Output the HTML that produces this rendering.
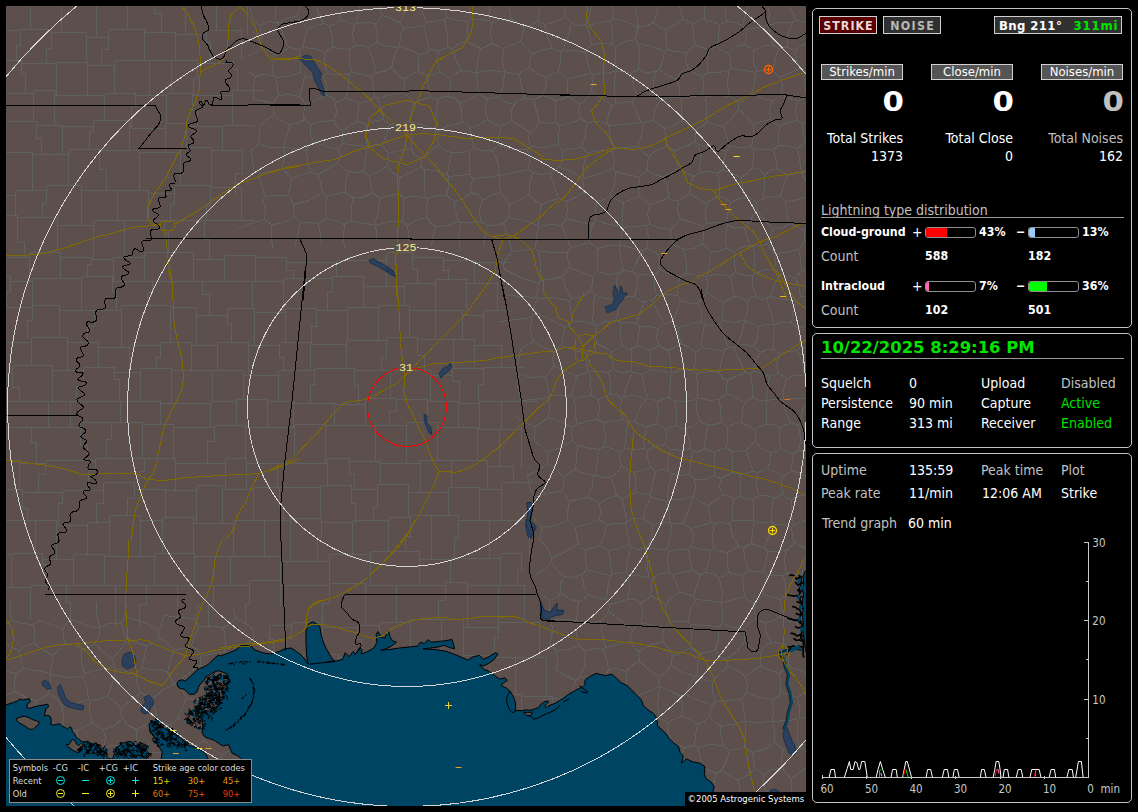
<!DOCTYPE html>
<html>
<head>
<meta charset="utf-8">
<title>Lightning Detector</title>
<style>
html,body{margin:0;padding:0;background:#000;}
body{width:1138px;height:812px;position:relative;overflow:hidden;font-family:"DejaVu Sans Condensed","Liberation Sans","DejaVu Sans",sans-serif;font-size:12px;color:#fff;}
#map{position:absolute;left:6px;top:6px;width:800px;height:800px;background:#5d4f4b;overflow:hidden;}
#map svg{position:absolute;left:0;top:0;}
.panel{position:absolute;left:812px;width:318px;border:1px solid #c4c4c4;border-radius:5px;background:#000;}
.t{position:absolute;white-space:nowrap;line-height:16px;height:16px;font-size:12px;}
.b{font-weight:bold;}
.g{color:#c0c0c0;}
.gr{color:#00e000;}
.r{text-align:right;}
.btn{position:absolute;box-sizing:border-box;border:1px solid #d0d0d0;text-align:center;white-space:nowrap;}
.bar{position:absolute;box-sizing:border-box;width:51px;height:11px;border:1px solid #909090;border-radius:3px;background:#000;overflow:hidden;}
.bar i{display:block;height:100%;}
.n{font-size:14px;}
.s{font-size:12.3px;}
.big{font-family:"DejaVu Sans","Liberation Sans",sans-serif;font-size:27px;line-height:32px;height:32px;transform:scaleX(1.14);transform-origin:100% 50%;}
.date{font-family:"DejaVu Sans","Liberation Sans",sans-serif;font-size:16.45px;line-height:22px;height:22px;color:#00e400;}
.lg{transform:translate(-1.3px,-1px);position:absolute;white-space:nowrap;font-size:9.25px;line-height:12px;color:#dcdcdc;}
.hr{position:absolute;height:1px;background:#9a9a9a;}
</style>
</head>
<body>
<div id="map">
<svg id="mapsvg" width="800" height="800" viewBox="6 6 800 800">
<path transform="translate(0.5,0.5)" d="M14,821L13,809L7,798 M-22,800L-7,798L7,798 M248,820L249,809L251,795 M227,824L223,810L217,796 M251,795L234,792L219,794 M217,796L219,794 M192,821L191,811L194,804 M194,804L206,800L217,796 M134,820L136,809L134,796 M99,819L98,810L101,800 M101,800L119,799L134,796 M165,794L150,796L135,794 M165,794L162,805L161,820 M135,794L134,796 M223,627L225,641L224,651 M223,627L212,626L198,626 M224,651L213,653L200,656 M198,626L193,637L191,646 M191,646L197,649L200,656 M221,754L228,751L237,746 M221,754L219,763L218,770 M237,746L246,748L251,752 M218,770L235,772L250,775 M251,752L250,762L250,775 M253,792L254,784 M253,792L251,795 M218,770L216,772 M216,772L217,783L219,794 M250,775L254,784 M36,700L43,697L48,693 M36,700L32,709L28,720 M48,693L56,698L62,706 M28,720L31,724 M55,731L41,728L31,724 M55,731L62,725 M62,706L63,716L62,725 M69,758L73,754L80,746 M69,758L61,752L53,745 M80,746L78,739L76,730 M53,745L55,738L55,731 M62,725L70,729L76,730 M14,691L26,697L36,700 M14,691L8,694L2,698 M2,698L3,706L1,715 M28,720L16,720L6,720 M1,715L6,720 M2,698L-11,692L-20,682 M1,715L-11,719L-23,721 M6,720L6,731L4,745 M4,745L-8,745L-23,742 M499,175L499,184L500,192 M499,175L514,172L528,169 M509,204L505,198L500,192 M509,204L520,199L529,194 M528,169L532,172 M529,194L529,184L532,172 M531,317L516,319L499,321 M531,317L530,331L533,341 M520,349L526,345L533,341 M108,772L119,772L131,775 M108,772L102,765 M102,765L102,756L101,749 M101,749L103,746 M103,746L118,745L134,746 M137,750L134,746 M137,750L134,762L132,773 M132,773L131,775 M98,794L101,800 M98,794L102,785L108,772 M135,794L131,784L131,775 M70,774L86,768L102,765 M70,774L70,774 M98,794L85,790L72,788 M70,774L72,782L72,788 M70,774L67,766L69,758 M80,746L89,748L101,749 M103,729L98,727L92,722 M103,729L105,738L103,746 M76,730L85,726L92,722 M136,729L136,738L134,746 M136,729L128,725L122,718 M122,718L114,725L103,729 M163,752L163,763L164,773 M163,752L150,752L137,750 M164,773L147,773L132,773 M136,729L144,725L157,719 M122,718L120,712L121,707 M157,719L155,710L152,698 M152,698L146,695L140,692 M140,692L129,701L121,707 M177,718L172,723L168,724 M177,718L192,724L205,730 M168,724L168,733L171,745 M171,745L178,749L188,751 M188,751L195,746L204,739 M205,730L204,739 M157,719L161,721L168,724 M163,752L168,746L171,745 M207,728L220,728L233,726 M207,728L205,730 M221,754L211,748L204,739 M237,746L235,737L233,726 M193,802L193,788L192,770 M193,802L178,799L166,793 M166,793L167,785L168,778 M168,778L180,775L191,769 M192,770L191,769 M194,804L193,802 M216,772L206,773L192,770 M165,794L166,793 M164,773L168,778 M188,751L191,759L191,769 M173,684L181,689L186,698 M173,684L173,684 M173,684L187,674L200,664 M186,698L196,699L208,698 M200,664L206,675L212,685 M212,685L213,689L212,695 M208,698L212,695 M152,698L162,690L173,684 M177,718L181,709L186,698 M207,728L206,713L208,698 M233,657L230,654L224,651 M233,657L235,664 M235,664L225,674L212,685 M200,656L200,664 M235,664L240,670L248,674 M248,674L243,685L239,698 M234,701L222,699L212,695 M234,701L239,698 M237,720L233,726 M237,720L236,712L234,701 M126,606L124,612L125,616 M125,616L144,622L158,630 M164,615L161,623L158,630 M194,618L197,611L198,603 M194,618L179,617L164,615 M191,646L184,648L173,649 M173,684L171,679L167,671 M167,671L170,661L173,649 M194,618L198,626 M158,630L158,637 M173,649L165,641L158,637 M96,601L96,614L99,627 M125,616L121,623 M121,623L108,623L99,627 M71,619L84,624L99,628 M99,627L99,628 M237,720L253,722L264,724 M14,691L14,680L16,673 M50,674L50,683L48,693 M50,674L50,673 M16,673L23,668 M23,668L36,670L50,673 M16,673L7,671L-2,668 M5,642L2,646L-2,649 M5,642L11,647L19,650 M23,668L20,659L19,650 M26,748L33,752L38,754 M26,748L19,749L10,753 M10,753L8,760L6,769 M41,771L27,775L11,778 M41,771L41,761L38,754 M6,769L9,772L11,778 M53,745L47,751L38,754 M31,724L28,735L26,748 M4,745L8,750L10,753 M-23,770L-9,770L6,769 M11,791L12,783L11,778 M11,791L26,791L40,794 M42,772L40,785L40,794 M42,772L41,771 M70,774L54,775L42,772 M11,791L7,798 M74,819L72,805L68,794 M68,794L55,796L45,801 M45,801L42,810L40,821 M72,788L68,794 M40,794L45,801 M539,540L547,547L551,558 M551,558L551,562 M551,562L543,570L535,574 M530,505L535,497 M535,497L529,487L527,475 M542,527L537,522L532,516 M542,527L555,525L567,520 M567,520L567,512L569,501 M535,497L548,492L561,491 M561,491L566,496L569,501 M599,519L589,523L575,527 M599,519L606,524 M606,524L604,534L599,546 M575,527L576,535L578,543 M578,543L581,548L586,549 M599,546L593,547L586,549 M542,527L540,535L539,540 M567,520L571,523L575,527 M551,558L565,551L578,543 M625,523L627,532L629,544 M625,523L615,523L606,524 M599,546L608,550 M629,544L619,548L608,550 M233,657L242,646L253,638 M612,151L614,159L613,168 M612,151L601,150L587,152 M613,168L597,174L583,178 M587,152L583,165L583,178 M492,43L498,46L503,48 M492,43L486,46L480,48 M503,48L502,60L504,71 M504,71L489,70L476,72 M480,48L477,62L476,72 M459,103L470,98L478,93 M459,103L461,111L461,122 M461,122L466,123L469,128 M469,128L479,124L487,119 M478,93L486,98 M487,119L485,110L486,98 M504,71L504,71 M504,71L503,84L499,96 M478,93L477,84L476,73 M476,73L476,72 M499,96L491,98L486,98 M511,19L509,9L511,-3 M511,19L500,19L491,23 M491,23L489,21 M489,21L489,8L492,-4 M492,43L490,34L491,23 M503,48L513,44L520,41 M523,27L522,34L520,41 M523,27L517,22L511,19 M471,-3L469,6L470,19 M470,19L481,19L489,21 M582,179L583,178 M582,179L572,171L559,167 M559,167L562,158L562,150 M587,152L581,147 M581,147L572,148L562,150 M528,169L529,160L527,149 M527,149L530,146 M530,146L543,147L558,144 M550,173L540,174L532,172 M550,173L553,169L559,167 M558,144L562,150 M498,145L498,136L501,125 M498,145L514,149L527,149 M530,146L528,139L529,132 M501,125L505,124L511,120 M529,132L522,127L511,120 M487,119L494,124L501,125 M499,96L504,101L514,104 M511,120L511,110L514,104 M520,349L518,360L516,372 M562,276L566,270L569,267 M562,276L550,279L540,280 M540,280L540,264L538,251 M538,251L554,252L567,252 M567,252L567,258L569,267 M538,283L537,289L536,297 M538,283L540,280 M536,297L537,298 M571,298L565,287L562,276 M571,298L569,300 M537,298L553,297L569,300 M538,283L522,278L504,269 M512,251L524,250L535,248 M512,251L506,258 M535,248L538,251 M506,258L503,264L504,269 M512,251L507,235L503,223 M503,223L495,225L487,225 M483,246L484,236L487,225 M482,200L490,195L500,192 M482,200L479,209L480,221 M509,204L509,210L508,217 M508,217L503,223 M480,221L487,225 M536,297L520,296L502,294 M531,317L535,312 M535,312L534,305L537,298 M571,298L582,296L590,290 M569,267L579,271L592,276 M590,290L592,284L592,276 M597,248L597,259L597,271 M597,248L589,242 M589,242L579,245L570,247 M570,247L567,252 M597,271L592,276 M814,453L806,451L799,450 M806,476L812,472L818,466 M806,476L798,472L790,471 M799,450L793,453 M790,471L792,461L793,453 M772,721L758,722L745,721 M772,721L774,731L774,742 M745,721L745,735L744,747 M744,747L752,752 M774,742L764,749L752,752 M772,721L773,711L772,699 M772,721L786,720L797,719 M799,717L797,719 M799,717L799,706L797,697 M797,697L786,693L780,692 M772,699L778,696L780,692 M772,721L772,721 M745,721L745,720 M745,720L743,708L741,699 M746,692L741,699 M746,692L759,697L772,699 M745,720L733,724L720,725 M729,750L735,749L744,747 M729,750L723,745 M720,725L720,734L723,745 M668,722L659,718 M668,722L667,730L671,741 M659,718L654,723L646,723 M646,723L647,737L646,749 M646,749L648,752 M671,741L658,745L648,752 M583,818L584,810L584,802 M555,801L566,793L573,788 M584,802L579,796L573,788 M92,722L89,712L89,700 M121,707L113,701L107,696 M107,696L97,699L89,700 M62,706L75,703L88,699 M88,699L89,700 M50,674L66,677L82,676 M88,699L86,685L82,676 M146,645L144,655L141,668 M146,645L138,643L127,639 M127,639L119,650L112,658 M135,673L125,671L115,668 M135,673L141,668 M112,658L114,667 M115,668L114,667 M167,671L154,669L141,668 M158,637L152,643L146,645 M121,623L123,630L127,639 M99,628L99,634L95,643 M95,643L103,652L112,658 M140,692L137,684L135,673 M107,696L113,680L115,668 M81,649L90,646L95,643 M81,649L81,661L84,673 M84,673L98,669L114,667 M82,676L84,673 M239,698L253,701L269,704 M63,629L53,625L40,620 M63,629L63,635L64,643 M64,643L57,650L53,655 M53,655L43,650L34,643 M34,643L34,633L33,624 M33,624L40,620 M71,619L66,622L63,629 M81,649L73,644L64,643 M50,673L51,665L53,655 M19,650L25,645L34,643 M829,222L822,223L811,224 M804,240L804,230 M804,240L813,248L822,252 M811,224L804,230 M527,475L537,470L547,463 M561,491L563,485L563,477 M563,477L556,469L547,463 M534,440L541,446L547,452 M547,463L547,456L547,452 M563,477L569,472L575,469 M547,452L560,447L572,440 M572,440L577,445 M577,445L576,457L575,469 M541,699L556,698L573,696 M572,715L574,706L573,696 M572,715L557,718L546,722 M235,618L242,621L253,629 M235,618L234,614L233,607 M223,627L229,624L235,618 M253,638L253,629 M658,1L664,-4 M658,1L645,-2L632,-2 M653,22L657,12L658,1 M653,22L647,25L638,27 M632,-2L636,11L638,27 M630,-5L621,-1L611,0 M638,27L638,27 M638,27L625,21L612,18 M612,18L613,10L611,0 M609,196L616,199L623,202 M609,196L604,199L596,201 M595,219L595,212L596,201 M595,219L608,224L622,226 M622,226L622,216L623,202 M615,171L614,185L609,196 M615,171L627,174L639,177 M639,177L638,188L639,196 M639,196L633,198L623,202 M582,179L583,185L583,192 M613,168L615,171 M583,192L588,194L596,201 M597,248L609,245L619,245 M622,227L622,226 M622,227L621,236L619,244 M589,242L590,232L592,224 M592,224L595,219 M619,244L619,245 M622,227L636,226L646,225 M646,225L649,223 M649,223L647,213L649,204 M649,204L644,199L639,196 M470,19L467,21 M480,48L474,45L466,41 M466,41L467,33L467,21 M446,-2L445,7L446,17 M467,21L457,20L446,17 M446,17L444,19 M444,19L434,21L426,22 M426,22L422,12L418,-2 M472,178L469,174 M472,178L486,177L499,175 M469,174L469,161L469,151 M499,175L497,161L492,150 M492,150L481,150L473,147 M473,147L469,151 M482,200L478,194L470,192 M499,175L499,175 M470,192L471,186L472,178 M451,152L461,152L469,151 M451,152L449,161L447,174 M447,174L448,176 M448,176L458,175L469,174 M498,145L492,150 M469,128L472,139L473,147 M504,71L511,73L519,74 M514,104L517,100L524,98 M519,74L521,86L524,98 M529,132L535,128L539,121 M539,121L536,111L533,99 M524,98L533,99 M558,144L558,137L559,125 M539,121L546,123L555,122 M555,122L559,125 M565,17L564,10L566,2 M565,17L553,22L544,24 M544,24L537,20 M537,20L539,11L537,1 M566,2L559,0L555,-4 M555,-4L546,-1L537,1 M523,27L531,25L537,20 M531,-6L537,1 M611,0L603,-4 M653,22L659,27L666,29 M666,29L676,23L682,19 M664,-4L670,-0L678,4 M682,19L681,11L678,4 M688,-2L682,-1L678,4 M548,397L549,408L548,417 M548,397L534,399L520,400 M548,417L541,422L534,426 M534,426L524,422L515,416 M545,376L530,377L518,373 M545,376L547,385L549,395 M518,373L517,385L520,400 M549,395L548,397 M534,440L534,433L534,426 M572,427L560,421L548,417 M572,427L571,433L572,440 M516,372L518,373 M558,198L548,201L541,204 M558,198L566,201 M566,201L567,208L566,218 M541,204L539,214L538,225 M561,225L566,218 M561,225L550,224L538,226 M538,225L538,226 M529,194L534,200L541,204 M550,173L554,187L558,198 M583,192L576,196L566,201 M592,224L578,221L566,218 M508,217L524,220L538,225 M570,247L566,237L561,225 M535,248L536,236L538,226 M811,22L810,33L808,43 M811,22L819,22L830,25 M808,43L815,48L822,52 M815,-0L812,11L811,22 M811,22L811,22 M461,122L448,125L438,130 M451,152L443,149L438,144 M438,130L437,138L438,144 M459,103L455,98L447,96 M447,96L443,96L437,99 M438,130L437,130 M437,130L436,113L437,99 M438,144L429,152L421,158 M409,121L425,125L437,130 M409,121L411,134L411,149 M421,158L414,155L411,149 M466,41L459,43L452,48 M444,19L447,35L447,47 M447,47L452,48 M476,73L470,71L461,70 M452,48L456,61L461,70 M447,96L450,87L450,78 M461,70L455,73L450,78 M545,376L550,371L553,365 M533,341L543,347L554,351 M553,365L552,358L554,351 M671,229L660,228L649,223 M671,229L670,236L673,244 M646,225L648,238L646,248 M673,244L666,248L659,255 M659,255L653,251L646,248 M619,244L629,247L642,250 M642,250L646,248 M730,202L724,197L719,196 M730,202L727,214L726,223 M706,203L711,199L719,196 M706,203L705,215L706,223 M726,223L715,222L706,223 M680,219L675,224L671,229 M680,219L692,222L703,226 M673,244L677,246L683,249 M683,249L693,248L702,243 M703,226L703,236L702,243 M726,223L727,224 M703,226L706,223 M702,243L707,248L710,251 M710,251L718,251L726,248 M726,248L725,237L727,224 M799,450L800,437L798,424 M780,427L783,425L790,423 M780,427L779,439L780,448 M780,448L787,451L793,453 M790,423L798,424 M822,400L815,398L811,396 M817,428L807,427L800,423 M811,396L808,398 M808,398L802,409L800,423 M800,423L798,424 M783,749L781,757L781,767 M783,749L790,749L798,747 M809,765L799,772L791,778 M809,765L806,756L805,749 M791,778L786,774L781,767 M805,749L798,747 M774,742L778,745L783,749 M797,719L797,733L798,747 M779,673L780,683L780,692 M779,673L784,669L788,666 M788,666L801,670L809,675 M797,697L802,693L808,690 M809,675L810,683L808,690 M799,717L808,719L820,719 M805,749L812,746L820,740 M808,690L821,698L830,705 M823,775L818,770L809,765 M745,676L737,670L728,666 M745,676L754,669L760,666 M744,641L751,647L760,653 M744,641L736,651L726,659 M728,666L726,659 M760,666L760,659L760,653 M779,673L771,670L760,666 M746,692L747,685L745,676 M791,646L781,643L771,642 M791,646L788,657L788,666 M771,642L764,646L760,653 M771,642L766,633L764,622 M764,622L756,619 M744,641L744,634L743,628 M756,619L749,622L743,628 M718,626L718,638L715,650 M718,626L722,623 M715,650L719,656L726,659 M743,628L732,627L722,623 M668,722L673,719L681,716 M659,718L657,704L659,686 M659,686L659,686 M659,686L669,690L681,696 M681,716L682,706L681,696 M671,741L676,744L684,747 M681,716L688,718L697,724 M697,724L695,736L694,745 M684,747L690,746L694,745 M720,725L716,723L709,716 M723,745L710,744L697,747 M697,724L705,720L709,716 M697,747L694,745 M631,714L622,722L613,730 M631,714L631,708L629,699 M629,699L618,697L607,694 M613,730L605,728L597,722 M597,722L598,711L599,702 M607,694L601,698L599,702 M646,723L638,717L631,714 M615,742L629,746L646,749 M615,742L615,735L613,730 M659,686L643,693L629,699 M629,699L629,699 M578,741L582,733L584,726 M578,741L587,746L594,752 M594,752L605,750L613,745 M613,745L615,742 M584,726L591,725L597,722 M584,726L578,719L572,715 M574,693L573,696 M574,693L588,698L599,702 M563,752L563,760L566,767 M575,777L575,784L573,788 M575,777L569,770L566,767 M578,741L571,747L563,752 M594,752L594,763L590,773 M590,773L583,774L575,777 M-19,623L-7,626L3,628 M10,600L10,609L11,620 M11,620L5,623L3,628 M5,642L2,635L3,628 M33,624L22,623L11,620 M730,202L738,198L746,197 M757,210L749,220L744,227 M757,210L756,202 M744,227L733,227L727,224 M746,197L750,198L756,202 M811,224L809,208L808,196 M804,230L795,225L789,223 M789,223L786,212L785,201 M785,201L798,199L808,196 M831,192L819,195L809,195 M809,195L808,196 M821,167L810,168L801,172 M809,195L806,182L801,172 M631,546L627,559L626,572 M631,546L629,544 M608,550L610,560L611,574 M626,572L620,572L611,574 M586,549L585,557L586,569 M586,569L600,573L610,575 M611,574L610,575 M551,562L557,571L564,576 M586,569L582,574 M564,576L572,577L582,574 M606,599L607,588L610,575 M606,599L595,597L587,594 M582,574L583,584L587,594 M606,599L609,604 M628,574L626,572 M628,574L629,588L627,599 M627,599L617,602L609,604 M480,221L471,222L460,222 M460,222L458,236L460,251 M569,501L577,499L587,497 M575,469L582,472L593,475 M593,475L592,485L587,497 M626,521L624,508L622,498 M626,521L625,523 M622,498L616,495 M599,519L600,511L599,503 M616,495L607,498L599,503 M599,503L595,500L587,497 M593,475L595,474 M616,495L614,487L610,477 M610,477L601,477L595,474 M577,445L586,447L598,449 M595,474L597,461L598,449 M610,477L617,472L621,465 M604,446L611,448L620,452 M604,446L598,449 M621,465L619,459L620,452 M643,518L645,507L651,497 M643,518L647,521L652,524 M652,524L661,522L669,522 M669,522L669,512L666,501 M666,501L656,498L651,497 M723,494L729,496L733,499 M723,494L719,487L720,478 M720,478L726,475L732,472 M740,496L740,486L740,474 M740,496L733,499 M732,472L740,474 M732,520L742,520L753,520 M732,520L732,511L733,499 M753,499L753,511L753,520 M753,499L745,498L740,496 M700,653L695,651L690,647 M700,653L708,651L715,650 M718,626L705,625L690,624 M690,647L691,637L690,624 M722,623L722,612L721,602 M695,599L708,600L721,602 M695,599L689,612L688,621 M688,621L690,624 M753,499L758,495 M758,495L767,495L773,498 M753,520L754,521 M754,521L763,522L771,522 M773,498L771,509L771,522 M751,543L752,531L754,521 M751,543L743,547 M732,520L729,523 M743,547L738,546 M738,546L732,535L729,523 M723,494L713,501L708,505 M711,522L708,511L708,505 M711,522L714,523 M714,523L720,522L729,523 M574,693L573,687L575,680 M575,680L565,675L556,670 M556,670L557,661L556,650 M549,643L551,646L556,650 M581,147L585,133L586,122 M559,125L572,122L581,118 M586,122L581,118 M643,122L641,135L637,146 M643,122L641,122 M614,148L625,147L637,146 M614,148L610,137L608,125 M641,122L626,124L608,125 M612,151L614,148 M586,122L598,121L607,123 M608,125L607,123 M643,122L648,121L653,120 M637,146L643,152L648,156 M664,128L657,123L653,120 M664,128L665,135L666,146 M648,156L656,150L666,146 M639,177L641,174L647,170 M648,156L647,164L647,170 M695,130L695,135L695,141 M695,130L690,126L682,120 M695,141L685,146L674,150 M682,120L674,124L664,128 M674,150L666,146 M533,99L536,98L542,95 M555,122L555,111L555,100 M542,95L549,97L555,100 M807,-9L798,-1L788,4 M811,22L804,21L795,20 M795,20L793,13L788,4 M784,-26L783,-12L783,1 M788,4L783,1 M566,2L574,-3L579,-6 M549,395L559,395L571,395 M553,365L564,370L576,375 M571,395L574,384L576,375 M458,221L447,225L436,226 M458,221L454,209L454,201 M454,201L446,195 M446,195L436,195L427,198 M427,198L426,209L427,217 M427,217L430,223L436,226 M460,222L458,221 M431,247L432,236L436,226 M470,192L463,198L454,201 M448,176L448,187L446,195 M407,225L408,234L409,242 M407,225L417,219L427,217 M409,121L409,121 M437,99L430,97 M430,97L421,99L413,103 M409,121L410,114L413,103 M447,174L434,170L424,169 M427,198L425,197 M425,197L424,183L424,169 M421,158L421,166 M424,169L421,166 M447,47L438,50 M450,78L444,74L439,71 M438,50L437,60L439,71 M430,97L428,86L426,75 M439,71L434,74L426,75 M404,79L412,73L418,71 M404,79L404,84L403,92 M403,92L409,97L413,103 M426,75L418,71 M360,-0L370,2L378,1 M380,-24L378,-10L378,1 M554,351L561,345 M576,375L582,374L588,371 M588,371L586,363L586,353 M561,345L575,350L586,353 M535,312L552,320L565,327 M561,345L563,334L565,327 M569,300L570,310L572,321 M572,321L565,327 M726,447L720,449L714,452 M726,447L731,451 M731,451L732,460L732,472 M720,478L714,475 M714,452L714,465L714,475 M686,428L694,425L699,420 M686,428L688,436L690,448 M690,448L693,451 M704,448L698,451L693,451 M704,448L705,436L708,424 M708,424L703,423L699,420 M726,447L727,436L727,426 M727,426L721,422 M714,452L708,450L704,448 M708,424L715,424L721,422 M780,427L773,424L766,424 M766,424L766,412L766,400 M766,400L766,400 M790,423L786,413L782,399 M766,400L774,399L782,399 M808,398L794,398L783,399 M782,399L783,399 M755,430L749,426L741,422 M755,430L759,426L766,424 M741,422L742,411L744,402 M766,400L759,400L752,397 M752,397L744,402 M811,396L810,385L807,376 M807,376L813,374L821,369 M804,240L802,245L798,249 M789,223L781,228L773,228 M767,244L769,237L773,228 M767,244L770,249L775,253 M798,249L785,252L775,253 M755,441L749,446L746,450 M755,441L761,448L770,452 M746,450L749,460L753,471 M770,452L770,460L767,468 M767,468L762,470L757,472 M757,472L753,471 M727,426L735,423L741,422 M755,430L755,436L755,441 M731,451L738,451L746,450 M780,448L777,451L770,452 M740,474L747,472L753,471 M782,476L776,472L767,468 M782,476L790,471 M782,476L781,483L782,494 M758,495L756,485L757,472 M782,494L773,498 M721,770L729,775L738,780 M721,770L727,758L729,750 M752,752L753,761L754,769 M738,780L748,774L754,769 M781,767L770,770L763,775 M763,775L760,771L754,769 M759,822L760,810L756,799 M766,791L762,797L756,799 M766,791L779,796L792,800 M790,812L790,805L792,800 M792,800L792,800 M731,802L733,811L732,820 M731,802L736,797L739,795 M739,795L749,796L756,799 M738,780L739,788L739,795 M763,775L763,784L766,791 M791,778L791,788L792,800 M815,796L805,800L792,800 M791,646L797,641 M797,641L806,643L817,648 M809,675L814,672 M797,622L801,617L807,613 M797,622L790,621L779,616 M779,616L781,609L780,599 M807,613L806,607L808,602 M780,599L785,595 M785,595L795,596L806,600 M808,602L806,600 M797,641L798,632L797,622 M764,622L772,621L779,616 M762,594L758,598L753,602 M762,594L771,596L780,599 M753,602L754,611L756,619 M762,594L764,583L767,575 M767,575L776,575L783,575 M783,575L785,584L785,595 M802,574L793,574L786,573 M802,574L803,575 M783,575L786,573 M803,575L806,589L806,600 M803,575L814,576L825,573 M820,597L815,600L808,602 M636,774L626,770L616,768 M636,774L633,786L633,797 M633,797L623,796L611,797 M604,777L608,785L608,795 M604,777L608,772L616,768 M608,795L611,797 M613,745L617,758L616,768 M648,752L648,759L649,765 M649,765L644,770L636,774 M607,821L610,808L611,797 M640,805L640,814 M640,805L635,800L633,797 M590,773L595,777L604,777 M584,802L596,799L608,795 M685,694L699,700L712,705 M685,694L689,683L695,676 M695,676L697,675 M697,675L703,679L712,681 M712,681L712,692L715,701 M715,701L712,705 M709,716L710,711L712,705 M681,696L685,694 M700,653L697,664L697,675 M728,666L720,672L712,681 M741,699L727,700L715,701 M721,770L715,773 M731,802L723,800L710,795 M715,773L714,783L710,795 M697,747L700,756L702,767 M715,773L707,769L702,767 M698,813L700,807L698,802 M710,795L704,799L698,802 M652,766L664,768L674,767 M652,766L657,781L663,794 M674,767L679,774L684,779 M684,779L684,785L683,792 M683,792L679,795L671,797 M663,794L671,797 M649,765L652,766 M684,747L679,758L674,767 M640,805L652,798L663,794 M702,767L692,773L684,779 M698,802L692,799L683,792 M668,821L669,809L671,797 M717,173L710,171L699,172 M717,173L722,169 M722,169L723,161L726,150 M699,172L700,157L698,144 M698,144L711,149L726,150 M719,196L719,184L717,173 M746,197L742,186L741,177 M741,177L733,174L722,169 M756,202L763,198 M741,177L748,172L752,167 M752,167L759,169L764,175 M764,175L764,185L763,198 M757,210L765,221L773,228 M785,201L780,196 M763,198L772,196L780,196 M272,248L271,235L271,224 M294,246L297,235L300,222 M271,224L284,222L294,216 M300,222L294,216 M300,222L307,222L318,223 M318,223L320,235L321,246 M644,448L633,449L624,448 M644,448L643,438L646,427 M624,448L626,433L627,422 M646,427L641,425L634,421 M627,422L634,421 M604,446L605,435L603,422 M620,452L624,448 M622,419L611,421L603,422 M622,419L627,422 M672,473L668,485L667,500 M672,473L680,475L689,474 M689,474L694,479 M694,479L695,486L693,496 M667,500L679,499L693,496 M693,496L693,496 M670,449L667,459L667,470 M670,449L681,450L690,448 M667,470L672,473 M693,451L690,461L689,474 M714,475L705,479L694,479 M708,505L699,501L693,496 M669,522L671,523 M666,501L667,500 M671,523L675,523L682,523 M682,523L688,511L693,496 M711,522L701,525L691,528 M682,523L691,528 M650,467L641,470L634,472 M650,467L655,471 M655,471L652,483L650,495 M634,472L635,480L635,492 M635,492L644,493L650,495 M621,465L628,470L634,472 M647,450L647,457L650,467 M647,450L644,448 M665,444L654,446L647,450 M665,444L670,449 M667,470L660,469L655,471 M651,497L650,495 M622,498L629,495L635,492 M626,521L634,518L643,518 M631,546L636,549L645,548 M628,574L636,575L648,577 M648,577L647,563L645,548 M650,595L651,588L651,580 M650,595L647,599L640,602 M640,602L633,599L627,599 M648,577L651,580 M652,524L651,535L647,547 M671,523L670,537L666,549 M666,549L658,549L647,547 M645,548L647,547 M665,604L670,598L679,592 M665,604L666,614L670,621 M695,599L693,596 M670,621L678,621L688,621 M679,592L685,593L693,596 M753,602L746,599L744,596 M721,602L721,602 M744,596L734,599L721,602 M763,571L754,571L748,570 M763,571L767,575 M748,570L742,575 M744,596L743,587L742,575 M650,595L658,599L665,604 M640,602L642,611L641,622 M670,621L664,627 M664,627L652,625L641,622 M608,611L622,621L632,630 M608,611L604,617L600,621 M605,647L602,635L600,621 M605,647L619,643L630,641 M630,641L630,635L632,630 M608,611L609,604 M641,622L635,626L632,630 M806,476L808,486L807,494 M782,494L785,497L791,499 M791,499L799,495L807,494 M807,494L814,498 M751,543L757,546L764,547 M771,522L775,524 M775,524L768,536L764,547 M763,571L766,560L767,551 M786,573L784,561L785,550 M785,550L776,551L767,551 M748,570L744,558L743,547 M767,551L764,547 M549,600L549,609L550,617 M549,600L556,597L560,592 M560,592L568,598L578,601 M550,617L551,619 M551,619L565,619L576,620 M578,601L577,609L576,620 M542,595L549,600 M564,576L560,583L560,592 M587,594L583,599L578,601 M549,643L552,631L551,619 M556,650L568,649L578,645 M578,645L576,633L578,621 M578,621L576,620 M600,621L589,622L578,621 M603,649L595,648L585,650 M603,649L606,658L608,669 M585,650L584,665L579,677 M579,677L589,676L602,678 M602,678L606,673L608,669 M605,647L603,649 M578,645L585,650 M575,680L579,677 M607,694L604,686L602,678 M626,671L626,686L629,699 M626,671L616,668L608,669 M565,17L571,23 M592,-1L590,11L585,25 M571,23L580,25L585,25 M610,21L597,22L587,26 M610,21L612,32L612,44 M612,44L603,43L591,44 M587,26L589,34L591,44 M612,18L610,21 M585,25L587,26 M638,27L636,31L635,39 M615,47L624,41L635,39 M615,47L612,44 M662,176L670,173L678,167 M662,176L667,185L668,197 M689,193L690,184L693,176 M689,193L685,196L678,200 M693,176L685,172L678,167 M678,200L671,200L668,197 M647,170L655,175L662,176 M674,150L675,157L678,167 M649,204L658,202L668,197 M706,203L696,197L689,193 M699,172L693,176 M680,219L677,211L678,200 M695,141L698,144 M374,224L375,225 M374,224L378,210L379,198 M375,225L390,221L402,221 M402,221L403,210L403,197 M379,198L386,196L398,193 M403,197L398,193 M407,225L402,221 M376,240L376,231L375,225 M425,197L413,196L403,197 M421,166L410,172L399,177 M399,177L399,184L398,193 M399,46L400,35L403,28 M399,46L411,50L418,54 M403,28L412,27L423,25 M423,25L426,36L429,49 M429,49L426,53L418,54 M426,22L423,25 M438,50L429,49 M418,71L418,61L418,54 M404,79L397,74L391,67 M399,46L397,47 M397,47L394,55L391,67 M581,118L578,113L579,104 M612,105L608,113L607,123 M612,105L600,97L591,91 M591,91L586,99L579,104 M555,100L561,99L567,96 M579,104L573,99L567,96 M519,74L523,69L529,67 M542,95L545,87L546,77 M546,77L536,73L529,67 M520,41L527,48L531,54 M544,24L547,37L552,48 M531,54L542,49L552,48 M531,54L529,61L529,67 M783,1L776,2L767,4 M758,-3L764,-1L767,4 M574,398L584,396L591,395 M574,398L575,410L576,424 M576,424L588,420L597,419 M597,419L599,408L598,399 M591,395L598,399 M571,395L574,398 M589,371L590,381L591,395 M589,371L588,371 M572,427L576,424 M603,422L597,419 M622,419L620,408L621,398 M621,398L617,395L610,393 M610,393L603,397L598,399 M608,372L599,371L589,371 M608,372L610,381L610,393 M682,19L687,20L692,24 M705,-0L704,9L704,19 M692,24L698,20L704,19 M666,29L665,38L667,49 M694,45L693,33L692,24 M694,45L686,52 M686,52L675,51L667,49 M655,71L646,72L638,69 M655,71L659,69 M638,69L639,55L638,43 M638,43L652,46L664,51 M659,69L662,61L664,51 M635,39L638,43 M667,49L664,51 M752,167L753,159L753,148 M753,148L761,149L773,149 M764,175L770,170L777,168 M773,149L775,158L777,168 M780,196L783,186L787,175 M777,168L783,172L787,175 M801,172L801,172 M801,172L795,173L787,175 M773,149L778,145 M801,172L799,158L797,148 M797,148L786,145L778,145 M342,143L342,137L342,130 M342,143L356,145L367,146 M342,130L350,125L357,121 M357,121L366,124 M367,146L365,135L366,124 M377,98L380,107L383,119 M377,98L391,94L403,92 M409,121L400,123L389,124 M389,124L383,119 M374,96L368,101L359,102 M374,96L373,88L371,76 M371,76L363,74L351,72 M359,102L353,100L345,98 M345,98L348,88L348,74 M351,72L348,74 M377,98L374,96 M357,121L357,113L359,102 M366,124L376,120L383,119 M391,67L383,71L375,72 M375,72L371,76 M411,149L398,150L388,153 M399,177L391,171L387,165 M387,165L388,160L388,153 M389,124L386,134L382,145 M388,153L382,145 M367,146L367,146 M367,146L374,144L382,145 M399,22L389,17L382,15 M399,22L405,11L411,-2 M405,-6L391,-2L379,2 M382,15L380,10L379,2 M403,28L399,22 M378,1L379,2 M354,45L352,33L354,25 M354,45L362,45L368,47 M368,47L376,42 M376,42L377,33L375,23 M375,23L368,22L356,23 M356,23L354,25 M349,49L354,45 M349,49L349,62L351,72 M375,72L373,61L368,47 M397,47L387,46L376,42 M382,15L379,19L375,23 M360,-0L358,13L356,23 M621,398L623,396 M634,421L639,408L646,399 M646,399L634,395L623,396 M675,401L668,397 M675,401L676,414L676,425 M668,397L663,398L657,401 M657,401L658,413L656,424 M656,424L659,425L666,429 M666,429L671,426L676,425 M686,428L681,428L676,425 M699,420L696,410L696,399 M696,399L685,401L675,401 M646,427L652,424L656,424 M646,399L647,398 M647,398L652,399L657,401 M665,444L666,436L666,429 M608,372L613,369 M613,369L612,361L611,351 M586,353L592,348L596,343 M611,351L604,347L596,343 M670,373L670,387L668,397 M670,373L671,373 M696,399L697,397 M671,373L682,369L693,370 M693,370L696,373 M696,373L697,386L697,397 M721,422L720,410L719,399 M697,397L708,400L719,399 M744,402L734,396L726,393 M719,399L726,393 M750,373L745,372 M750,373L752,386L752,397 M726,393L726,387L727,380 M745,372L735,376L727,380 M701,347L695,352 M701,347L713,349L724,350 M693,370L695,360L695,352 M696,373L709,371L719,372 M724,350L721,360L719,372 M719,372L721,377L727,380 M783,399L783,389L786,378 M807,376L804,375 M786,378L794,375L804,375 M819,348L810,348L800,346 M800,346L797,350 M804,375L802,363L797,350 M798,249L800,259L801,270 M801,270L807,271L816,270 M820,323L808,324L798,328 M798,328L799,335L800,346 M683,249L686,262L686,273 M710,251L709,264L707,275 M707,275L706,276 M706,276L698,275L686,273 M659,255L659,262L659,269 M659,269L670,274L680,276 M680,276L686,273 M659,269L654,275 M654,275L654,285L656,295 M656,295L668,294L677,295 M680,276L677,287L677,295 M807,613L815,618L826,624 M294,216L293,210L293,204 M318,223L326,218 M293,204L309,200L322,192 M322,192L326,196 M326,196L325,208L326,218 M344,249L343,235L344,224 M326,218L335,220L344,224 M374,224L362,223L351,220 M351,220L344,224 M372,192L370,183L369,175 M372,192L362,197L352,197 M352,197L345,192 M345,192L345,182L348,171 M348,171L355,172L363,171 M363,171L369,175 M379,198L372,192 M387,165L379,171L369,175 M351,220L351,208L352,197 M326,196L337,193L345,192 M367,146L365,158L363,171 M322,192L320,182L317,174 M348,171L343,168L337,162 M317,174L327,169L337,162 M342,143L338,149 M338,149L340,155L337,162 M651,580L658,574L669,572 M666,549L668,551 M669,572L667,561L668,551 M679,592L676,583L672,574 M669,572L672,574 M673,655L668,648L663,641 M673,655L671,658L671,665 M663,641L651,644L638,651 M671,665L665,672L659,676 M659,676L648,669L639,661 M639,661L638,651 M690,647L680,653L673,655 M664,627L662,634L663,641 M695,676L682,672L671,665 M630,641L634,648L638,651 M659,686L658,679L659,676 M626,671L631,665L639,661 M793,525L804,520L813,519 M793,525L791,527 M791,527L792,536L794,542 M794,542L801,546L807,549 M807,549L813,549L818,548 M791,499L791,513L793,525 M775,524L782,524L791,527 M785,550L789,548L794,542 M802,574L803,563L807,549 M615,71L616,71 M615,71L614,85L615,103 M616,71L625,71L630,73 M630,73L633,84L636,94 M615,103L621,102L631,101 M636,94L631,101 M612,105L615,103 M593,74L592,83L591,91 M593,74L602,73L615,71 M638,69L630,73 M615,47L615,57L616,71 M653,94L653,83L655,71 M653,94L646,92L636,94 M641,122L636,112L631,101 M659,101L654,109L653,120 M659,101L653,94 M585,52L573,50L562,50 M585,52L587,62L591,73 M591,73L577,76L567,78 M562,50L560,51 M560,51L560,61L558,71 M567,78L562,75L558,71 M571,23L568,35L562,50 M591,44L587,48L585,52 M593,74L591,73 M567,96L567,88L567,78 M552,48L560,51 M546,77L551,74L558,71 M795,20L792,22 M767,4L769,14L767,25 M767,25L767,25 M792,22L779,22L767,25 M739,-3L735,-0L726,2 M749,-0L745,14L742,25 M726,2L725,13L726,21 M726,21L735,22L742,25 M713,-8L718,-3L726,2 M767,25L758,27L745,29 M745,29L742,25 M719,24L711,21L704,19 M719,24L726,21 M686,52L685,60L688,68 M659,69L667,75L675,78 M688,68L681,71L675,78 M659,101L667,97L679,97 M675,78L679,86L679,97 M682,120L681,111L681,98 M681,98L679,97 M801,123L803,132L805,142 M801,123L815,122L825,118 M820,144L814,141L805,142 M797,120L787,122L779,126 M797,120L801,123 M797,148L802,144L805,142 M779,126L778,136L778,145 M719,24L718,37L717,46 M694,45L702,47L708,49 M717,46L708,49 M745,29L746,35L744,44 M717,46L721,50L729,53 M744,44L736,46L729,53 M753,148L751,146 M726,150L729,146 M751,146L741,147L729,146 M342,130L336,126L333,120 M345,98L338,101L335,102 M335,102L336,112L333,120 M326,73L323,76 M326,73L335,74L348,74 M323,76L326,84L326,95 M335,102L332,97L326,95 M278,95L277,86L275,77 M278,95L287,94L299,96 M275,77L287,76L300,72 M299,96L302,86L304,76 M304,76L300,72 M323,76L312,77L304,76 M326,95L316,99L305,103 M305,103L299,96 M272,-6L263,-4L250,1 M254,21L250,10L250,1 M326,73L324,62L325,52 M299,49L302,47 M299,49L300,59L300,72 M302,47L313,48L325,52 M349,49L340,48L332,47 M325,52L332,47 M273,75L275,77 M273,75L272,66L275,55 M299,49L294,48L288,47 M275,55L280,53L288,47 M248,71L255,76 M255,76L263,74L273,75 M248,55L255,52L260,47 M275,55L268,50L260,47 M254,21L260,25 M260,47L261,37L260,25 M572,321L582,321L592,323 M596,343L595,333L596,326 M592,323L596,326 M590,290L594,294 M592,323L593,307L594,294 M656,295L652,300 M652,300L657,312L664,323 M677,295L680,300 M680,300L676,312L671,322 M664,323L671,322 M671,373L670,360L668,350 M695,352L689,347L681,343 M668,350L674,347L681,343 M613,369L621,372L631,371 M611,351L618,348L621,345 M621,345L628,349L631,348 M631,348L631,360L631,371 M670,373L660,370L649,370 M647,398L643,384L642,374 M649,370L642,374 M623,396L626,386L632,372 M642,374L639,373L632,372 M631,371L632,372 M642,250L636,262L632,271 M654,275L644,274L637,275 M632,271L637,275 M619,245L620,256L623,270 M632,271L623,270 M597,271L607,274L617,273 M617,273L623,270 M769,376L778,373 M769,376L761,372L753,371 M778,373L776,363L779,353 M753,371L755,360L760,352 M760,352L766,349L773,349 M773,349L779,353 M766,400L767,388L769,376 M786,378L778,373 M750,373L753,371 M797,350L788,351L779,353 M753,346L757,338L758,326 M753,346L760,352 M758,326L765,324L773,324 M774,324L773,324 M774,324L773,336L773,349 M798,328L791,322 M791,322L782,322L774,324 M801,270L795,277 M819,299L811,296L800,296 M795,277L798,285L800,296 M791,322L793,310L796,300 M796,300L800,296 M726,248L734,251 M707,275L719,274L730,276 M730,276L735,272 M735,272L734,261L734,251 M744,227L746,235L750,245 M734,251L741,247L750,245 M767,244L758,245L753,246 M753,246L750,245 M753,346L744,344L737,345 M758,326L751,323L744,320 M744,320L742,331L737,345 M745,372L738,358L733,347 M737,345L733,347 M724,350L728,347 M728,347L733,347 M704,324L701,321 M704,324L712,325L719,323 M701,321L701,312L697,303 M719,323L722,320 M722,320L722,310L723,302 M723,302L714,297L706,292 M697,303L703,296L706,292 M701,347L702,335L704,324 M678,327L678,335L681,343 M678,327L691,323L701,321 M728,347L723,334L719,323 M680,300L690,303L697,303 M678,327L671,322 M744,320L744,320 M744,320L734,322L722,320 M747,301L740,297L734,296 M747,301L747,311L744,320 M734,296L728,299L723,302 M730,276L732,287L734,296 M706,276L707,282L706,292 M293,204L290,198L287,195 M287,195L290,187L291,178 M317,174L311,172 M291,178L301,174L311,172 M271,224L264,219 M264,219L251,223L238,228 M691,528L693,535L691,546 M668,551L678,549L688,549 M691,546L688,549 M672,574L682,572L692,570 M688,549L690,561L692,570 M693,596L697,583L700,574 M700,574L692,570 M767,25L771,34L773,45 M744,44L750,47L753,50 M773,45L764,45L753,50 M755,72L743,70L730,68 M755,72L756,71 M729,53L730,60L730,68 M756,71L753,62L753,50 M695,130L701,126L706,122 M729,146L726,135L723,126 M706,122L715,124L723,126 M751,93L744,100L738,102 M751,93L762,98L772,100 M753,124L745,115L738,109 M753,124L761,121L770,119 M738,102L738,109 M770,119L769,109L772,100 M751,146L753,136L753,124 M723,126L731,118L738,109 M779,126L773,122L770,119 M354,25L347,22L339,19 M332,47L332,37L329,25 M339,19L336,23L329,25 M339,19L341,9L341,-2 M639,326L638,337L637,345 M639,326L649,326L658,328 M658,328L656,336L658,345 M637,345L644,348L650,350 M658,345L650,350 M664,323L658,328 M668,350L664,348L658,345 M631,348L637,345 M649,370L650,361L650,350 M636,323L630,322L620,322 M636,323L639,313L644,301 M644,301L640,301L634,296 M634,296L627,296L617,299 M617,299L618,308L616,320 M617,299L617,299 M620,322L616,320 M621,345L620,332L620,322 M639,326L636,323 M652,300L644,301 M637,275L637,284L634,296 M617,273L616,285L617,299 M596,326L605,321L616,320 M594,294L604,298L617,299 M756,296L752,285L752,275 M756,296L761,299L766,298 M766,298L770,296 M770,296L774,285L779,274 M754,273L752,275 M754,273L765,269L774,269 M774,269L779,274 M747,301L750,297L756,296 M735,272L745,275L752,275 M773,324L770,310L766,298 M796,300L783,299L770,296 M795,277L788,276L779,274 M753,246L754,259L754,273 M775,253L775,261L774,269 M289,124L286,137L283,147 M289,124L296,123L304,119 M313,142L308,146L306,150 M313,142L310,134L310,124 M306,150L293,148L284,147 M283,147L284,147 M304,119L310,124 M338,149L327,146L313,142 M311,172L307,161L306,150 M333,120L320,121L310,124 M291,178L288,175L282,168 M282,168L284,157L284,147 M305,103L303,113L304,119 M265,196L261,185L258,173 M265,196L262,199 M253,170L258,173 M287,195L275,195L265,196 M282,168L271,171L258,173 M264,219L265,208L262,199 M250,150L254,148L258,143 M250,150L252,158L253,170 M258,143L269,147L283,147 M705,572L708,563L710,550 M705,572L713,573L718,577 M728,572L725,575L718,577 M728,572L727,562L727,552 M727,552L719,551L713,547 M713,547L710,550 M691,546L702,549L710,550 M700,574L705,572 M721,602L722,590L718,577 M742,575L736,574L728,572 M738,546L734,548L727,552 M714,523L712,535L713,547 M792,22L787,35L787,47 M773,45L778,48 M787,47L778,48 M808,43L800,45L795,50 M787,47L795,50 M756,71L764,70L772,70 M778,48L775,58L772,70 M702,76L703,84L702,94 M702,76L707,72 M707,72L718,72L728,70 M702,94L705,96 M705,96L718,95L729,96 M728,70L727,85L729,96 M688,68L696,74L702,76 M681,98L693,96L702,94 M708,49L707,61L707,72 M730,68L728,70 M706,122L706,107L705,96 M738,102L734,99L729,96 M755,72L754,82L751,93 M260,25L267,21L275,22 M276,-4L275,8L275,22 M288,47L283,35L277,22 M275,22L277,22 M302,47L304,39L307,28 M329,25L323,23 M307,28L316,25L323,23 M277,22L286,18L296,16 M307,28L302,23L296,16 M296,16L299,8L300,2 M291,-6L297,-2L300,2 M259,127L265,120L274,114 M273,103L265,101L253,99 M273,103L273,110L274,114 M258,143L259,134L259,127 M289,124L280,120L274,114 M255,76L253,86L253,99 M278,95L275,99L273,103 M780,77L792,71L800,68 M780,77L782,85L781,94 M781,94L789,98L797,100 M804,70L804,83L806,95 M804,70L800,68 M806,95L801,99L797,100 M795,50L796,60L800,68 M772,70L775,73L780,77 M772,100L777,98L781,94 M797,120L795,111L797,100 M823,98L814,96L806,95 M818,67L813,69L804,70 M323,23L317,11L316,-3 M300,2L308,1L315,-3 M30,-5L30,29 M61,2L96,2 M61,-3L61,32 M96,0L96,37 M127,5L154,5 M127,0L127,29 M154,-5L154,13L161,13L161,32 M185,-5L185,34 M216,-2L216,30 M247,-2L247,34 M0,30L20,30 M20,29L51,29 M20,29L20,45L16,45L16,60 M51,32L86,32 M51,29L51,48L46,48L46,63 M86,37L108,37 M86,32L86,62 M108,29L144,29 M108,29L108,49L101,49L101,65 M144,32L175,32 M144,29L144,60 M175,34L206,34 M175,32L175,60 M206,30L241,30 M206,30L206,42L210,42L210,63 M241,30L241,58 M0,60L21,60 M21,63L56,63 M21,60L21,73L25,73L25,93 M56,62L87,62 M56,62L56,95 M87,65L114,65 M87,62L87,95 M114,60L149,60 M114,60L114,93 M149,60L171,60 M149,60L149,95 M171,60L197,60 M171,60L171,93 M197,63L233,63 M197,60L197,78L193,78L193,95 M233,58L233,69L237,69L237,90 M0,93L33,93 M33,90L54,90 M33,90L33,121 M54,95L104,95 M54,90L54,125 M104,93L135,93 M104,93L104,120 M135,95L166,95 M135,93L135,106L131,106L131,128 M166,93L192,93 M166,93L166,123 M192,95L232,95 M192,93L192,110L197,110L197,126 M232,90L263,90 M232,90L232,125 M0,125L0,125 M0,121L36,121 M0,121L0,137L4,137L4,155 M36,125L62,125 M36,121L36,138L41,138L41,154 M62,126L93,126 M62,125L62,154 M93,120L129,120 M93,120L93,131L89,131L89,149 M129,128L165,128 M129,120L129,150 M165,123L186,123 M165,123L165,152 M186,126L222,126 M186,123L186,147 M222,125L253,125 M222,125L222,150 M0,155L1,155 M1,152L32,152 M1,152L1,195 M32,154L68,154 M32,152L32,190 M68,149L99,149 M68,149L68,185 M99,150L139,150 M99,149L99,169L106,169L106,190 M139,152L180,152 M139,150L139,190 M180,147L211,147 M180,147L180,185 M211,150L242,150 M211,147L211,187 M242,150L242,173L235,173L235,193 M0,195L15,195 M15,190L46,190 M15,190L15,215 M46,185L81,185 M46,185L46,203L42,203L42,217 M81,190L117,190 M81,185L81,225 M117,190L148,190 M117,190L117,220 M148,193L174,193 M148,190L148,220 M174,185L210,185 M174,185L174,204L170,204L170,220 M210,187L241,187 M210,185L210,205L206,205L206,220 M241,187L241,220 M0,215L17,215 M17,217L57,217 M17,215L17,242L24,242L24,257 M57,225L93,225 M57,217L57,252 M93,220L124,220 M93,220L93,259 M124,220L164,220 M124,220L124,257 M164,220L204,220 M164,220L164,232L168,232L168,252 M204,220L254,220 M204,220L204,239L209,239L209,259 M0,257L29,257 M29,252L60,252 M29,252L29,281 M60,257L91,257 M60,252L60,278 M91,259L113,259 M91,257L91,264L87,264L87,276 M113,257L144,257 M113,257L113,281 M144,252L193,252 M144,252L144,281 M193,259L224,259 M193,252L193,281 M224,255L255,255 M224,255L224,281 M255,257L286,257 M255,255L255,281 M286,262L336,262 M286,257L286,270L293,270L293,278 M336,260L386,260 M336,260L336,276 M386,252L412,252 M386,252L386,286 M412,257L443,257 M412,252L412,269L417,269L417,283 M443,260L474,260 M443,257L443,270L448,270L448,279 M474,262L510,262 M474,260L474,283 M0,276L10,276 M10,281L32,281 M10,276L10,291L6,291L6,307 M32,278L81,278 M32,278L32,307 M81,276L112,276 M81,276L81,310 M112,281L152,281 M112,276L112,291L116,291L116,310 M152,281L202,281 M152,281L152,292L147,292L147,305 M202,281L252,281 M202,281L202,294L209,294L209,315 M252,281L283,281 M252,281L252,308 M283,278L332,278 M283,278L283,312 M332,276L363,276 M332,276L332,292L327,292L327,310 M363,286L404,286 M363,276L363,307 M404,283L435,283 M404,283L404,305 M435,279L466,279 M435,279L435,310 M466,283L497,283 M466,279L466,315 M497,281L497,310 M0,310L1,310 M1,307L32,307 M1,307L1,342 M32,305L59,305 M32,305L32,320L27,320L27,337 M59,310L94,310 M59,305L59,337 M94,310L121,310 M94,310L94,326L87,326L87,342 M121,305L170,305 M121,305L121,347 M170,307L196,307 M170,305L170,342 M196,315L227,315 M196,307L196,345 M227,308L254,308 M227,308L227,323L231,323L231,342 M254,312L285,312 M254,308L254,345 M285,308L316,308 M285,308L285,342 M316,310L347,310 M316,308L316,326L311,326L311,344 M347,307L378,307 M347,307L347,340 M378,305L409,305 M378,305L378,340 M409,310L435,310 M409,305L409,337 M435,310L462,310 M435,310L435,339 M462,315L483,315 M462,310L462,339 M483,310L510,310 M483,310L483,345 M0,342L31,342 M31,337L67,337 M31,337L31,365 M67,342L98,342 M67,337L67,370 M98,347L129,347 M98,342L98,367 M129,345L160,345 M129,345L129,372 M160,342L191,342 M160,342L160,357L156,357L156,368 M191,345L217,345 M191,342L191,370 M217,342L248,342 M217,342L217,370 M248,345L279,345 M248,342L248,375 M279,342L310,342 M279,342L279,357L283,357L283,370 M310,344L346,344 M310,342L310,370 M346,340L386,340 M346,340L346,368 M386,337L417,337 M386,337L386,358L381,358L381,370 M417,339L453,339 M417,337L417,355L424,355L424,370 M453,339L474,339 M453,339L453,368 M474,345L501,345 M474,339L474,368 M501,342L501,367 M0,373L12,373 M12,365L52,365 M12,365L12,387L19,387L19,401 M52,370L83,370 M52,365L52,401 M83,367L114,367 M83,367L83,386L76,386L76,401 M114,372L140,372 M114,367L114,379L119,379L119,401 M140,368L171,368 M140,368L140,401 M171,370L212,370 M171,368L171,403 M212,370L243,370 M212,370L212,401 M243,375L278,375 M243,370L243,399 M278,370L314,370 M278,370L278,401 M314,368L354,368 M314,368L314,384L310,384L310,403 M354,370L390,370 M354,368L354,385L358,385L358,404 M390,370L430,370 M390,370L390,398 M430,375L452,375 M430,370L430,401 M452,368L483,368 M452,368L452,381L459,381L459,401 M483,367L523,367 M483,367L483,384L478,384L478,401 M0,401L48,401 M48,401L70,401 M48,401L48,427 M70,401L120,401 M70,401L70,427 M120,401L160,401 M120,401L120,422 M160,403L210,403 M160,401L160,424 M210,401L236,401 M210,401L210,427 M236,399L267,399 M236,399L236,425 M267,401L293,401 M267,399L267,427 M293,403L334,403 M293,401L293,427 M334,404L365,404 M334,403L334,425 M365,398L396,398 M365,398L365,425 M396,399L427,399 M396,398L396,411L389,411L389,425 M427,401L458,401 M427,399L427,422 M458,403L479,403 M458,401L458,427 M479,401L501,401 M479,401L479,429 M501,401L537,401 M501,401L501,429 M0,427L31,427 M31,427L80,427 M31,427L31,442L36,442L36,463 M80,422L111,422 M80,422L80,445L87,445L87,460 M111,422L142,422 M111,422L111,439L106,439L106,458 M142,424L173,424 M142,422L142,458 M173,427L214,427 M173,424L173,458 M214,425L245,425 M214,425L214,441L207,441L207,463 M245,427L294,427 M245,425L245,458 M294,424L325,424 M294,424L294,463 M325,425L375,425 M325,424L325,463 M375,425L406,425 M375,425L375,461 M406,422L437,422 M406,422L406,463 M437,427L477,427 M437,422L437,460 M477,429L499,429 M477,427L477,460 M499,429L521,429 M499,429L499,466 M521,425L521,468 M0,460L19,460 M19,463L45,463 M19,460L19,489 M45,460L95,460 M45,460L45,474L38,474L38,492 M95,458L144,458 M95,458L95,470L88,470L88,490 M144,458L175,458 M144,458L144,471L139,471L139,489 M175,463L225,463 M175,458L175,490 M225,458L246,458 M225,458L225,489 M246,463L277,463 M246,458L246,489 M277,463L327,463 M277,463L277,487 M327,458L349,458 M327,458L327,485 M349,461L380,461 M349,458L349,474L354,474L354,485 M380,463L420,463 M380,461L380,484 M420,460L451,460 M420,460L420,492 M451,460L487,460 M451,460L451,487 M487,466L513,466 M487,460L487,489 M513,466L513,482 M0,489L22,489 M22,492L62,492 M22,489L22,508L27,508L27,520 M62,490L103,490 M62,490L62,503L58,503L58,525 M103,482L134,482 M103,482L103,503L96,503L96,522 M134,489L165,489 M134,482L134,498L127,498L127,515 M165,490L196,490 M165,489L165,517 M196,485L222,485 M196,485L196,523 M222,489L253,489 M222,485L222,523 M253,487L279,487 M253,487L253,520 M279,487L320,487 M279,487L279,508L283,508L283,520 M320,485L351,485 M320,485L320,518 M351,489L377,489 M351,485L351,503L355,503L355,522 M377,484L408,484 M377,484L377,507L373,507L373,520 M408,492L448,492 M408,484L408,517 M448,487L479,487 M448,487L448,515 M479,489L501,489 M479,487L479,520 M501,482L532,482 M501,482L501,520 M0,520L35,520 M35,520L56,520 M35,520L35,553 M56,525L87,525 M56,520L56,559 M87,522L109,522 M87,522L87,554 M109,515L140,515 M109,515L109,556 M140,520L162,520 M140,515L140,556 M162,517L193,517 M162,517L162,553 M193,523L233,523 M193,517L193,553 M233,520L264,520 M233,520L233,556 M264,520L290,520 M264,520L264,556 M290,518L321,518 M290,518L290,561 M321,522L352,522 M321,518L321,537L317,537L317,561 M352,520L388,520 M352,520L352,554 M388,517L410,517 M388,517L388,551 M410,515L431,515 M410,515L410,536L405,536L405,551 M431,515L458,515 M431,515L431,559 M458,520L489,520 M458,515L458,538L454,538L454,558 M489,520L529,520 M489,520L489,558 M529,520L529,556 M0,554L11,554 M11,553L42,553 M11,553L11,587 M42,559L73,559 M42,553L42,564L47,564L47,585 M73,554L104,554 M73,554L73,585 M104,556L154,556 M104,554L104,585 M154,553L194,553 M154,553L154,585 M194,556L230,556 M194,553L194,585 M230,556L280,556 M230,556L230,585 M280,561L329,561 M280,556L280,585 M329,554L370,554 M329,554L329,583 M370,551L419,551 M370,551L370,585 M419,559L450,559 M419,551L419,585 M450,558L500,558 M450,558L450,582 M500,553L521,553 M500,553L500,585 M521,553L521,569L517,569L517,585 M0,587L30,587 M30,585L66,585 M30,585L30,619 M66,585L115,585 M66,585L66,602L70,602L70,622 M115,585L146,585 M115,585L115,625 M146,585L177,585 M146,585L146,604L139,604L139,625 M177,585L213,585 M177,585L177,625 M213,585L249,585 M213,585L213,605L208,605L208,625 M249,580L280,580 M249,580L249,604L245,604L245,624 M280,585L329,585 M280,580L280,605L284,605L284,625 M329,583L365,583 M329,583L329,603L322,603L322,627 M365,585L396,585 M365,583L365,625 M396,585L445,585 M396,585L396,622 M445,582L467,582 M445,582L445,600L438,600L438,619 M467,585L498,585 M467,582L467,627 M498,585L524,585 M498,585L498,627 M524,585L524,622 M269,625L291,625 M269,624L269,639L273,639L273,657 M291,622L322,622 M291,622L291,638L286,638L286,657 M322,627L357,627 M322,622L322,654 M357,625L379,625 M357,625L357,639L361,639L361,657 M379,622L410,622 M379,622L379,657 M410,619L441,619 M410,619L410,657 M441,619L463,619 M441,619L441,662 M463,627L498,627 M463,619L463,655 M498,622L539,622 M498,622L498,637L494,637L494,657 M539,622L539,657 M267,657L303,657 M267,657L267,689 M303,654L338,654 M303,654L303,699 M338,657L374,657 M338,654L338,694 M374,657L400,657 M374,657L374,694 M400,657L431,657 M400,657L400,694 M431,662L462,662 M431,657L431,673L438,673L438,689 M462,655L489,655 M462,655L462,692 M489,657L515,657 M489,655L489,692 M515,657L546,657 M515,657L515,694 M546,657L546,696 M269,691L300,691 M269,689L269,726 M300,699L331,699 M300,691L300,723 M331,694L362,694 M331,694L331,726 M362,694L393,694 M362,694L362,726 M393,694L419,694 M393,694L393,711L389,711L389,728 M419,689L445,689 M419,689L419,726 M445,692L495,692 M445,689L445,708L441,708L441,729 M495,694L521,694 M495,692L495,726 M521,696L552,696 M521,694L521,723 M552,694L552,724 M248,726L274,726 M274,723L300,723 M274,723L274,762 M300,726L331,726 M300,723L300,762 M331,726L367,726 M331,726L331,745L335,745L335,762 M367,728L398,728 M367,726L367,757 M398,726L424,726 M398,726L398,757 M424,729L465,729 M424,726L424,742L419,742L419,762 M465,726L514,726 M465,726L465,762 M514,723L536,723 M514,723L514,759 M536,724L560,724 M536,723L536,742L541,742L541,762 M243,767L270,767 M270,762L296,762 M270,762L270,790 M296,762L336,762 M296,762L296,776L292,776L292,795 M336,765L363,765 M336,762L336,790 M363,757L403,757 M363,757L363,777L356,777L356,798 M403,762L434,762 M403,757L403,795 M434,762L465,762 M434,762L434,798 M465,760L491,760 M465,760L465,781L458,781L458,798 M491,759L522,759 M491,759L491,770L484,770L484,790 M522,762L560,762 M522,759L522,795 M245,790L272,790 M272,795L303,795 M272,790L272,820 M303,790L352,790 M303,790L303,809L296,809L296,820 M352,798L402,798 M352,790L352,820 M402,795L428,795 M402,795L402,820 M428,798L478,798 M428,795L428,804L435,804L435,820 M478,790L499,790 M478,790L478,820 M499,795L530,795 M499,790L499,820 M530,800L560,800 M530,795L530,820" fill="none" stroke="#5f6060" stroke-width="1" shape-rendering="crispEdges"/>
<path d="M0.0,705.5 L4.2,705.5 L8.4,704.1 L12.7,702.7 L16.9,701.2 L19.7,699.1 L23.2,700.1 L26.7,699.1 L29.5,698.7 L30.2,702.0 L27.4,704.1 L26.7,707.6 L30.2,708.3 L33.7,706.9 L39.4,705.7 L45.0,704.8 L47.8,704.1 L48.5,706.9 L45.7,709.0 L45.0,713.2 L44.3,716.0 L47.8,715.3 L50.3,716.7 L51.3,720.2 L50.9,724.4 L53.4,725.1 L56.2,724.4 L59.8,723.7 L61.9,725.9 L64.7,727.3 L67.5,728.7 L70.3,726.8 L71.7,728.0 L72.4,731.5 L74.5,733.6 L75.9,737.1 L78.7,739.2 L81.5,741.3 L84.4,742.3 L86.5,741.3 L90.0,742.7 L92.8,744.1 L96.3,742.7 L97.0,745.5 L99.8,747.6 L102.6,749.1 L104.7,750.5 L106.2,752.6 L106.9,756.1 L109.0,758.9 L112.5,758.9 L114.6,753.3 L115.3,748.3 L119.5,745.5 L122.3,743.4 L126.5,742.0 L129.3,741.3 L132.2,742.0 L133.6,744.8 L137.1,746.2 L140.6,745.5 L143.4,747.6 L146.9,750.5 L147.6,753.3 L146.2,758.9 L146.2,760.0 L250.0,760.0 L243.4,762.3 L240.5,757.8 L237.5,755.6 L232.3,753.4 L230.1,749.0 L228.6,744.6 L222.7,746.0 L218.3,743.1 L213.9,740.1 L209.4,738.6 L205.0,737.2 L202.0,732.7 L202.8,726.8 L202.0,719.4 L205.0,713.5 L210.9,709.1 L218.3,706.1 L220.5,700.2 L224.2,694.3 L227.2,686.9 L228.6,679.5 L227.2,673.6 L222.7,672.2 L218.3,670.7 L213.9,672.2 L209.4,675.1 L205.7,676.6 L205.0,678.8 L202.8,681.8 L199.8,684.7 L198.4,687.7 L196.9,692.1 L193.9,694.3 L189.5,694.3 L186.5,691.4 L184.3,689.2 L180.6,688.7 L177.7,686.9 L176.9,683.2 L178.7,680.7 L182.1,679.8 L185.1,681.0 L187.3,679.3 L190.2,676.6 L193.2,673.6 L196.1,670.7 L199.8,668.5 L203.5,667.0 L206.5,665.5 L209.4,663.3 L212.4,660.3 L215.3,657.4 L218.3,655.2 L220.5,655.9 L224.9,654.4 L230.1,652.2 L236.0,650.0 L235.8,650.1 L241.1,645.3 L251.6,646.1 L254.3,649.6 L262.2,652.7 L270.1,654.0 L279.3,651.4 L284.6,648.8 L291.2,648.0 L296.4,651.4 L301.7,655.4 L304.9,659.3 L308.0,664.1 L306.5,655.1 L305.9,640.1 L306.2,629.0 L309.1,623.5 L313.1,621.9 L317.0,624.0 L319.9,626.9 L321.0,634.0 L323.6,643.0 L327.3,650.4 L331.0,656.7 L333.6,660.4 L334.7,660.6 L325.4,662.7 L336.0,661.2 L342.6,659.3 L345.2,652.7 L349.2,656.7 L353.1,651.4 L355.8,654.0 L359.7,647.5 L362.4,650.1 L361.0,654.0 L365.0,652.7 L370.3,650.1 L374.2,647.5 L376.9,642.2 L376.1,634.3 L378.2,631.6 L380.8,636.9 L384.8,638.2 L386.6,633.0 L388.7,631.1 L390.0,636.9 L392.7,640.9 L396.6,642.2 L391.4,646.1 L386.1,648.8 L380.8,650.1 L388.7,649.6 L399.3,648.0 L409.8,646.9 L417.7,646.1 L420.4,642.2 L424.3,643.5 L428.3,639.5 L430.9,642.2 L436.2,641.7 L444.1,640.9 L452.0,639.5 L453.3,643.5 L454.6,648.8 L449.3,647.5 L444.1,645.3 L438.8,646.9 L430.9,648.0 L423.0,648.8 L436.2,649.6 L446.7,651.4 L457.3,655.4 L467.8,660.1 L473.1,656.7 L479.7,655.4 L483.6,659.3 L488.9,656.7 L495.5,652.7 L498.1,654.0 L494.2,659.3 L488.9,663.3 L483.6,665.9 L479.7,664.6 L483.6,669.1 L488.9,671.2 L494.2,675.1 L499.4,679.1 L504.7,677.8 L507.3,680.4 L503.4,683.0 L501.1,685.5 L506.6,688.2 L509.9,691.0 L512.1,694.3 L514.3,698.8 L515.5,703.2 L515.7,707.6 L515.2,710.4 L521.0,710.7 L526.5,709.8 L528.8,710.4 L532.1,709.8 L535.4,708.7 L538.7,707.6 L540.4,704.8 L543.7,702.1 L546.5,701.0 L548.7,701.5 L546.5,704.3 L544.8,706.0 L546.5,707.6 L547.6,706.5 L550.9,704.8 L555.3,703.2 L559.8,700.4 L564.2,697.6 L568.6,694.3 L573.1,691.6 L577.5,689.3 L579.7,688.2 L583.0,686.6 L585.3,684.3 L584.2,682.1 L586.4,678.8 L589.7,676.6 L593.0,674.9 L596.3,673.3 L600.0,674.4 L605.6,675.5 L611.8,674.2 L616.4,678.0 L621.1,682.6 L627.3,685.7 L631.9,690.4 L636.6,695.0 L641.3,699.7 L643.4,705.9 L649.0,710.6 L653.7,713.7 L656.8,718.3 L657.7,726.1 L661.4,729.2 L666.1,733.9 L669.2,738.5 L673.9,743.2 L678.5,746.3 L680.1,752.5 L683.2,755.6 L681.6,763.3 L686.3,758.7 L692.5,761.8 L700.2,763.3 L704.9,766.4 L704.3,774.2 L706.4,778.9 L711.1,782.0 L714.2,786.6 L712.7,792.8 L711.1,808.4 L711.1,812.0 L0.0,812.0Z" fill="#004464" stroke="#000" stroke-width="1" stroke-linejoin="round"/>
<path d="M16.2,718.8 L19.7,717.4 L23.9,716.0 L28.1,717.4 L32.3,719.5 L36.6,720.9 L39.4,722.1 L38.0,725.1 L35.1,727.3 L33.0,729.4 L29.5,729.1 L26.7,727.3 L23.2,725.1 L19.7,723.0 L16.9,720.9Z" fill="#5d504a" stroke="#000" stroke-width="1"/>
<path d="M66.1,744.1 L68.9,744.8 L71.0,741.3 L72.4,739.5 L74.5,740.3 L76.6,744.1 L78.7,745.5 L80.8,743.4 L83.0,744.1 L82.2,747.6 L80.8,750.5 L78.7,752.6 L75.9,751.9 L73.1,750.5 L70.3,748.3 L67.5,746.2Z" fill="#5d504a" stroke="#000" stroke-width="1"/>
<path d="M160.7,762.3 L162.2,751.9 L157.7,744.6 L156.3,738.6 L150.3,732.7 L148.9,723.9 L153.3,720.9 L156.3,723.9 L162.2,726.8 L168.1,730.5 L172.5,732.7 L176.9,735.7 L181.4,738.6 L185.8,743.1 L190.2,746.0 L196.1,747.5 L202.0,750.5 L206.5,754.9 L209.4,762.3Z" fill="#004464" stroke="#000" stroke-width="1"/>
<circle cx="217.9" cy="703.9" r="1.6" fill="#004464"/>
<circle cx="217.9" cy="680.6" r="0.9" fill="#004464"/>
<circle cx="212.1" cy="692.0" r="1.7" fill="#004464"/>
<circle cx="213.3" cy="710.0" r="1.1" fill="#004464"/>
<circle cx="225.1" cy="688.8" r="1.2" fill="#004464"/>
<circle cx="212.1" cy="702.8" r="2.0" fill="#004464"/>
<circle cx="219.4" cy="674.8" r="1.4" fill="#004464"/>
<circle cx="227.9" cy="680.5" r="1.5" fill="#004464"/>
<circle cx="216.0" cy="684.2" r="1.3" fill="#004464"/>
<circle cx="195.9" cy="716.1" r="1.5" fill="#004464"/>
<circle cx="187.2" cy="720.9" r="1.3" fill="#004464"/>
<circle cx="228.2" cy="680.8" r="1.0" fill="#004464"/>
<circle cx="208.0" cy="686.5" r="1.6" fill="#004464"/>
<circle cx="223.7" cy="681.6" r="1.8" fill="#004464"/>
<circle cx="212.6" cy="710.5" r="2.1" fill="#004464"/>
<circle cx="209.8" cy="680.4" r="1.1" fill="#004464"/>
<circle cx="196.9" cy="716.0" r="0.8" fill="#004464"/>
<circle cx="205.6" cy="703.4" r="1.5" fill="#004464"/>
<circle cx="206.6" cy="712.2" r="1.8" fill="#004464"/>
<circle cx="223.1" cy="678.3" r="1.6" fill="#004464"/>
<circle cx="219.2" cy="678.6" r="1.8" fill="#004464"/>
<circle cx="220.5" cy="702.0" r="2.0" fill="#004464"/>
<circle cx="215.5" cy="679.6" r="2.2" fill="#004464"/>
<circle cx="199.5" cy="712.1" r="1.3" fill="#004464"/>
<circle cx="212.1" cy="685.3" r="1.1" fill="#004464"/>
<circle cx="189.8" cy="722.4" r="2.1" fill="#004464"/>
<circle cx="188.7" cy="720.5" r="1.6" fill="#004464"/>
<circle cx="193.3" cy="711.0" r="2.0" fill="#004464"/>
<circle cx="216.2" cy="703.3" r="1.2" fill="#004464"/>
<circle cx="213.9" cy="701.0" r="2.1" fill="#004464"/>
<circle cx="195.4" cy="721.1" r="1.2" fill="#004464"/>
<circle cx="194.8" cy="702.5" r="1.6" fill="#004464"/>
<circle cx="188.2" cy="722.1" r="1.2" fill="#004464"/>
<circle cx="211.5" cy="691.1" r="2.0" fill="#004464"/>
<circle cx="213.1" cy="677.1" r="1.8" fill="#004464"/>
<circle cx="207.1" cy="681.2" r="1.4" fill="#004464"/>
<circle cx="206.4" cy="690.2" r="1.4" fill="#004464"/>
<circle cx="220.0" cy="701.9" r="2.0" fill="#004464"/>
<circle cx="210.3" cy="701.4" r="1.2" fill="#004464"/>
<circle cx="212.8" cy="696.4" r="2.1" fill="#004464"/>
<circle cx="201.7" cy="715.9" r="1.8" fill="#004464"/>
<circle cx="223.3" cy="699.2" r="2.0" fill="#004464"/>
<circle cx="223.9" cy="691.9" r="1.1" fill="#004464"/>
<circle cx="209.1" cy="706.6" r="1.7" fill="#004464"/>
<circle cx="208.2" cy="713.5" r="0.8" fill="#004464"/>
<circle cx="199.2" cy="717.5" r="1.8" fill="#004464"/>
<circle cx="218.1" cy="674.9" r="0.9" fill="#004464"/>
<circle cx="198.7" cy="705.4" r="1.2" fill="#004464"/>
<circle cx="202.8" cy="709.9" r="1.8" fill="#004464"/>
<circle cx="217.0" cy="694.9" r="1.4" fill="#004464"/>
<circle cx="210.2" cy="712.6" r="1.7" fill="#004464"/>
<circle cx="193.6" cy="720.3" r="0.8" fill="#004464"/>
<circle cx="202.1" cy="712.4" r="2.2" fill="#004464"/>
<circle cx="208.1" cy="705.2" r="1.9" fill="#004464"/>
<circle cx="218.7" cy="696.7" r="1.1" fill="#004464"/>
<circle cx="206.1" cy="697.0" r="1.0" fill="#004464"/>
<circle cx="215.2" cy="687.4" r="1.8" fill="#004464"/>
<circle cx="207.9" cy="696.5" r="1.1" fill="#004464"/>
<circle cx="188.7" cy="720.0" r="1.1" fill="#004464"/>
<circle cx="205.8" cy="689.7" r="1.2" fill="#004464"/>
<circle cx="210.4" cy="711.4" r="1.4" fill="#004464"/>
<circle cx="217.2" cy="691.5" r="2.1" fill="#004464"/>
<circle cx="203.7" cy="713.8" r="1.8" fill="#004464"/>
<circle cx="219.3" cy="705.6" r="1.9" fill="#004464"/>
<circle cx="214.0" cy="677.8" r="2.0" fill="#004464"/>
<circle cx="224.7" cy="676.7" r="2.1" fill="#004464"/>
<circle cx="199.5" cy="728.6" r="1.8" fill="#004464"/>
<circle cx="204.4" cy="695.6" r="1.2" fill="#004464"/>
<circle cx="198.6" cy="708.1" r="1.5" fill="#004464"/>
<circle cx="218.1" cy="697.3" r="1.0" fill="#004464"/>
<circle cx="221.6" cy="703.4" r="1.1" fill="#004464"/>
<circle cx="216.6" cy="689.8" r="2.0" fill="#004464"/>
<circle cx="222.9" cy="692.0" r="1.8" fill="#004464"/>
<circle cx="211.7" cy="680.6" r="1.4" fill="#004464"/>
<circle cx="218.6" cy="693.3" r="1.5" fill="#004464"/>
<circle cx="223.7" cy="677.0" r="1.2" fill="#004464"/>
<circle cx="222.6" cy="697.8" r="1.6" fill="#004464"/>
<circle cx="201.7" cy="701.3" r="2.1" fill="#004464"/>
<circle cx="193.9" cy="715.3" r="1.6" fill="#004464"/>
<circle cx="212.0" cy="695.0" r="1.9" fill="#004464"/>
<circle cx="213.9" cy="714.7" r="1.5" fill="#004464"/>
<circle cx="188.6" cy="713.7" r="1.6" fill="#004464"/>
<circle cx="201.7" cy="711.9" r="1.4" fill="#004464"/>
<circle cx="221.3" cy="678.0" r="2.2" fill="#004464"/>
<circle cx="204.1" cy="705.8" r="1.6" fill="#004464"/>
<circle cx="227.6" cy="684.5" r="1.9" fill="#004464"/>
<circle cx="202.7" cy="712.3" r="1.6" fill="#004464"/>
<circle cx="218.3" cy="707.0" r="1.1" fill="#004464"/>
<circle cx="223.1" cy="694.4" r="1.2" fill="#004464"/>
<circle cx="224.9" cy="675.8" r="1.2" fill="#004464"/>
<circle cx="189.1" cy="712.2" r="1.2" fill="#004464"/>
<circle cx="212.8" cy="675.2" r="0.8" fill="#004464"/>
<circle cx="209.5" cy="679.4" r="1.0" fill="#004464"/>
<circle cx="211.1" cy="701.4" r="2.1" fill="#004464"/>
<path d="M204.4,706.7L204.2,708.3L202.8,709.6L202.7,710.1 M210.7,697.0L211.2,695.5L209.1,695.7L207.1,694.3L206.0,692.2 M204.9,699.7L203.7,698.8L201.5,696.9L202.2,696.5L202.4,698.4 M217.9,703.9L217.5,705.5L217.0,707.5 M217.9,680.6L217.8,680.6L218.6,679.2 M218.4,698.4L218.1,697.1L217.1,699.2L218.4,698.4 M223.5,686.1L224.2,684.3L226.3,683.1L225.3,684.3L224.5,683.4 M210.1,688.0L210.7,686.4L211.1,687.8L209.5,687.3 M212.1,692.0L210.8,693.1L212.7,691.7L214.7,693.4L215.1,693.1 M227.0,687.7L226.6,689.5L226.6,689.6L228.5,691.7 M213.3,710.0L214.4,708.1L214.0,707.0 M216.8,704.5L214.8,702.4L216.6,703.2L218.6,701.1L219.2,701.1 M216.7,692.5L216.5,691.9L214.5,693.8 M217.0,681.3L216.3,682.1L218.1,683.7L217.7,685.0 M212.0,696.2L210.1,694.4L208.4,693.4L208.1,692.6L210.0,693.5 M204.6,701.0L205.7,698.9L206.2,698.8L205.0,699.7L205.0,700.2 M225.1,688.8L225.6,688.8L226.7,688.1L228.6,688.1L227.5,687.7 M195.4,711.1L197.1,710.6L197.5,709.8 M212.1,702.8L211.8,701.0L209.8,702.6L207.8,703.5L208.1,702.7 M219.4,674.8L220.6,673.7L221.8,675.0 M227.9,680.5L229.3,682.5L230.1,681.1L230.0,679.7L227.8,679.6 M216.0,684.2L217.9,684.2L220.1,682.7L221.7,683.6L220.4,683.2 M223.9,696.6L224.4,698.4L223.9,698.7 M213.2,685.7L215.1,684.1L213.9,683.6L212.1,682.8L214.2,684.7 M195.9,716.1L195.7,716.3L196.8,716.3 M187.2,720.9L187.0,723.1L188.8,723.2 M214.4,699.6L216.3,697.8L215.1,697.9L214.2,699.0L214.8,699.1 M193.6,723.9L192.6,723.9L192.2,722.2L190.0,721.7L190.2,719.7 M228.2,680.8L228.0,682.7L229.3,682.3L228.2,682.2L227.5,684.0 M207.6,680.1L209.5,678.4L210.7,676.3 M214.8,692.7L214.8,692.7L215.1,694.2L215.7,695.2L216.6,696.8 M208.0,686.5L209.6,685.4L210.6,686.7L212.4,685.9L211.6,687.8 M223.7,681.6L223.2,681.3L225.1,681.5L226.0,680.1 M200.2,722.2L200.2,723.3L200.2,724.1L198.8,722.2L197.1,720.2 M208.8,704.1L207.4,702.4L206.0,700.9 M196.9,713.4L198.9,713.2L200.0,712.5 M205.0,704.1L204.5,704.7L202.4,703.4L202.0,702.7L201.5,704.6 M211.1,679.2L212.9,680.6L213.8,682.2L214.3,681.7 M210.9,703.4L209.9,701.8L211.0,700.3L212.9,698.6 M198.9,705.5L200.1,705.1L201.1,703.2L200.4,703.0 M212.6,710.5L211.7,709.3L211.3,707.9L209.5,707.9L209.5,706.7 M209.8,680.4L209.4,678.4L208.0,677.9L206.3,676.8 M218.0,676.3L217.5,678.4L219.0,678.6 M210.8,699.0L210.9,699.5L210.3,698.5L211.0,698.8 M196.9,716.0L197.3,716.6L196.9,717.4 M202.0,708.0L200.1,709.8L199.8,709.7L201.8,708.6 M216.4,701.3L216.8,699.6L217.4,699.4 M207.7,681.0L207.4,681.4L208.0,682.2L207.4,683.3L208.8,681.7 M205.6,703.4L204.7,703.8L205.6,704.7L204.3,703.7 M206.6,712.2L204.6,711.2L204.3,711.8L202.6,711.9L200.7,710.1 M214.3,706.2L214.2,705.5L213.5,705.5L211.9,707.1 M219.9,700.1L219.6,701.2L219.1,699.6 M191.1,723.1L191.3,724.1L193.2,723.8L192.6,722.1 M223.1,678.3L224.5,678.1L225.9,676.0L225.1,677.8 M211.1,714.7L210.3,716.4L209.1,717.1L208.3,718.9L207.5,718.6 M214.8,690.1L214.6,688.9L216.6,689.9L216.7,688.1 M221.0,675.1L220.5,673.7L220.8,675.0L221.0,676.5L221.3,675.1 M207.2,705.8L207.8,707.1L205.9,707.3 M219.2,678.6L217.4,679.2L215.9,680.3L216.5,679.2 M194.1,718.9L193.6,718.2L195.7,718.9L195.7,719.1 M207.5,715.6L209.4,717.4L208.3,715.9L208.9,716.8 M207.8,689.8L206.9,688.1L207.6,689.4L206.2,687.4 M204.7,708.2L203.8,706.8L203.2,707.2 M210.9,701.5L209.5,700.6L208.1,701.7L207.3,701.9 M220.5,702.0L221.2,703.2L219.4,704.8L219.0,703.5 M190.3,720.8L191.5,722.1L189.5,723.9L191.3,725.6L193.0,725.4 M223.1,698.2L222.0,699.8L222.1,700.4 M208.0,682.5L206.7,684.4L205.2,682.7 M199.9,710.0L200.8,708.1L201.9,708.3L201.9,706.2 M202.6,702.8L201.8,702.4L202.1,704.6L202.8,702.7 M213.9,713.6L214.6,711.4L214.0,712.4 M194.8,707.0L196.4,708.5L197.4,710.3 M191.1,710.7L190.2,710.0L189.7,710.8L188.6,709.4L189.6,708.7 M216.4,693.2L214.6,693.8L213.0,694.3 M215.5,679.6L215.1,677.7L217.0,677.4L217.0,678.0 M202.1,715.0L202.8,715.5L200.7,714.7 M199.5,712.1L198.8,711.2L197.0,712.1L195.9,712.3L195.0,711.1 M211.4,704.0L213.6,704.1L214.5,705.5 M212.1,685.3L211.8,684.6L210.0,686.2L208.9,687.9L208.7,688.9 M194.9,707.3L195.2,706.2L197.0,708.4 M189.8,722.4L190.9,721.8L189.4,722.2 M220.3,700.5L218.7,701.6L220.2,703.4L220.7,704.0L221.9,702.5 M207.7,680.6L207.8,679.6L208.1,678.8L208.7,676.8 M214.1,682.2L212.3,681.5L214.1,683.3L214.3,682.9L213.4,684.6 M204.9,727.1L203.2,725.4L205.1,724.7L205.2,724.4 M197.4,710.1L197.9,711.2L197.0,711.6L195.1,709.9 M204.1,703.3L204.0,701.6L205.8,701.8 M200.7,705.9L199.4,707.0L199.7,708.8 M188.7,720.5L186.5,719.3L185.6,718.6L183.7,720.3 M220.5,697.1L219.3,696.3L219.1,695.4L218.3,693.9L219.5,695.1 M223.3,685.6L225.0,684.3L226.5,683.6L226.4,682.2L228.1,684.4 M193.3,711.0L193.9,710.2L195.3,712.2 M223.3,693.4L222.9,692.0L224.5,690.3L225.3,689.3 M216.2,703.3L216.3,701.6L216.4,703.7L218.2,702.3L217.0,700.7 M213.9,701.0L214.1,699.0L214.5,698.0 M195.4,721.1L194.3,720.1L194.5,718.8 M217.6,696.4L215.7,694.5L216.9,696.3L216.1,696.2 M207.9,708.7L208.4,707.6L208.1,708.8 M194.8,702.5L193.7,701.2L195.8,699.3L195.6,700.9 M198.7,709.6L198.7,710.6L200.3,708.5L198.6,707.1 M212.7,707.9L211.1,707.1L209.1,706.2L209.6,706.3L208.6,706.7 M188.2,722.1L188.2,722.8L188.7,722.6 M198.3,701.2L200.4,699.2L200.3,700.4L202.5,698.8L202.3,699.9 M223.8,682.0L223.6,683.9L225.7,684.7L226.7,686.8 M211.5,691.1L211.3,693.0L210.7,692.3L212.8,692.8 M213.1,677.1L215.0,675.7L216.6,677.6L215.3,677.1L213.3,676.7 M195.2,720.5L193.9,719.3L193.8,718.4L193.6,720.6 M187.5,714.5L188.1,714.6L189.1,714.6L189.4,715.3 M186.9,716.7L188.0,717.6L189.8,715.5 M198.7,719.2L197.9,719.7L197.8,718.3 M207.1,681.2L207.3,679.6L208.2,678.5L209.2,679.3 M196.7,715.8L196.8,715.1L195.1,714.6L195.6,713.0 M213.6,677.6L214.4,678.3L216.4,679.9L215.3,680.5L213.5,680.2 M206.4,690.2L207.5,689.5L208.5,689.6L209.5,691.4 M220.0,701.9L220.8,699.8L220.4,699.2L218.4,698.8 M210.3,701.4L208.2,700.6L207.7,699.7 M212.8,696.4L213.1,698.3L214.3,698.9 M211.8,697.9L209.9,697.8L209.7,699.8L209.2,701.2 M214.6,689.8L216.7,688.2L215.4,687.0L216.1,685.9 M206.2,712.1L207.6,713.8L208.5,715.1L207.4,713.3L205.3,714.7 M200.6,713.1L199.5,712.3L198.1,712.4L196.4,710.5L194.5,708.7 M215.6,680.3L215.5,678.8L217.1,680.4L215.1,679.4L215.2,680.7 M201.7,715.9L200.3,717.5L199.0,717.8L197.4,719.9 M212.7,681.1L214.1,679.4L213.5,680.2L212.3,678.8 M190.2,714.3L191.0,713.8L191.8,712.2L190.3,714.4L191.9,713.0 M200.1,705.5L199.4,703.4L199.6,703.3L199.0,702.5 M211.7,718.9L212.5,717.6L211.5,719.2L211.3,720.7 M223.3,699.2L223.6,697.6L224.2,696.6L223.0,696.6 M223.9,691.9L222.3,693.2L224.5,692.8L222.4,692.1 M209.1,706.6L208.0,705.2L207.1,704.1L208.5,704.4L210.4,702.4 M208.2,713.5L207.4,713.6L205.2,712.3L207.2,710.2L207.4,711.5 M202.0,721.1L203.9,721.0L205.4,720.6 M198.7,716.4L200.0,715.8L200.6,715.2L199.7,717.0 M199.2,717.5L198.3,716.2L197.6,714.7L197.1,713.3L195.0,712.8 M218.1,674.9L216.3,677.0L216.0,679.0L214.8,678.6L215.7,677.2 M196.4,713.7L198.1,714.9L198.2,712.7L199.2,713.4 M224.7,676.9L226.4,678.5L227.0,678.5L227.3,676.8 M204.4,713.0L204.4,712.4L204.6,710.4L206.4,710.5 M198.7,705.4L197.9,706.4L200.0,706.0L201.7,704.3L203.8,704.3 M194.7,723.3L196.1,724.6L196.2,726.8 M215.9,688.5L214.6,686.3L214.3,686.3L216.3,685.1 M227.4,677.5L226.0,676.8L227.9,678.8L226.7,677.9 M202.8,709.9L204.5,708.1L206.7,706.8L207.2,708.4 M216.6,685.3L216.0,686.7L216.9,688.2L218.9,688.9 M218.3,683.8L216.7,682.1L218.6,682.6 M217.0,694.9L215.1,693.9L214.5,694.4 M207.1,698.3L206.1,700.0L205.2,701.5 M214.3,700.5L213.0,700.1L211.8,700.8L211.2,700.0 M210.2,712.6L211.0,711.4L210.6,709.8 M224.0,688.5L222.3,690.2L223.4,688.4L224.1,688.2 M193.6,720.3L194.3,719.6L196.1,721.6L194.0,722.2L193.9,721.6 M214.1,709.4L216.2,709.0L217.7,709.6 M202.1,712.4L202.1,713.9L202.2,712.1 M205.3,725.9L203.2,727.5L205.1,729.2 M208.1,705.2L210.3,705.5L208.4,704.3L209.1,704.3 M195.2,708.6L195.6,707.1L193.9,705.5 M206.6,682.1L206.2,682.6L207.8,684.7 M191.1,722.0L190.6,721.1L191.1,720.7L191.1,722.5L191.3,723.6 M218.7,696.7L217.0,698.5L216.2,698.5L216.9,700.2L218.9,700.5 M217.1,688.9L218.4,688.4L219.0,687.7L217.3,686.8 M207.9,683.3L207.4,682.1L205.7,681.5L204.8,681.4 M194.5,717.9L194.0,718.3L192.2,719.2 M221.6,686.0L220.7,686.0L220.8,687.1 M219.6,698.8L217.8,699.1L216.0,698.6L214.8,697.5 M206.1,697.0L206.7,694.9L208.6,696.0L208.9,693.8 M217.0,698.4L215.5,696.5L216.4,694.9 M219.8,699.9L217.9,698.2L219.4,699.0L219.6,697.3L217.9,696.4 M225.2,686.1L223.6,688.1L222.1,687.1L221.7,688.8L223.6,687.5 M215.5,702.9L215.5,702.8L215.7,704.3L216.9,703.6 M213.2,695.9L212.7,696.2L214.2,695.6L214.6,695.5L216.7,694.8 M215.2,687.4L213.2,689.3L214.6,688.2L213.4,687.0L215.2,685.0 M207.9,696.5L206.1,695.6L207.6,693.6L208.5,693.9L208.7,693.2 M188.7,720.0L189.7,719.3L188.2,717.9L186.8,720.1L186.2,719.3 M189.1,720.2L190.7,721.2L189.7,720.1L187.6,720.2L186.5,719.3 M205.8,689.7L204.3,689.3L205.7,689.5L204.1,687.7L205.4,686.2 M210.4,711.4L211.1,711.6L211.0,712.4L210.3,711.1 M212.7,689.6L210.8,689.9L211.2,691.7 M217.2,691.5L215.9,690.9L215.3,689.3 M203.7,713.8L203.7,712.5L204.6,712.1L204.5,710.2L204.5,710.5 M199.2,715.1L201.2,717.0L202.8,718.9L200.6,718.9L201.0,719.7 M211.5,709.9L212.7,708.4L214.5,706.6 M226.8,686.4L226.4,685.7L225.7,683.6 M218.5,689.1L219.4,689.2L218.8,689.9L220.7,689.5L219.4,688.2 M225.0,684.6L224.0,684.7L222.9,686.3L221.5,685.1L220.6,684.4 M219.3,705.6L219.1,703.6L219.3,702.0 M214.0,677.8L213.6,678.5L212.5,680.7 M224.7,676.7L226.6,675.1L225.3,676.8L227.3,678.7 M199.5,728.6L198.1,727.0L198.9,728.7 M204.4,695.6L206.6,696.6L207.3,695.0 M198.6,708.1L198.3,709.4L197.3,707.6L197.9,705.5L199.8,707.6 M212.6,679.8L212.4,680.3L214.0,680.1L212.6,682.1L214.7,680.0 M218.1,697.3L217.7,698.7L219.7,696.6 M203.1,730.5L203.0,729.1L200.8,728.2 M211.7,695.5L212.8,694.0L211.2,694.3L211.7,694.0L212.1,693.0 M214.4,710.4L212.9,710.4L215.0,709.5L213.6,710.5L212.4,710.8 M214.8,694.2L215.9,695.5L216.5,696.3L217.2,695.9 M206.4,723.7L204.6,723.7L204.5,724.3 M227.3,690.2L226.4,688.2L226.7,687.8 M212.4,679.7L214.3,679.6L214.3,678.7 M221.6,703.4L222.4,703.1L221.6,703.9 M216.6,689.8L218.0,688.9L216.9,690.8 M199.5,720.4L201.4,721.1L199.5,721.8L197.8,723.9 M222.9,692.0L225.1,692.5L223.4,693.5L221.5,695.2 M206.1,696.4L207.8,696.4L209.9,695.2 M211.7,680.6L210.7,679.2L211.4,680.0L213.3,679.3 M218.6,693.3L216.7,691.6L217.6,689.6L218.8,689.7 M197.1,728.8L196.3,726.9L194.4,726.2L194.5,728.2 M212.7,698.1L213.9,700.0L212.1,699.6 M205.4,698.2L207.3,698.2L209.3,698.6L208.9,696.5L207.1,695.1 M219.2,708.2L220.4,708.8L221.3,708.6L221.0,706.9 M223.7,677.0L224.2,678.6L226.4,678.6L227.6,677.4L229.0,676.3 M222.6,697.8L220.6,697.7L218.5,695.8 M201.7,701.3L201.6,701.7L200.8,703.8L199.1,703.0L197.9,704.6 M206.9,697.9L205.8,699.2L206.7,698.9 M200.5,699.5L199.3,697.4L200.9,697.9L199.1,698.9 M212.0,706.2L213.8,708.3L215.1,707.8L215.8,708.9L214.9,709.9 M214.0,699.4L214.4,697.5L214.8,698.5 M209.3,696.8L210.5,695.7L211.0,694.5L210.5,696.7 M201.7,708.5L202.7,708.9L201.7,709.8L201.9,710.0 M228.1,681.7L229.4,681.7L227.3,682.9L226.6,684.9 M198.8,728.2L199.5,727.2L200.9,726.9L199.3,727.3 M204.7,704.9L202.6,704.0L202.3,702.1L200.2,702.3L198.7,701.7 M193.9,715.3L191.8,714.8L192.5,713.2L191.7,714.9L193.6,713.8 M188.1,720.6L186.0,718.6L186.4,719.3L185.5,718.6 M212.0,695.0L213.5,695.9L211.5,697.8 M219.3,690.3L218.0,689.0L218.6,687.5L220.6,686.8 M203.8,699.1L204.6,697.7L204.0,698.6L202.7,700.3L204.4,699.1 M216.2,676.4L217.3,677.2L219.3,675.1 M198.7,708.7L199.1,710.3L197.2,708.6L195.1,709.4 M213.9,714.7L212.7,712.6L211.6,710.4L213.4,709.6 M188.6,713.7L189.9,713.4L190.9,712.3L192.3,711.7L191.2,711.4 M201.7,711.9L200.3,713.5L201.8,714.4L202.6,715.4L202.4,715.0 M221.3,678.0L221.0,678.3L219.0,677.4L218.4,679.4L218.5,677.7 M208.5,676.9L208.4,678.7L209.2,677.5 M204.1,705.8L204.6,703.6L205.6,705.5L206.1,704.4L205.2,702.9 M227.6,684.5L228.7,682.6L226.7,683.9 M221.0,684.5L218.8,685.3L220.5,684.5L222.1,685.2L221.6,685.8 M202.7,712.3L204.6,713.1L202.7,711.7L201.5,710.8 M212.1,696.3L210.0,695.9L210.4,694.2L209.3,692.5 M200.3,709.6L198.7,710.0L200.5,708.6L200.5,708.6 M218.3,707.0L216.3,707.2L218.3,705.6L217.8,704.4L217.5,703.8 M223.1,694.4L221.1,692.3L222.7,691.8L220.9,689.8L222.4,690.2 M224.9,675.8L224.7,675.6L222.8,675.7 M219.4,697.9L219.4,697.4L219.3,695.3L219.8,694.0L219.1,691.8 M201.7,705.7L200.2,707.0L201.9,708.8 M189.1,712.2L190.2,713.5L191.1,715.4 M200.4,709.4L202.1,708.4L200.9,708.4L199.9,708.7L198.8,708.7 M188.3,719.6L188.9,718.6L188.1,719.1L186.7,718.8 M215.1,684.9L214.5,685.3L215.6,683.6 M214.8,710.7L217.0,711.3L215.0,712.3L213.9,712.2 M198.2,717.5L198.7,719.3L199.4,721.3L197.7,721.7L198.6,721.4 M193.0,713.4L191.0,711.7L189.0,711.5L190.4,712.3L190.6,713.9 M212.8,675.2L214.3,673.7L213.6,671.9 M225.0,695.7L226.7,695.9L227.1,697.5L227.9,699.6 M197.0,719.4L195.8,719.1L197.3,719.1L199.1,717.6 M196.1,705.5L196.9,707.6L198.2,706.7L198.0,706.7 M220.0,697.0L221.8,697.8L223.4,695.9L221.7,696.8 M209.5,679.4L208.6,678.9L210.3,677.6L208.2,679.3L208.1,677.7 M217.5,677.4L216.8,676.1L218.9,675.1 M186.5,715.3L184.8,713.3L185.4,713.1 M211.1,701.4L212.3,703.5L211.9,701.9 M220.5,687.7L222.5,689.3L221.4,689.6L220.6,688.1L221.7,689.3 M220.9,703.0L219.6,701.1L218.4,701.6L217.3,699.8 M206.7,704.3L208.0,705.5L207.7,704.4L209.8,706.2L211.1,704.5 M209.2,689.5L210.7,689.0L211.3,687.9" fill="none" stroke="#000" stroke-width="1"/>
<circle cx="178.3" cy="744.7" r="2.1" fill="#004464"/>
<circle cx="152.4" cy="722.0" r="1.8" fill="#004464"/>
<circle cx="153.6" cy="725.8" r="1.9" fill="#004464"/>
<circle cx="170.6" cy="741.0" r="2.1" fill="#004464"/>
<circle cx="161.2" cy="729.7" r="1.7" fill="#004464"/>
<circle cx="158.3" cy="735.7" r="1.2" fill="#004464"/>
<circle cx="165.9" cy="738.7" r="2.1" fill="#004464"/>
<circle cx="158.3" cy="735.0" r="1.8" fill="#004464"/>
<circle cx="170.8" cy="734.7" r="0.8" fill="#004464"/>
<circle cx="158.1" cy="740.7" r="1.2" fill="#004464"/>
<circle cx="169.0" cy="731.7" r="1.3" fill="#004464"/>
<circle cx="169.8" cy="739.2" r="1.2" fill="#004464"/>
<circle cx="173.4" cy="739.6" r="2.1" fill="#004464"/>
<circle cx="169.9" cy="735.8" r="1.7" fill="#004464"/>
<circle cx="155.3" cy="722.5" r="2.1" fill="#004464"/>
<circle cx="171.0" cy="736.9" r="1.3" fill="#004464"/>
<circle cx="174.0" cy="732.2" r="1.1" fill="#004464"/>
<circle cx="167.6" cy="736.9" r="1.1" fill="#004464"/>
<circle cx="174.5" cy="732.3" r="1.8" fill="#004464"/>
<circle cx="169.2" cy="731.8" r="1.8" fill="#004464"/>
<circle cx="158.8" cy="726.8" r="1.3" fill="#004464"/>
<circle cx="155.7" cy="725.4" r="0.9" fill="#004464"/>
<circle cx="162.1" cy="736.7" r="1.7" fill="#004464"/>
<circle cx="171.4" cy="742.5" r="2.1" fill="#004464"/>
<circle cx="167.5" cy="741.8" r="0.9" fill="#004464"/>
<circle cx="161.7" cy="743.2" r="0.9" fill="#004464"/>
<circle cx="167.5" cy="746.2" r="2.0" fill="#004464"/>
<circle cx="154.9" cy="741.6" r="2.0" fill="#004464"/>
<circle cx="168.6" cy="729.9" r="1.6" fill="#004464"/>
<circle cx="165.6" cy="740.1" r="1.3" fill="#004464"/>
<circle cx="174.9" cy="739.4" r="1.8" fill="#004464"/>
<circle cx="171.5" cy="738.8" r="1.0" fill="#004464"/>
<circle cx="175.8" cy="733.7" r="1.8" fill="#004464"/>
<circle cx="169.9" cy="734.2" r="1.6" fill="#004464"/>
<circle cx="161.4" cy="743.5" r="2.0" fill="#004464"/>
<circle cx="185.7" cy="744.4" r="0.9" fill="#004464"/>
<circle cx="166.9" cy="744.3" r="1.4" fill="#004464"/>
<circle cx="186.8" cy="744.7" r="2.1" fill="#004464"/>
<circle cx="156.7" cy="729.0" r="0.8" fill="#004464"/>
<circle cx="158.4" cy="720.9" r="2.2" fill="#004464"/>
<path d="M178.3,744.7L176.3,746.1L177.7,744.7L179.7,744.1 M167.5,737.8L167.4,738.7L168.0,737.3L167.4,736.7L166.5,735.9 M152.4,722.0L151.8,722.9L151.0,721.8L150.8,720.6L152.5,720.6 M155.3,724.7L154.0,723.1L153.0,721.5L154.5,723.5L155.6,725.5 M171.6,732.2L171.3,732.7L170.7,733.8L170.2,735.9L171.1,734.4 M170.7,739.4L171.6,739.4L172.6,739.6L174.0,738.3L175.5,739.4 M153.6,725.8L151.5,726.0L153.2,726.7L154.9,728.5L157.1,729.9 M157.2,727.9L159.4,727.9L158.4,726.4L158.9,724.2 M155.4,738.2L157.0,739.9L155.4,742.0L153.3,741.0L155.4,742.9 M170.6,741.0L170.5,741.5L169.7,740.9L171.4,738.7L171.0,738.2 M155.0,734.2L156.5,732.5L158.1,731.6L159.3,733.6 M161.2,729.7L160.9,728.3L159.4,726.7L159.9,727.6 M173.1,746.3L173.8,744.4L173.2,743.2L171.9,741.5 M162.9,739.7L163.9,737.8L165.5,740.0 M159.9,734.5L160.3,735.0L161.5,733.8L161.5,732.4 M187.7,744.9L188.3,745.2L187.6,745.4 M158.3,735.7L156.2,733.6L157.8,734.1L157.1,735.7L157.4,736.2 M154.7,731.3L155.0,730.7L155.0,728.6L155.7,730.4 M179.3,743.0L177.8,744.4L179.4,746.1L177.9,748.1 M165.9,738.7L164.5,738.3L165.2,739.9L163.4,738.3L163.9,740.2 M172.0,734.0L173.8,734.5L171.8,735.4 M155.1,731.9L153.9,730.7L153.1,731.4 M158.3,735.0L159.2,733.4L159.0,734.2L158.1,733.1L160.1,732.5 M164.7,735.2L162.8,734.9L161.9,733.7L163.8,735.3L163.2,737.5 M167.9,731.5L168.7,732.2L169.4,733.7L170.3,733.0L170.7,732.7 M157.3,721.9L155.4,723.9L154.9,724.9L153.7,725.7 M172.4,730.9L171.1,729.0L172.3,728.0L172.9,729.7L171.0,731.0 M162.4,735.0L163.2,736.8L164.1,738.2L165.4,738.2 M170.8,734.7L169.7,733.3L170.5,734.4L169.2,734.7 M158.1,740.7L156.1,740.9L154.1,741.7L152.5,740.5 M169.0,731.7L167.7,730.4L167.5,729.9L167.2,730.0L167.5,728.9 M170.2,735.0L171.8,736.3L170.8,738.1L171.5,740.2 M169.8,739.2L170.5,737.5L168.7,739.6L166.9,740.7L165.2,741.1 M173.4,739.6L175.4,740.5L175.1,738.6L175.7,740.4 M173.1,732.3L171.3,730.2L169.4,730.4L171.1,730.5 M169.9,735.8L167.8,737.6L168.2,737.7L166.2,738.2L167.0,739.9 M157.8,727.0L157.5,727.7L156.2,729.0L158.2,727.6 M157.0,741.7L156.7,743.7L158.1,744.4L157.0,746.2L159.2,746.3 M151.9,730.1L153.8,730.2L153.5,730.9 M161.0,723.1L160.4,724.1L160.8,726.2 M158.2,725.5L158.7,727.2L160.6,727.0L160.6,727.6 M155.3,722.5L157.1,724.5L157.9,723.0L157.8,723.5L157.5,723.4 M171.0,736.9L169.3,734.9L169.5,733.8 M185.8,743.4L185.3,742.2L186.3,742.7L185.0,741.8L187.0,740.3 M185.3,743.1L183.7,744.8L184.9,746.2L184.3,747.8 M154.5,722.3L155.1,722.9L155.5,721.0 M174.0,732.2L175.0,732.7L174.4,732.4L173.0,733.2 M167.6,736.9L169.4,736.8L168.4,737.9 M186.8,742.9L187.3,743.7L187.4,742.4L189.0,744.0L187.5,743.1 M156.2,722.2L155.7,720.7L156.6,720.1 M174.5,742.8L173.7,744.0L175.6,746.0 M181.1,746.4L181.1,745.7L179.3,744.0L179.9,742.8L179.0,742.0 M187.8,745.1L185.9,744.5L186.3,744.0 M162.3,727.4L161.3,726.2L162.4,724.9 M166.4,745.0L167.6,746.5L167.0,747.1 M180.2,745.4L180.9,743.5L181.5,744.0 M174.5,732.3L174.3,734.2L176.3,733.3L174.4,735.0 M155.7,720.1L156.9,718.8L156.3,719.6L154.8,719.3L156.7,717.8 M156.1,728.1L155.2,727.9L156.0,728.0L156.9,726.8L156.7,725.6 M169.2,731.8L168.5,733.1L167.3,734.1L166.6,733.6 M158.8,726.8L159.9,724.7L162.1,723.8L162.6,725.2 M177.8,734.5L179.1,733.9L177.8,736.0L175.9,735.5 M155.7,725.4L153.6,724.0L151.8,724.2L151.3,723.6 M162.1,736.7L163.1,736.5L162.1,738.3L160.4,736.9L162.2,735.3 M160.7,734.0L161.5,735.8L163.1,736.7 M159.0,727.1L159.8,726.0L161.2,726.7L162.1,727.7L160.7,726.2 M158.4,739.8L156.8,740.5L155.8,741.4 M166.7,737.9L165.3,740.1L166.1,739.1L167.2,738.0 M170.1,729.3L170.1,729.2L167.9,731.4 M171.4,742.5L170.8,744.6L172.3,742.7L172.5,744.2 M167.5,741.8L167.8,739.9L166.5,737.9L164.5,738.5L164.4,737.8 M161.7,743.2L161.1,745.2L163.2,744.1L163.7,745.3 M167.5,746.2L167.9,747.2L169.7,745.7L171.6,747.3 M154.9,741.6L156.3,742.6L154.7,742.9 M156.4,737.9L158.1,738.2L156.4,738.4L157.7,739.2L159.9,739.6 M155.3,739.0L155.9,738.2L155.2,739.1L153.1,737.8L152.7,739.9 M182.8,745.9L183.1,745.1L181.4,743.4L181.7,743.9 M153.8,735.3L152.4,733.3L152.6,735.2L154.3,737.1 M158.3,732.3L158.8,731.1L158.1,731.4L158.5,730.9L157.5,730.8 M168.6,729.9L169.5,731.4L171.3,731.3L172.2,730.1 M165.6,740.1L167.1,741.4L168.1,741.6 M172.8,737.2L170.7,735.6L169.0,734.7 M182.7,742.9L182.3,742.1L183.0,741.1L184.3,739.0L183.6,740.5 M174.9,739.4L176.3,739.8L176.5,739.1L176.6,738.6L174.7,738.3 M171.4,735.1L172.3,733.1L172.6,734.4L171.3,733.3L172.7,732.0 M171.5,738.8L172.2,739.2L171.3,737.2L171.2,737.2L172.0,737.1 M159.8,731.7L159.8,730.0L160.3,729.9 M158.0,741.6L158.4,741.7L159.5,742.7L158.9,741.9 M184.8,741.7L185.6,743.7L184.8,744.6L183.5,743.9 M175.8,733.7L177.3,733.8L176.9,734.8 M186.1,745.3L184.5,747.2L185.9,749.3L185.1,750.6L187.2,750.6 M169.9,734.2L168.8,736.0L168.5,737.5L170.7,739.5L169.2,741.2 M167.8,727.6L167.0,728.4L168.3,730.4L169.4,730.3 M177.1,745.0L178.8,746.5L176.7,748.7 M159.2,734.2L160.0,732.1L161.4,733.2 M152.3,731.6L150.9,732.6L151.1,732.3L149.9,730.3L149.5,728.4 M156.8,729.8L156.4,728.4L158.3,727.4L158.6,726.7 M154.9,722.5L154.1,721.1L154.9,722.6L154.4,723.9 M176.1,739.2L177.2,741.1L178.4,742.7L177.5,741.7L179.1,741.8 M161.4,743.5L161.3,744.9L160.4,746.2 M185.7,744.4L184.5,743.3L184.5,744.8L185.3,743.3L185.8,743.5 M160.8,731.7L162.7,732.1L163.6,734.1 M152.8,722.8L150.8,721.2L150.4,721.3 M177.4,738.3L176.6,736.9L178.4,735.9L178.8,735.3 M166.9,744.3L168.9,743.4L169.4,742.4L171.5,741.5 M186.8,744.7L185.3,745.1L183.6,746.2L182.3,746.1L181.4,747.8 M155.0,722.1L154.8,723.6L153.8,724.4L154.2,724.5L154.1,724.1 M162.9,727.7L163.3,726.6L164.0,724.8 M161.9,727.8L162.8,727.5L161.8,726.8 M168.5,744.0L170.1,743.7L168.7,745.7 M156.7,729.0L155.7,728.9L156.6,729.6L158.4,728.5L157.8,726.8 M158.0,723.8L159.3,724.9L159.1,725.8 M158.4,720.9L156.6,720.6L158.3,722.3 M161.0,726.5L160.2,724.8L159.1,726.2L160.4,724.2 M174.7,742.5L174.3,744.0L175.9,745.0" fill="none" stroke="#000" stroke-width="1"/>
<path d="M249.3,678.1 L251.6,680.5 L253.0,684.0 L253.2,686.5 L253.4,689.2 L254.5,691.4 L253.3,693.4 L253.8,696.8 L253.0,698.8 L251.9,701.9 L251.6,703.3 L250.1,706.1 L247.8,709.6 L246.4,712.0 L244.4,714.9 L241.9,716.5 L239.1,718.8 L237.5,720.9 L235.1,723.1 L233.1,725.3 L231.2,727.0 L228.6,728.3 L225.9,730.3 L224.2,731.3" fill="none" stroke="#000" stroke-width="1.2" stroke-dasharray="3 2 1.5 2.5 4 1.5"/>
<path d="M241.9,698.8 L244.4,696.1 L247.3,694.4 L249.3,692.8" fill="none" stroke="#000" stroke-width="1.2" stroke-dasharray="3 2 1.5 2.5 4 1.5"/>
<path d="M228.6,663.3 L231.7,664.3 L234.6,664.8" fill="none" stroke="#000" stroke-width="1.2" stroke-dasharray="3 2 1.5 2.5 4 1.5"/>
<path d="M241.9,664.0 L245.0,663.8 L246.2,662.2 L249.3,661.8" fill="none" stroke="#000" stroke-width="1.2" stroke-dasharray="3 2 1.5 2.5 4 1.5"/>
<path d="M258.2,661.1 L261.1,661.5 L264.7,662.3 L267.5,661.8 L269.9,663.0 L273.0,663.3 L275.9,663.2 L278.8,664.0 L282.4,665.0 L284.8,664.8" fill="none" stroke="#000" stroke-width="1.2" stroke-dasharray="3 2 1.5 2.5 4 1.5"/>
<path d="M309.6,664.1 L325.4,662.5 L334.7,660.9" fill="none" stroke="#000" stroke-width="1"/>
<path d="M230.5,663.3 L232.7,663.2 L236.2,662.1 L238.5,663.0 L240.9,661.6 L244.4,661.8 L246.8,662.0 L248.9,662.1 L251.6,661.2" fill="none" stroke="#000" stroke-width="1.2" stroke-dasharray="3 2 1.5 2.5 4 1.5"/>
<path d="M256.9,662.0 L285.9,664.6" fill="none" stroke="#000" stroke-width="1.2" stroke-dasharray="3 2 1.5 2.5 4 1.5"/>
<path d="M251.1,679.1 L251.8,681.9 L253.3,683.7 L253.7,687.7 L254.3,689.6 L253.6,691.7 L253.6,694.3 L252.9,698.0 L253.0,700.2 L251.9,703.1 L250.2,705.3 L248.3,707.9 L247.7,710.7 L246.3,712.0 L244.8,715.3 L242.9,716.7 L241.1,718.6 L238.9,721.5 L237.4,722.9 L234.5,725.2 L231.8,727.6 L229.2,728.2 L226.6,730.5" fill="none" stroke="#000" stroke-width="1.2" stroke-dasharray="3 2 1.5 2.5 4 1.5"/>
<path d="M509.9,691.0 L508.3,694.3 L507.1,696.5 L506.6,701.0 L507.7,705.4 L509.9,710.4 L512.1,712.6 L515.5,711.2" fill="none" stroke="#000" stroke-width="1"/>
<path d="M524.3,712.0 L527.6,715.4 L531.0,716.5 L533.7,719.3 L537.6,718.1 L542.0,715.9 L546.5,713.7 L550.9,712.0 L555.3,709.8 L558.7,706.5 L560.3,704.8" fill="none" stroke="#000" stroke-width="1"/>
<path d="M563.1,702.1 L569.2,698.8" fill="none" stroke="#000" stroke-width="1"/>
<path d="M579.7,685.5 L581.9,688.2 L585.3,689.9 L587.5,692.1 L584.2,692.7 L580.8,691.2" fill="none" stroke="#000" stroke-width="1"/>
<path d="M523.8,712.0 L527.6,712.6 L531.5,712.0 L532.1,713.7 L529.9,715.4 L527.1,715.6 L524.9,713.7Z" fill="#5d504a" stroke="#000" stroke-width="1"/>
<path d="M802.7,650.0 L794.9,648.5 L787.2,650.0 L779.4,653.1 L784.1,659.3 L785.6,667.1 L788.7,674.9 L787.2,684.2 L790.3,693.5 L791.8,702.8 L788.7,712.1 L787.2,721.4 L784.1,729.2" fill="none" stroke="#004464" stroke-width="2.5"/>
<path d="M802.7,650.0 L794.9,648.5 L787.2,650.0 L779.4,653.1 L784.1,659.3 L785.6,667.1 L788.7,674.9 L787.2,684.2 L790.3,693.5 L791.8,702.8 L788.7,712.1 L787.2,721.4 L784.1,729.2" fill="none" stroke="#000" stroke-width="0.6" transform="translate(-1.5,0)"/>
<circle cx="96.3" cy="751.9" r="0.9" fill="#004464"/>
<circle cx="101.5" cy="751.8" r="1.3" fill="#004464"/>
<circle cx="89.2" cy="744.1" r="1.0" fill="#004464"/>
<circle cx="102.8" cy="749.1" r="1.1" fill="#004464"/>
<circle cx="106.6" cy="750.7" r="1.7" fill="#004464"/>
<circle cx="103.7" cy="750.6" r="1.2" fill="#004464"/>
<circle cx="87.5" cy="749.7" r="0.8" fill="#004464"/>
<circle cx="100.8" cy="748.8" r="1.4" fill="#004464"/>
<circle cx="101.8" cy="753.7" r="1.3" fill="#004464"/>
<circle cx="85.0" cy="748.2" r="0.8" fill="#004464"/>
<circle cx="80.4" cy="749.7" r="1.0" fill="#004464"/>
<circle cx="94.9" cy="747.0" r="1.0" fill="#004464"/>
<circle cx="89.6" cy="752.9" r="1.8" fill="#004464"/>
<circle cx="89.0" cy="744.9" r="1.6" fill="#004464"/>
<circle cx="85.8" cy="753.5" r="1.9" fill="#004464"/>
<circle cx="79.5" cy="748.9" r="1.5" fill="#004464"/>
<circle cx="102.6" cy="751.1" r="1.8" fill="#004464"/>
<circle cx="89.3" cy="749.0" r="1.5" fill="#004464"/>
<circle cx="82.6" cy="743.2" r="1.3" fill="#004464"/>
<circle cx="96.5" cy="748.1" r="1.3" fill="#004464"/>
<circle cx="106.0" cy="748.9" r="1.1" fill="#004464"/>
<circle cx="99.8" cy="749.9" r="1.9" fill="#004464"/>
<circle cx="95.2" cy="749.9" r="1.9" fill="#004464"/>
<circle cx="98.4" cy="751.3" r="0.8" fill="#004464"/>
<circle cx="96.9" cy="752.2" r="1.0" fill="#004464"/>
<circle cx="96.4" cy="754.4" r="1.4" fill="#004464"/>
<circle cx="102.5" cy="754.5" r="1.3" fill="#004464"/>
<path d="M94.3,748.6L95.9,749.9L94.7,748.6L96.2,747.0 M96.3,751.9L98.0,752.8L97.8,750.9L97.9,750.7L97.3,751.3 M101.5,751.8L100.7,753.8L99.6,754.2L97.5,755.9 M93.5,753.5L94.3,752.4L92.7,751.2L93.4,753.1L91.3,753.1 M89.2,744.1L90.6,745.1L91.4,745.9L92.5,746.1 M102.8,749.1L104.3,746.9L103.9,748.1 M105.9,752.0L107.7,754.0L108.6,754.6 M80.4,747.3L80.5,748.1L81.6,749.7 M106.6,750.7L105.2,751.5L105.1,752.7L105.1,753.4 M103.7,750.6L101.6,752.3L102.5,750.3L104.5,751.9 M96.6,747.2L98.2,745.3L96.8,743.8L96.6,745.6L98.8,744.3 M86.5,744.6L88.4,743.3L87.2,742.6L88.1,740.5 M105.1,754.2L103.8,752.2L105.7,752.5 M101.8,752.9L102.4,751.1L101.7,750.8 M87.5,749.7L89.2,750.5L88.8,749.5 M80.7,746.7L80.7,747.5L81.5,746.1L80.8,747.1 M102.7,754.3L103.9,756.3L103.8,757.9L103.3,759.6L105.3,761.7 M86.6,748.0L84.4,746.1L84.0,746.4L86.1,748.5 M100.8,748.8L100.2,748.2L100.9,750.1 M90.9,744.5L89.1,743.6L89.8,745.1 M101.8,753.7L100.5,755.2L101.8,755.1L102.2,755.7L101.9,756.9 M85.0,748.2L86.4,750.2L87.8,752.1L88.5,750.5L88.6,752.6 M80.4,749.7L80.3,748.2L80.1,747.7L79.2,749.9 M94.9,747.0L96.7,745.2L97.6,746.4 M100.3,745.9L98.9,744.7L98.7,745.8L99.6,744.9L101.5,746.3 M80.2,750.3L79.3,748.8L77.7,750.1L77.6,749.0L77.7,749.3 M90.9,746.1L92.7,745.8L90.8,747.8L91.7,745.8 M90.4,744.9L90.5,746.2L88.9,747.9L89.1,746.4L88.2,745.2 M81.1,747.9L80.6,748.5L81.8,750.7 M103.2,748.7L104.5,746.7L106.0,745.2 M89.6,752.9L89.8,753.4L88.4,753.0L90.3,754.0 M89.0,744.9L90.6,745.0L92.0,744.2 M85.8,753.5L87.6,752.3L87.3,750.7L89.4,750.6 M89.1,752.3L87.0,752.3L87.4,751.8 M83.5,744.8L84.8,744.4L84.0,745.5 M101.1,750.1L100.1,752.3L98.7,753.7 M79.5,748.9L80.2,750.6L80.9,749.6L82.6,748.3 M97.5,746.1L98.3,746.7L96.8,748.8 M79.5,749.8L80.1,751.9L80.3,750.1 M102.6,751.1L101.3,750.0L100.4,751.4L100.5,749.4L101.8,751.2 M89.3,749.0L90.1,750.9L91.4,750.2L90.5,748.5L92.0,749.8 M98.7,753.2L99.5,751.6L98.7,752.4L97.1,752.2L98.4,753.6 M88.8,750.8L88.5,752.4L89.3,750.6L88.8,750.4 M98.6,750.5L100.7,752.2L99.8,750.8L99.2,753.0 M93.4,750.5L94.1,750.3L94.4,749.7L94.9,748.8 M82.6,743.2L84.6,741.8L84.7,743.2 M96.5,748.1L95.7,749.2L96.2,748.8L98.1,747.6 M87.1,747.0L86.2,746.3L84.5,745.7 M106.0,748.9L105.4,750.0L107.1,749.9 M93.0,751.8L92.5,753.4L92.3,753.5 M97.8,752.7L99.8,753.3L99.9,753.1L99.4,751.5L101.6,749.8 M99.8,749.9L100.8,747.7L99.8,749.4L100.5,749.1L99.2,748.2 M103.7,751.5L105.6,752.4L103.7,754.1L105.0,755.8L103.2,753.9 M95.2,749.9L95.3,748.7L96.2,746.6L95.2,746.7 M87.4,751.5L85.7,752.6L87.5,753.7L87.3,751.6L86.0,752.5 M85.7,753.7L83.6,755.1L84.0,755.2L84.7,757.0 M93.9,745.1L95.3,744.0L93.4,745.4L93.1,744.3 M97.3,744.5L99.3,745.2L98.9,746.9L99.3,747.7L101.1,748.9 M82.7,748.2L81.5,750.0L79.9,751.1L79.2,751.7L77.1,750.1 M98.4,751.3L99.1,751.3L97.2,750.5L95.5,749.1 M86.9,749.9L88.3,750.5L90.1,748.9L90.4,747.3 M89.4,747.1L90.6,745.6L89.8,746.7L88.6,746.3 M89.6,753.5L87.8,752.0L86.7,751.2 M96.9,752.2L95.6,752.9L95.1,753.8L93.6,752.4 M96.4,754.4L98.6,755.2L97.0,755.5 M102.5,754.5L104.0,753.4L104.7,753.7L102.7,755.2" fill="none" stroke="#000" stroke-width="1"/>
<circle cx="128.8" cy="744.9" r="1.1" fill="#004464"/>
<circle cx="126.8" cy="744.3" r="0.9" fill="#004464"/>
<circle cx="144.2" cy="750.2" r="1.2" fill="#004464"/>
<circle cx="131.3" cy="750.3" r="0.9" fill="#004464"/>
<circle cx="146.6" cy="746.9" r="1.7" fill="#004464"/>
<circle cx="146.9" cy="747.7" r="2.1" fill="#004464"/>
<circle cx="131.2" cy="753.0" r="1.5" fill="#004464"/>
<circle cx="121.4" cy="751.4" r="2.0" fill="#004464"/>
<circle cx="142.4" cy="747.1" r="0.9" fill="#004464"/>
<circle cx="137.6" cy="745.8" r="1.0" fill="#004464"/>
<circle cx="148.5" cy="753.6" r="1.7" fill="#004464"/>
<circle cx="143.3" cy="754.0" r="1.1" fill="#004464"/>
<circle cx="116.7" cy="749.5" r="1.8" fill="#004464"/>
<circle cx="140.9" cy="756.7" r="1.5" fill="#004464"/>
<circle cx="131.1" cy="745.7" r="1.5" fill="#004464"/>
<circle cx="142.0" cy="748.5" r="1.5" fill="#004464"/>
<circle cx="137.7" cy="745.2" r="2.2" fill="#004464"/>
<circle cx="124.8" cy="757.0" r="1.4" fill="#004464"/>
<circle cx="130.7" cy="752.7" r="2.1" fill="#004464"/>
<circle cx="141.3" cy="748.2" r="1.8" fill="#004464"/>
<circle cx="120.4" cy="755.8" r="1.0" fill="#004464"/>
<circle cx="115.9" cy="751.2" r="2.2" fill="#004464"/>
<circle cx="120.0" cy="751.4" r="1.0" fill="#004464"/>
<circle cx="142.0" cy="756.5" r="2.1" fill="#004464"/>
<circle cx="144.9" cy="751.8" r="2.0" fill="#004464"/>
<circle cx="117.0" cy="752.7" r="0.9" fill="#004464"/>
<circle cx="114.1" cy="749.1" r="1.0" fill="#004464"/>
<circle cx="126.7" cy="754.2" r="1.5" fill="#004464"/>
<circle cx="124.8" cy="752.8" r="1.2" fill="#004464"/>
<circle cx="140.1" cy="747.2" r="1.5" fill="#004464"/>
<circle cx="127.0" cy="745.0" r="1.9" fill="#004464"/>
<path d="M140.6,754.9L140.6,756.1L141.7,756.9L139.8,755.2L137.8,755.2 M128.8,744.9L126.7,744.9L128.1,746.6L127.2,746.0 M143.5,744.5L144.3,746.2L143.1,746.7L145.2,746.7L144.1,746.2 M128.3,750.7L126.7,752.2L126.7,751.7 M126.8,744.3L127.5,745.1L128.7,746.3 M134.3,757.4L136.0,757.6L136.4,755.6 M137.7,751.5L136.4,750.8L138.2,749.8 M144.2,750.2L143.5,750.5L145.3,749.9L143.6,749.7L144.3,748.7 M120.5,753.3L120.8,754.5L122.6,754.4L124.0,752.3L122.9,752.6 M137.4,746.3L138.4,744.6L137.7,746.5L139.3,744.4 M142.9,750.3L141.1,750.8L142.8,750.6L141.7,751.2L141.0,753.3 M131.3,750.3L131.5,749.9L133.6,748.4 M125.1,749.1L125.5,748.3L126.8,748.7 M146.6,746.9L148.3,746.2L146.5,746.6L145.5,744.6 M127.5,757.4L129.5,759.3L131.4,760.4L131.4,758.8L129.4,760.4 M125.9,749.9L127.0,748.7L128.4,749.9L127.2,751.8 M147.6,757.4L146.8,756.4L148.8,758.3 M146.9,747.7L146.8,748.1L145.6,749.5L144.3,747.9 M137.6,746.6L136.9,748.2L137.4,748.2L137.4,747.1 M131.2,753.0L133.3,754.6L132.9,753.1L132.9,755.3L131.2,757.3 M120.8,752.1L119.3,753.9L119.0,754.3 M121.4,751.4L122.1,751.7L121.0,751.4L122.9,751.8L123.0,751.1 M120.3,755.5L119.6,753.7L121.3,753.4L123.1,754.6L122.7,754.3 M137.8,752.5L137.7,754.5L135.7,756.2 M142.4,747.1L142.3,745.4L141.1,744.6 M144.2,748.9L143.7,749.2L143.1,750.6L144.3,748.9L145.3,749.2 M137.6,745.8L138.9,747.5L139.1,746.3L139.2,744.2L137.9,744.5 M148.5,753.6L150.1,754.1L150.9,754.8L151.5,753.5L149.8,753.4 M143.3,754.0L142.9,753.9L140.9,755.0 M116.7,749.5L117.2,747.4L116.8,746.9L116.1,747.0 M122.0,744.3L121.7,742.1L119.8,743.1 M115.8,750.1L115.8,751.8L117.3,750.0 M129.9,748.6L127.9,749.6L129.1,750.8L127.4,752.2L126.5,754.2 M139.4,748.0L138.8,747.9L139.6,749.3L140.6,749.2L141.9,748.7 M147.3,747.4L145.7,745.6L145.4,744.4L143.3,744.0L141.1,743.3 M140.9,756.7L143.0,757.0L144.0,756.9L142.1,756.1L140.9,754.5 M131.1,745.7L129.3,745.2L130.0,746.4L131.7,746.0L133.9,744.7 M123.3,751.2L124.3,752.7L125.6,752.0L123.5,750.7L123.9,752.6 M125.3,747.9L125.4,748.8L124.3,750.2 M117.9,749.4L119.3,749.8L118.3,748.8L120.3,750.2 M136.8,756.1L136.0,757.9L135.4,757.8 M122.1,750.3L121.1,752.4L120.1,754.5 M135.6,746.9L136.5,745.9L137.0,746.0L136.4,747.9L136.1,746.4 M142.0,748.5L142.7,749.1L144.3,749.1 M134.0,752.6L132.4,751.1L134.3,749.9L136.1,750.9L138.2,752.0 M123.3,749.9L125.0,750.5L125.9,750.1L126.3,748.9L125.1,750.2 M119.0,754.0L119.2,753.1L117.3,752.3 M137.7,745.2L139.0,744.7L140.2,743.0L140.5,742.2L138.6,743.3 M124.0,754.6L125.3,754.2L124.2,756.2 M144.8,757.4L145.6,758.0L147.6,757.5L149.6,755.4L151.6,756.1 M135.4,754.2L133.4,756.3L132.5,757.8L134.3,756.2 M124.2,745.7L123.3,747.6L122.5,746.9 M148.5,754.4L148.4,752.8L146.5,754.3L145.0,753.1 M124.8,757.0L125.7,756.5L126.8,755.4 M115.4,754.6L117.4,754.9L118.0,754.3 M130.7,752.7L129.5,751.9L131.7,754.0L131.9,756.1L131.9,756.9 M133.2,744.9L134.3,742.8L134.8,741.4L135.8,741.0L136.1,742.2 M120.4,751.6L118.3,752.0L118.2,751.7 M124.0,757.5L124.5,757.9L123.4,757.4 M141.3,748.2L143.5,749.2L141.6,750.0 M135.6,755.3L135.9,757.0L134.0,755.7 M120.4,755.8L122.2,755.7L123.6,753.6 M128.0,750.0L126.5,750.2L125.0,750.9L123.2,750.0L121.4,752.2 M140.2,746.1L140.4,747.8L140.6,749.2L140.7,747.4L142.6,748.7 M129.2,746.7L127.4,747.2L128.6,746.7L127.8,748.5 M127.9,750.3L129.9,751.4L129.5,753.0L131.4,753.0 M126.9,751.9L127.8,749.8L129.8,751.1L130.9,751.5L131.1,749.8 M115.9,751.2L115.7,751.4L117.4,753.5L116.3,754.8L114.5,754.3 M123.0,748.4L123.2,746.5L121.2,745.0L119.7,743.9L120.9,743.3 M120.0,751.4L118.1,750.7L119.5,751.2L119.0,752.2L118.5,751.8 M142.0,756.5L142.7,756.3L144.6,756.7L143.1,757.6 M130.7,757.0L129.8,756.2L129.6,755.5L130.7,755.8 M125.3,755.4L126.1,755.0L126.7,756.7L128.3,758.2 M142.0,750.4L142.1,751.8L139.9,751.8L141.1,753.2L142.2,754.4 M119.7,754.6L118.5,756.0L119.0,756.2L117.2,757.6L116.7,756.6 M147.5,755.6L149.1,754.8L147.5,754.1 M141.6,749.3L142.9,750.9L143.3,752.9L142.2,752.2 M144.9,751.8L145.8,749.8L144.0,751.5L143.2,750.3 M117.0,752.7L118.4,754.0L119.7,751.9 M114.1,749.1L114.3,750.2L116.2,752.1 M126.7,754.2L125.0,754.1L126.5,755.7 M131.8,747.4L132.3,745.5L131.1,744.8L129.0,744.8L128.4,744.5 M124.8,752.8L124.5,753.6L123.9,752.4L123.8,751.9 M114.3,752.3L113.1,751.4L113.8,752.8 M145.5,750.4L143.9,748.4L144.4,748.3L146.3,749.4 M142.1,755.1L141.5,754.8L142.7,756.6L144.2,757.3L145.5,755.5 M143.3,744.3L141.5,742.9L140.6,744.5L139.3,745.1 M138.4,749.5L139.5,751.4L140.0,750.4L141.2,751.3L143.3,753.5 M140.1,747.2L140.9,747.0L139.7,748.9L138.1,746.8L136.9,745.9 M127.0,745.0L128.7,743.4L127.2,743.1L126.2,744.6L127.4,742.7 M117.3,749.2L116.3,750.0L115.8,748.7 M136.5,745.3L135.4,745.8L133.3,744.1" fill="none" stroke="#000" stroke-width="1"/>
<path d="M808.3,568.9 L804.6,571.8 L803.1,577.7 L803.9,583.6 L802.4,589.5 L803.6,595.5 L802.1,601.4 L803.1,608.8 L802.4,616.1 L803.4,622.1 L802.7,629.4 L803.6,636.8 L804.6,642.7 L805.4,648.6 L806.8,654.6 L808.3,654.6Z" fill="#004464" stroke="#000" stroke-width="1"/>
<path d="M789.1,575.5 L792.1,574.8 L795.0,576.3 L796.5,579.2 L799.4,577.7 L802.4,576.3" fill="none" stroke="#000" stroke-width="1.7" stroke-linejoin="round"/>
<path d="M795.0,582.2 L796.0,582.6 L798.0,585.1 L800.9,583.6 L803.9,582.2" fill="none" stroke="#000" stroke-width="1.7" stroke-linejoin="round"/>
<path d="M786.9,594.7 L790.6,595.5 L793.5,596.2 L796.5,595.5 L799.4,597.7 L803.1,596.2" fill="none" stroke="#000" stroke-width="1.7" stroke-linejoin="round"/>
<path d="M792.1,606.5 L795.7,607.3 L798.0,609.5 L800.9,608.0 L803.9,608.8" fill="none" stroke="#000" stroke-width="1.7" stroke-linejoin="round"/>
<path d="M787.6,618.4 L791.3,619.1 L794.3,620.6 L797.2,619.8 L799.4,622.1 L802.4,621.3" fill="none" stroke="#000" stroke-width="1.7" stroke-linejoin="round"/>
<path d="M795.7,613.2 L798.7,614.7 L801.7,613.9" fill="none" stroke="#000" stroke-width="1.7" stroke-linejoin="round"/>
<path d="M790.6,633.1 L794.3,633.9 L797.2,636.1 L800.2,634.6 L803.1,636.8" fill="none" stroke="#000" stroke-width="1.7" stroke-linejoin="round"/>
<path d="M793.5,638.3 L796.5,640.5 L799.4,639.8 L802.4,641.3" fill="none" stroke="#000" stroke-width="1.7" stroke-linejoin="round"/>
<path d="M787.6,646.4 L790.6,647.2 L793.5,645.7 L796.5,647.9 L799.4,646.4 L801.8,646.9 L803.1,648.6" fill="none" stroke="#000" stroke-width="1.7" stroke-linejoin="round"/>
<path d="M786.1,654.6 L787.2,653.6 L788.4,650.9 L790.6,648.6 L793.5,649.4" fill="none" stroke="#000" stroke-width="1.7" stroke-linejoin="round"/>
<path d="M799.4,574.8 L799.5,577.8 L800.7,578.1 L801.4,582.1 L800.9,583.6 L800.4,586.4 L799.8,588.2 L798.9,589.2 L800.7,592.5 L799.4,594.0 L798.7,596.9 L800.0,598.0 L800.1,601.1 L801.4,601.6 L801.7,604.3 L800.2,606.7 L799.8,609.7 L799.8,610.1 L801.6,613.6 L800.2,616.1 L799.9,618.7 L799.9,621.3 L800.2,623.1 L801.8,623.4 L802.1,626.5 L802.7,628.2 L801.6,632.4 L801.4,633.6 L800.9,635.6 L800.9,638.3 L802.6,639.4 L803.0,641.2 L803.5,644.7 L803.5,646.7 L803.1,648.6 L803.4,651.9 L802.9,653.5 L803.3,655.7 L803.9,657.5" fill="none" stroke="#000" stroke-width="1.7" stroke-linejoin="round"/>
<path d="M797.2,589.5 L799.4,591.8 L802.4,590.3" fill="none" stroke="#000" stroke-width="1.7" stroke-linejoin="round"/>
<path d="M796.5,601.4 L799.4,602.8 L803.1,602.1" fill="none" stroke="#000" stroke-width="1.7" stroke-linejoin="round"/>
<path d="M795.0,626.5 L798.0,628.0 L801.7,627.2" fill="none" stroke="#000" stroke-width="1.7" stroke-linejoin="round"/>
<ellipse cx="799.4" cy="580.7" rx="1.6" ry="2.6" fill="#004464" transform="rotate(25 799.4 580.7)"/>
<ellipse cx="801.7" cy="587.3" rx="1.6" ry="2.6" fill="#004464" transform="rotate(25 801.7 587.3)"/>
<ellipse cx="798.7" cy="596.9" rx="1.6" ry="2.6" fill="#004464" transform="rotate(25 798.7 596.9)"/>
<ellipse cx="800.9" cy="607.3" rx="1.6" ry="2.6" fill="#004464" transform="rotate(25 800.9 607.3)"/>
<ellipse cx="799.4" cy="619.1" rx="1.6" ry="2.6" fill="#004464" transform="rotate(25 799.4 619.1)"/>
<ellipse cx="801.7" cy="629.4" rx="1.6" ry="2.6" fill="#004464" transform="rotate(25 801.7 629.4)"/>
<ellipse cx="798.0" cy="647.2" rx="1.6" ry="2.6" fill="#004464" transform="rotate(25 798.0 647.2)"/>
<ellipse cx="795.0" cy="648.6" rx="1.6" ry="2.6" fill="#004464" transform="rotate(25 795.0 648.6)"/>
<ellipse cx="792.1" cy="649.8" rx="1.6" ry="2.6" fill="#004464" transform="rotate(25 792.1 649.8)"/>
<path d="M299.6,59.1 L305.1,55.4 L310.6,56.2 L314.3,62.8 L318.0,68.3 L321.7,73.9 L319.9,79.4 L323.6,88.7 L324.7,96.1 L321.7,94.2 L318.0,86.8 L314.3,79.4 L312.5,72.0 L306.9,66.5 L303.3,62.8Z" fill="#2a405c" stroke="#1b324e" stroke-width="1"/>
<path d="M369.0,260.5 L373.4,258.6 L379.0,262.3 L386.4,266.0 L393.8,271.6 L396.4,276.4 L391.9,275.2 L384.5,270.4 L377.1,266.0 L370.5,263.1Z" fill="#2a405c" stroke="#1b324e" stroke-width="1"/>
<path d="M386.4,270.0 L391.9,270.0 L396.4,276.7 L393.8,275.5Z" fill="#2a405c" stroke="#1b324e" stroke-width="1"/>
<path d="M439.2,373.4 L443.6,367.9 L447.3,366.8 L450.3,363.1 L451.8,366.8 L448.1,371.6 L443.6,375.3 L440.7,377.9Z" fill="#2a405c" stroke="#1b324e" stroke-width="1"/>
<path d="M424.1,414.1 L427.0,415.9 L427.0,423.3 L430.7,427.0 L431.8,434.4 L428.9,432.6 L427.0,427.0 L424.4,421.5Z" fill="#2a405c" stroke="#1b324e" stroke-width="1"/>
<path d="M526.8,502.8 L531.6,502.0 L532.3,510.1 L530.5,521.2 L534.2,524.9 L536.0,528.6 L532.3,534.2 L528.6,537.9 L526.8,532.3 L525.7,524.9 L527.9,513.8Z" fill="#2a405c" stroke="#1b324e" stroke-width="1"/>
<path d="M122.2,658.9 L124.6,653.8 L130.6,652.2 L134.6,655.5 L135.6,660.5 L133.3,666.6 L127.2,668.9 L122.2,665.6Z" fill="#2a405c" stroke="#1b324e" stroke-width="1"/>
<path d="M144.0,697.4 L149.0,695.0 L152.3,699.0 L154.0,704.1 L150.7,707.4 L149.0,712.4 L144.0,714.1 L140.6,710.8 L142.3,705.7 L145.6,702.4Z" fill="#2a405c" stroke="#1b324e" stroke-width="1"/>
<path d="M41.9,682.3 L45.2,680.0 L49.6,683.3 L50.9,689.0 L46.9,689.0 L42.9,685.6Z" fill="#2a405c" stroke="#1b324e" stroke-width="1"/>
<path d="M57.6,687.3 L60.3,684.6 L62.9,690.7 L65.3,697.4 L70.3,702.4 L77.0,704.1 L83.7,705.7 L83.0,710.1 L77.0,709.1 L70.3,707.4 L65.3,705.7 L61.9,700.7 L58.6,694.0Z" fill="#2a405c" stroke="#1b324e" stroke-width="1"/>
<path d="M784.1,729.2 L787.2,727.6 L789.3,733.9 L791.8,740.1 L794.9,746.3 L796.5,752.5 L793.4,755.6 L788.7,752.5 L785.6,744.7 L783.1,737.0Z" fill="#2a405c" stroke="#1b324e" stroke-width="1"/>
<path d="M770.1,790.4 L774.7,789.1 L779.4,791.3 L777.9,793.5 L770.7,793.5Z" fill="#2a405c" stroke="#1b324e" stroke-width="1"/>
<path d="M540.4,603.5 L543.5,609.7 L549.7,612.8 L554.3,606.6 L557.4,603.5 L555.9,609.7 L563.6,610.3 L562.1,614.3 L554.3,615.9 L546.6,619.6 L541.9,617.4 L540.4,611.2Z" fill="#2a405c" stroke="#1b324e" stroke-width="1"/>
<path d="M525.7,520.0 L529.7,520.0 L536.3,526.6 L533.6,530.5 L531.0,538.5 L529.7,531.9 L527.0,526.6Z" fill="#2a405c" stroke="#1b324e" stroke-width="1"/>
<path d="M541.0,601.7 L544.2,610.9 L550.8,612.3 L554.7,605.7 L557.3,603.0 L556.8,610.9 L563.9,610.9 L562.6,614.4 L554.7,615.4 L548.1,619.6 L542.8,618.1 L541.0,610.9Z" fill="#2a405c" stroke="#1b324e" stroke-width="1"/>
<path d="M604.6,306.6 L606.1,308.8 L606.8,312.5 L610.5,311.8 L612.8,310.3 L615.7,309.6 L617.2,307.3 L618.7,304.4 L620.9,302.2 L623.1,299.2 L624.6,296.3 L627.5,294.0 L626.1,292.6 L623.8,294.0 L622.4,291.1 L621.6,286.7 L620.1,286.7 L620.1,291.1 L619.4,294.0 L617.2,294.8 L617.9,291.1 L616.5,288.9 L615.0,285.2 L613.5,286.7 L614.2,290.3 L612.8,291.8 L613.5,294.8 L614.2,298.5 L613.5,302.2 L612.0,304.4 L609.8,305.9 L608.3,305.1 L606.8,306.6Z" fill="#2a405c" stroke="#1b324e" stroke-width="1"/>
<path d="M181.0,5.9 L188.4,14.8 L190.8,20.3 L194.0,25.9 L197.7,36.9 L199.5,48.0 L200.0,54.7 L200.1,60.9 L200.4,67.5 L200.2,73.9 L199.5,81.2 L199.5,88.7 L197.2,95.6 L195.8,101.6 L190.3,110.8 L186.6,121.9 L186.1,129.1 L184.7,136.7 L181.0,147.8 L177.1,155.4 L173.6,162.6 L169.7,169.6 L166.3,177.3 L162.3,182.1 L159.0,187.7 L155.2,192.1 L151.2,200.0 L147.8,206.9 L147.0,218.0 L151.5,223.5 L159.6,226.1 M5.9,255.7 L12.2,255.2 L18.8,255.8 L24.5,255.4 L30.5,254.8 L36.9,254.9 L42.6,253.6 L48.5,252.4 L54.3,250.2 L60.2,249.3 L66.5,247.5 L72.8,245.2 L79.3,243.1 L85.8,240.3 L92.4,238.3 L98.5,236.5 L104.3,235.4 L110.8,233.5 L118.4,231.6 L126.0,229.2 L133.0,227.2 L139.5,226.5 L146.2,226.1 L152.5,225.2 L159.6,224.6 M160.7,221.7 L166.5,221.4 L172.9,220.9 L175.5,226.1 L171.8,230.9 L162.6,230.9 L160.7,226.1 L160.7,221.7 M164.4,230.9 L165.8,237.3 L166.3,243.8 L167.4,251.5 L168.1,258.6 L169.1,265.6 L170.7,273.4 L171.9,280.4 L172.9,288.2 L172.9,300.0 M175.5,223.5 L181.5,220.8 L186.8,217.1 L192.1,214.3 L199.3,209.9 L206.9,205.0 L212.1,200.9 L216.4,198.1 L221.7,194.0 L228.7,189.5 L236.5,184.7 L243.7,182.1 L251.2,179.2 L259.0,176.5 L266.0,173.6 L273.3,171.3 L280.8,169.2 L287.3,168.4 L293.5,167.2 L300.0,166.3 M240.1,5.9 L235.9,10.2 L230.9,14.8 L228.3,25.9 L228.3,36.9 L227.2,48.0 L223.5,59.1 L216.1,64.7 L206.9,68.3 L201.4,72.0 M240.1,5.9 L245.0,11.7 L249.4,16.6 L254.9,25.9 L258.6,36.9 L260.4,43.9 L263.1,49.9 L269.7,57.3 L280.8,59.9 L291.9,59.1 L300.0,55.4 M270.0,59.1 L277.1,58.9 L285.3,58.8 L292.2,58.4 L299.5,58.4 L306.6,59.4 L314.3,59.1 L322.0,62.6 L329.1,66.5 L334.1,70.4 L339.4,73.7 L343.9,77.6 L349.9,82.2 L356.3,87.9 L362.4,92.4 L367.5,96.9 L372.1,101.8 L377.1,107.1 L381.7,112.1 L386.6,116.8 L391.9,121.9 L396.6,126.2 L402.1,130.3 L406.7,134.9 M472.5,5.9 L472.5,14.4 L473.2,22.2 L471.7,29.4 L469.5,36.9 L465.6,42.2 L462.1,48.0 L454.3,51.4 L447.3,55.4 L441.5,58.5 L436.3,61.0 L432.3,67.1 L428.9,73.9 L426.8,79.9 L423.5,84.8 L421.5,90.5 L419.2,96.9 L415.9,103.4 L413.3,111.0 L410.4,118.2 L409.1,126.1 L407.4,134.9 M270.0,172.9 L277.2,170.6 L284.8,168.1 L292.2,166.3 L299.6,165.5 L307.0,163.8 L314.3,162.6 L322.0,161.3 L328.9,160.4 L336.5,158.9 L341.7,156.9 L348.0,154.3 L353.1,151.5 L358.7,149.6 L365.7,148.1 L373.7,146.1 L380.8,144.1 L387.9,141.5 L395.6,138.5 L406.7,134.9 M406.7,134.9 L413.3,134.4 L419.3,133.9 L425.2,133.7 L432.5,134.3 L440.0,134.8 L447.3,136.0 L454.6,136.6 L461.7,138.0 L469.5,138.5 L477.3,137.8 L484.4,137.8 L491.7,137.4 L499.0,137.9 L506.6,138.0 L513.8,138.5 L521.1,143.2 L528.6,147.8 L536.5,152.8 L543.4,157.0 M406.7,134.9 L406.1,141.0 L404.9,147.8 L402.5,155.2 L399.3,162.6 L398.3,170.1 L397.5,177.3 L397.5,184.4 L398.1,191.8 L398.6,199.5 L398.7,206.8 L398.5,214.1 L398.6,221.7 L397.7,230.2 L397.5,238.3 L397.2,244.9 L396.5,251.7 L395.6,258.6 L396.1,265.7 L396.2,273.3 L396.4,280.8 L397.1,287.5 L396.7,293.2 L397.5,300.0 M406.7,134.9 L412.2,141.5 L417.8,147.8 L422.8,152.9 L428.0,157.9 L432.6,162.6 L437.2,168.4 L442.4,174.8 L447.3,181.0 L452.7,187.4 L457.2,193.2 L462.1,199.5 L465.5,205.8 L469.9,211.5 L473.2,218.0 L477.8,224.3 L482.4,230.9 L491.7,236.5 L502.8,239.4 M366.1,136.7 L366.8,130.9 L368.7,123.9 L369.8,118.2 L374.7,113.7 L380.0,110.0 L384.5,105.3 L391.7,103.8 L399.3,101.9 L406.7,100.5 L414.0,102.0 L421.4,104.1 L428.9,105.3 L431.6,110.4 L433.6,116.8 L436.3,121.9 L435.9,128.2 L435.2,134.4 L434.4,140.4 L431.0,145.8 L428.0,151.2 L425.2,157.0 L419.2,159.0 L412.5,162.2 L406.7,164.4 L399.7,162.4 L392.3,161.0 L384.5,158.9 L379.3,155.6 L374.3,151.4 L369.8,147.8 L366.1,136.7 M502.8,239.4 L513.8,236.5 L518.5,232.4 L523.9,228.8 L528.6,225.4 L533.7,221.3 L539.0,218.2 L543.4,214.3 L548.1,208.9 L553.6,204.8 L558.2,199.5 M502.8,239.4 L501.3,245.5 L498.7,251.8 L497.2,258.6 L495.4,270.1 M491.7,236.5 L499.4,235.6 L506.5,234.6 L514.1,236.9 L521.2,240.1 L526.9,245.9 L532.3,251.2 L534.1,258.6 L536.0,266.0 L539.0,275.2 M588.0,5.9 L586.8,11.9 L586.2,18.5 L588.9,23.7 L591.7,29.6 L596.2,34.7 L601.0,40.6 L602.8,48.1 L604.7,55.4 L604.1,61.9 L603.4,68.2 L603.5,73.9 L603.9,80.3 L604.2,87.4 L604.7,94.2 L599.1,101.6 L591.7,110.8 L595.4,121.9 L600.5,127.7 L606.5,133.0 L609.4,138.6 L612.0,144.1 L615.7,147.8 M540.0,158.9 L546.4,159.2 L551.9,160.0 L558.5,160.7 L564.9,159.9 L571.2,159.6 L576.9,158.9 L583.1,157.1 L589.3,155.2 L595.4,153.3 L602.5,151.7 L609.0,149.1 L615.7,147.8 M615.7,147.8 L609.7,151.2 L602.8,155.2 L598.2,158.9 L593.4,162.6 L588.0,166.3 L584.3,170.8 L580.6,176.6 L576.9,181.0 L573.7,185.7 L569.9,190.6 L565.9,195.8 L558.5,202.5 M615.7,147.8 L624.1,148.4 L632.4,149.6 L639.0,148.5 L644.8,147.6 L650.8,145.9 L657.8,142.5 L665.6,138.5 L672.7,134.6 L680.4,131.2 L687.6,127.7 L695.2,123.8 L703.0,120.3 L710.0,116.4 L717.2,111.4 L724.7,107.1 L731.9,103.2 L739.5,99.8 L746.9,96.1 L754.3,92.4 L761.3,88.4 L769.1,85.0 L776.8,82.4 L783.8,79.4 L790.8,77.3 L798.6,74.4 L806.0,72.0 M665.6,140.4 L668.0,146.0 L671.2,151.5 L674.7,157.4 L678.5,162.6 L681.4,168.1 L684.1,173.6 L687.8,182.9 L693.8,185.4 L698.9,188.4 L706.6,189.3 L713.6,190.3 L720.0,188.9 L726.3,186.7 L732.1,184.7 L738.6,183.0 L744.4,182.6 L750.6,181.0 L757.0,179.8 L762.6,178.4 L769.1,177.3 L776.4,175.7 L784.3,175.0 L791.2,173.6 L798.7,172.4 L806.0,171.8 M713.6,190.3 L717.3,195.9 L721.0,201.4 L728.4,210.6 L734.7,216.6 L741.4,221.7 L748.0,227.5 L754.3,232.8 L759.8,242.0 L762.6,248.8 L765.4,254.9 L769.3,261.2 L772.4,267.2 L776.5,273.4 L779.4,279.6 L781.3,285.8 L783.8,291.9 L787.5,300.0 M806.0,221.7 L798.2,225.0 L791.2,229.1 L783.7,232.4 L776.5,236.5 L768.5,238.8 L759.8,242.0 L753.1,245.5 L746.6,249.0 L739.5,253.1 L732.0,257.5 L724.7,262.3 L717.1,266.4 L710.0,271.6 L702.5,274.8 L695.2,278.9 M739.5,253.1 L743.7,259.6 L746.9,266.0 L754.0,271.1 L761.7,275.2 L769.0,278.3 L776.5,280.8 L782.1,281.7 L789.2,283.6 L794.9,284.5 L806.0,286.3 M168.1,270.0 L171.8,281.1 L172.6,287.0 L172.8,293.2 L172.9,299.6 L173.4,305.6 L173.5,312.0 L173.6,318.0 L174.4,325.6 L175.8,332.8 L177.3,340.2 L179.1,346.5 L180.5,352.3 L181.8,358.7 L182.4,364.5 L183.0,370.6 L183.6,377.1 L182.8,384.3 L181.0,391.9 L177.4,399.3 L173.6,406.7 L169.9,414.5 L166.3,421.5 L162.6,432.6 L161.2,440.2 L159.6,447.3 L158.0,454.4 L157.0,462.1 L153.3,473.2 L147.8,480.6 M5.9,460.3 L14.1,461.3 L22.2,462.1 L29.5,463.2 L36.9,464.1 L44.3,465.1 L51.4,466.2 L59.2,467.6 L66.5,469.5 L72.8,471.4 L78.7,473.5 L85.0,475.0 L92.3,474.4 L99.8,473.9 L106.2,473.7 L112.1,473.0 L118.2,473.2 L124.5,473.3 L130.2,473.8 L136.7,473.9 L142.1,476.6 L147.8,479.9 L155.1,480.0 L162.6,480.6 L169.9,479.8 L176.9,479.0 L184.7,477.6 L192.3,477.3 L199.2,476.8 L206.9,476.2 L213.8,475.9 L221.5,475.8 L229.1,475.0 L235.1,474.8 L242.1,475.0 L248.4,474.1 L254.9,473.9 L261.1,472.8 L267.5,470.8 L273.4,469.5 L281.0,466.7 L288.2,464.0 L294.3,461.2 L300.0,458.4 M147.8,480.6 L144.6,486.3 L142.2,491.7 L139.5,498.7 L136.7,506.5 L134.8,514.3 L133.7,521.2 L132.8,527.3 L132.2,534.2 L131.2,540.1 M258.6,473.9 L255.4,480.7 L251.2,488.0 L248.5,495.0 L245.7,502.8 L240.6,509.8 L236.5,517.5 L234.6,528.6 L230.1,533.9 L225.4,539.7 M395.6,270.0 L396.3,277.7 L396.6,285.2 L397.5,292.2 L398.3,299.1 L398.5,304.9 L399.2,311.2 L399.3,318.0 L399.5,324.1 L400.0,331.0 L400.1,337.1 L400.0,343.9 L401.3,350.3 L401.7,355.8 L403.0,362.4 L403.5,368.6 L404.9,375.3 M404.9,375.3 L404.3,383.4 L403.7,391.9 L406.4,399.6 L408.5,406.7 L412.4,413.6 L415.9,421.5 L419.4,428.7 L423.3,436.3 L426.6,443.8 L428.9,451.0 L431.7,457.7 L434.4,464.0 L439.2,471.4 M404.9,375.3 L400.0,380.2 L395.6,384.5 L387.8,388.0 L380.8,391.9 L373.3,396.0 L366.1,399.3 L358.5,400.6 L350.9,401.4 L343.9,403.0 L338.5,408.6 L332.8,414.1 L328.1,420.2 L322.9,426.1 L318.0,432.6 L312.8,437.0 L307.8,442.4 L303.3,447.3 L298.4,452.5 L293.5,457.5 L288.5,462.1 L282.6,464.1 L276.5,467.0 L270.0,469.5 M404.9,375.3 L409.1,370.9 L413.9,367.1 L417.8,362.4 L422.5,357.8 L428.1,352.8 L432.6,347.6 L437.0,343.1 L442.2,338.0 L447.3,332.8 L451.9,328.0 L457.1,323.1 L462.1,318.0 L466.1,313.4 L469.8,308.6 L473.2,303.3 L477.0,298.4 L480.9,293.5 L484.3,288.5 L488.3,282.8 L491.7,277.4 L495.4,270.0 M404.9,375.3 L411.3,371.6 L417.8,367.9 L424.2,366.6 L429.9,364.7 L436.3,363.1 L442.8,363.1 L449.6,363.0 L456.0,362.7 L462.1,362.4 L469.3,361.5 L476.4,361.1 L484.3,360.5 L491.3,359.1 L498.7,357.6 L506.5,356.8 L514.1,355.4 L521.4,354.8 L528.6,353.1 M439.2,471.4 L447.0,471.6 L454.7,472.5 L462.6,470.5 L469.5,467.7 L477.1,463.4 L484.3,458.4 L488.7,455.0 L493.7,450.9 L499.1,447.3 L504.0,442.2 L509.0,437.4 L513.8,432.6 L518.3,427.4 L523.7,423.0 L528.6,417.8 L534.4,412.0 L539.7,406.7 L545.7,402.3 L550.8,397.5 M439.2,471.4 L437.0,477.9 L434.4,484.3 L430.8,491.7 L427.0,499.1 L424.3,504.8 L420.6,511.5 L417.8,517.5 L413.7,523.8 L410.3,530.2 L406.7,536.0 L402.8,541.3 L399.7,545.6 L395.6,550.8 L390.4,555.2 L385.5,560.4 L380.8,565.6 L375.3,570.0 M665.6,292.2 L673.1,288.5 L680.4,284.8 L687.7,283.2 L695.2,281.1 M661.9,366.8 L668.0,367.3 L675.3,367.6 L681.2,368.8 L687.8,369.0 L694.6,369.4 L701.2,370.1 L707.2,369.8 L713.6,370.5 L720.0,370.3 L726.1,369.6 L733.5,369.6 L739.5,369.8 L747.3,368.8 L754.6,368.9 L761.7,367.9 L769.5,363.6 L776.5,358.7 L783.7,353.6 L791.2,349.4 L798.5,344.4 L806.0,340.2 M608.3,400.0 L612.7,404.4 L617.8,408.6 L622.6,413.1 L626.8,417.8 L630.2,424.2 L634.2,430.7 L633.1,437.4 L632.4,443.6 L632.2,450.3 L631.3,455.9 L630.5,462.1 L630.6,469.6 L629.4,476.6 L629.4,484.3 L630.2,491.2 L630.3,498.9 L630.5,506.5 L632.1,512.3 L634.0,518.7 L636.1,524.9 L638.2,531.6 L640.9,537.3 L643.4,543.4 L645.5,549.6 L647.2,556.0 L649.0,561.9 L650.8,570.0 M634.2,430.7 L640.2,435.5 L647.1,440.0 L652.1,444.0 L657.4,447.5 L661.9,451.0 L668.3,453.5 L674.3,456.3 L680.4,458.4 L688.0,460.1 L695.6,461.8 L702.6,464.0 L710.3,466.2 L717.1,467.4 L724.7,469.5 L731.9,471.3 L739.3,472.7 L746.9,475.0 L754.0,477.3 L761.7,478.3 L769.1,480.6 L776.1,482.8 L784.3,486.0 L791.2,488.0 L798.1,491.6 L806.0,495.4 M776.5,270.0 L780.4,275.8 L783.6,282.3 L787.5,288.5 L790.8,293.6 L794.4,298.0 L798.6,303.3 L806.0,308.8 M128.9,540.0 L128.6,546.2 L128.5,553.1 L127.9,560.1 L127.7,566.3 L126.8,573.5 L126.6,580.2 L126.4,587.3 L125.8,593.3 L125.6,600.3 L125.7,607.2 L126.5,613.3 L126.6,620.4 L127.1,628.6 L127.2,637.1 L129.5,644.0 L132.3,650.5 L133.9,657.2 L135.6,667.2 L137.3,673.9 M5.4,660.5 L12.8,658.2 L20.1,655.5 L26.8,653.3 L33.3,651.4 L40.2,648.8 L46.6,647.0 L53.2,646.0 L60.3,644.5 L69.0,644.2 L77.0,643.8 L84.9,642.7 L93.8,642.1 L101.7,641.1 L110.5,640.4 L118.7,640.5 L127.2,639.8 L133.9,640.3 L140.9,639.8 L147.3,640.4 L153.7,643.9 L160.7,646.5 L166.9,649.3 L174.1,652.2 L180.3,653.6 L185.8,655.5 L193.6,655.1 L200.9,653.8 L207.9,652.0 L214.3,650.5 L222.4,649.0 L231.0,647.8 L238.9,646.7 L247.8,646.5 L254.2,644.8 L261.2,643.8 L268.1,642.8 L274.6,642.1 L285.3,640.4 M77.0,643.8 L82.4,648.3 L87.1,652.2 L90.8,656.9 L95.4,662.2 L101.0,665.8 L107.1,668.9 L113.8,670.7 L120.5,672.3 L127.5,673.2 L133.9,673.9 L141.0,676.9 L147.3,680.6 L157.4,684.0 L162.4,685.6 L166.7,680.2 L170.8,673.9 L177.5,665.6 L181.8,660.1 L185.8,655.5 M222.7,540.0 L217.6,550.0 L215.9,556.7 L214.3,563.4 L213.9,572.0 L212.6,580.2 L210.4,586.5 L207.6,593.6 L204.2,600.4 L200.9,607.0 L198.3,615.0 L195.9,623.7 L193.3,630.4 L190.8,637.1 L189.3,644.2 L186.8,650.5 L185.8,655.5 M5.4,618.7 L11.7,627.1 L12.9,634.1 L13.4,640.4 L12.1,646.6 L10.0,653.8 L5.4,658.9 M220.0,648.0 L227.5,646.8 L235.8,645.3 L244.0,644.0 L251.6,643.5 L259.6,643.2 L267.5,642.2 L275.2,640.4 L283.3,639.5 L293.8,635.6 L301.7,631.6 L307.0,626.4 L312.3,624.3 L319.3,624.6 L325.4,625.0 L332.3,626.6 L338.6,627.7 L345.1,630.1 L351.8,631.6 L362.4,635.6 L372.9,638.2 L383.4,635.6 L391.4,629.0 L399.3,625.0 L409.8,621.1 L418.2,619.3 L425.6,618.5 L431.3,618.4 L437.9,617.1 L444.1,617.1 L452.0,619.8 L462.5,619.0 L470.9,618.3 L478.3,617.1 L486.5,616.4 L494.2,616.3 L500.7,616.3 L507.5,616.6 L513.7,616.9 L520.0,617.1 M307.0,626.4 L306.5,615.8 L309.6,607.9 L314.9,602.6 L321.5,600.0 M500.0,617.4 L506.1,616.8 L512.4,615.9 L519.1,617.7 L524.8,620.5 L531.2,623.3 L537.3,625.2 L543.2,627.1 L549.7,629.9 L555.9,631.8 L562.1,634.5 L569.6,637.2 L577.6,639.2 L585.5,639.4 L593.1,639.2 L600.8,639.5 L608.7,640.1 L615.9,641.0 L624.2,642.3 L632.1,642.6 L639.7,643.8 L647.8,645.8 L655.2,646.9 L663.1,649.3 L670.7,651.6 L678.5,652.8 L686.3,653.1 L694.5,656.2 L701.8,659.3 L709.5,660.5 L717.3,660.9 L723.5,660.0 L729.8,660.2 L735.9,659.3 L742.2,659.0 L748.6,659.0 L754.6,658.7 L762.1,657.6 L770.1,656.2 L779.4,654.7 L788.7,653.1 M649.0,560.0 L650.1,566.0 L652.1,572.4 L653.3,578.2 L655.2,584.8 L657.1,591.1 L658.3,597.3 L660.6,603.0 L663.0,609.7 L666.4,614.8 L669.2,620.5 L672.7,625.9 L677.0,631.4 L681.3,636.0 L686.3,640.7 L692.5,647.4 L698.7,653.1 L702.5,657.9 L706.4,662.4 L709.2,668.4 L712.7,674.9 L714.8,681.5 L717.3,687.3 L719.3,693.2 L722.0,699.7 L725.7,705.9 L729.7,712.1 L733.7,718.0 L737.5,724.5 L740.8,730.6 L743.7,737.0 L745.4,744.6 L746.8,752.5 L747.4,758.4 L748.4,764.9 L749.5,771.3 L751.5,777.3 L752.8,784.4 L754.6,791.3 M802.7,560.0 L800.7,566.6 L798.0,572.4 L793.8,578.4 L790.3,584.8 L787.9,590.7 L785.6,597.3 L784.4,603.7 L784.1,609.7 L783.4,616.1 L783.1,622.1 L784.0,628.2 L784.1,634.5 L783.1,643.8 L781.0,653.1 L784.1,662.4 L790.3,671.8 L794.4,676.0 L798.0,681.1 L804.2,690.4 L805.8,696.6 M777.9,650.0 L782.5,645.4 L787.2,648.5 L788.7,656.2 L784.1,660.9 L778.8,657.8 L777.9,650.0 M415.0,520.0 L409.7,530.5 L404.9,537.0 L399.2,543.7 L394.4,549.5 L390.7,554.4 L386.0,559.5 L382.0,564.1 L376.7,568.6 L372.8,572.7 L366.3,578.4 L359.6,583.3 L352.8,587.7 L346.4,591.2 L340.1,594.3 L333.3,597.8 L326.7,599.3 L320.1,601.7 L309.5,607.0 L306.9,614.9 L305.6,624.1 L306.9,628.1 M539.0,275.3 L543.3,280.0 L543.6,291.8 L547.7,297.7 L552.2,303.6 L556.3,307.3 L555.9,311.8 L558.1,316.9 L561.8,319.9 L566.9,320.2 L569.6,324.3 L569.9,327.3 L572.9,330.2 L575.8,333.9 L578.8,336.9 L581.0,342.1 L582.5,346.5 L582.9,350.9 L582.5,355.4 L581.7,359.8 M583.9,293.6 L582.5,297.7 L578.8,302.2 L577.3,306.6 L574.3,309.6 L572.9,314.7 L571.4,319.9 L569.6,324.3 M575.8,339.1 L578.8,336.2 L582.5,334.7 L589.1,335.0 L593.5,336.2 L594.3,342.1 L595.0,348.0 L595.0,352.4 L592.1,353.9 L588.4,355.4 L586.2,356.8 L583.2,360.5 L578.8,360.5 L575.8,358.3 L575.1,352.4 L574.8,346.5 L575.8,339.1 M583.2,346.5 L586.2,343.5 L590.6,339.1 L593.5,335.9 L598.0,333.2 L603.9,328.8 L609.8,322.9 L617.2,320.6 L624.6,318.7 L632.0,316.2 L637.9,314.7 L643.8,310.3 L650.0,306.3 L655.2,302.0 L660.2,296.8 L665.7,292.3 M530.0,353.9 L535.9,352.4 L544.8,351.7 L555.1,352.1 L558.1,349.5 L565.5,347.2 L572.9,347.7 L575.8,348.3 L582.9,349.5 M582.9,350.9 L589.1,350.9 L595.0,352.4 L600.9,353.2 L606.8,353.9 L611.3,357.6 L617.2,360.5 L624.6,361.3 L633.4,361.6 L642.3,364.2 L650.0,366.5 L662.0,366.7 M578.8,360.5 L574.3,364.2 L568.4,367.2 L564.0,371.6 L559.6,376.1 L555.9,382.0 L553.6,389.4 L549.2,400.0 M586.2,356.8 L589.1,360.5 L590.6,365.7 L595.0,370.1 L598.0,374.6 L600.9,379.0 L603.2,384.9 L604.6,392.3 L608.3,400.0" fill="none" stroke="#806a00" stroke-width="1" stroke-linejoin="round" shape-rendering="crispEdges"/>
<path d="M5.9,105.3 L155.2,105.3 M155.2,105.3 L155.7,106.3 L156.5,107.7 L157.3,109.3 L158.1,110.8 L158.9,112.2 L159.7,113.5 L160.4,114.9 L160.7,116.4 L160.7,117.8 L160.4,119.3 L160.0,120.9 L159.5,122.4 L158.9,123.8 L157.9,125.3 L156.8,126.7 L155.6,128.0 L154.4,129.3 L153.3,130.7 L152.1,132.0 L150.9,133.3 L149.6,134.9 L148.7,136.0 L147.8,137.2 L146.9,138.5 L146.0,139.8 L145.0,141.0 L144.1,142.2 L142.9,143.7 L141.6,145.3 L140.4,146.7 L139.3,148.0 L138.5,148.9 M138.5,148.9 L186.6,148.9 M201.4,5.9 L201.5,6.9 L201.8,8.3 L202.0,9.9 L202.4,11.6 L202.8,13.3 L203.2,14.8 L203.9,16.4 L204.6,17.8 L205.5,19.3 L206.2,20.7 L206.9,22.2 L207.5,23.7 L208.1,25.3 L208.6,26.9 L208.9,28.3 L208.7,29.6 L207.8,30.7 L206.1,31.5 L204.4,32.3 L203.2,33.3 L202.4,35.0 L202.1,36.9 L202.5,38.8 L203.2,40.1 L204.4,41.4 L205.7,42.8 L206.9,44.3 L207.7,45.7 L208.4,47.2 L209.1,48.8 L209.9,50.3 L210.6,51.7 L211.4,53.3 L212.3,54.8 L213.2,56.2 L214.3,57.3 L215.8,58.1 L217.6,58.8 L219.4,59.1 L220.9,59.1 L222.5,58.4 L223.7,57.0 L224.6,55.4 L225.2,53.6 L225.5,51.7 L226.1,49.9 L227.1,48.9 L228.3,48.0 L229.6,47.2 L230.9,46.2 L231.9,45.1 L233.0,43.9 L234.1,42.7 L235.2,41.5 L236.5,40.6 L237.8,40.0 L239.3,39.4 L240.8,39.0 L242.3,38.8 L243.8,38.8 L245.3,39.0 L246.8,39.5 L248.3,40.1 L249.8,40.8 L251.2,41.4 L252.7,41.9 L254.2,42.5 L255.7,43.1 L257.1,43.7 L258.6,44.3 L260.1,44.9 L261.6,45.4 L263.1,46.0 L264.5,46.6 L266.0,47.3 L267.5,48.1 L269.1,49.1 L270.6,50.1 L272.0,51.0 L273.4,51.7 L275.5,52.8 L277.3,53.6 L278.9,53.6 L280.1,52.7 L281.1,51.3 L281.9,49.7 L282.6,48.0 L283.2,46.4 L283.7,44.8 L283.9,43.0 L283.7,41.4 L283.1,39.8 L282.1,38.2 L281.0,36.6 L280.0,35.1 L279.0,33.2 L278.1,31.3 L277.8,29.6 L278.3,27.9 L279.3,26.4 L280.8,25.1 L281.9,24.5 L283.2,24.0 L284.7,23.6 L286.3,23.3 L288.2,22.9 L289.7,22.6 L291.6,22.4 L293.6,22.1 L295.5,21.9 L297.4,21.7 L298.9,21.6 L300.0,21.4 M226.5,59.9 L226.5,60.6 L226.2,61.4 L225.9,62.2 L225.7,62.7 L226.1,62.9 L227.1,62.9 L228.6,62.6 L230.2,62.5 L231.6,62.6 L232.6,63.3 L233.1,64.4 L233.0,65.6 L232.2,66.8 L231.0,68.0 L229.9,69.1 L229.1,70.1 L228.7,71.0 L229.0,71.9 L229.8,72.8 L230.8,73.9 L231.6,75.0 L231.8,76.1 L231.2,77.1 L230.1,78.0 L228.1,78.5 L226.6,79.1 L225.6,79.8 L225.2,80.7 L225.4,82.0 L226.2,83.4 L227.4,84.8 L228.6,86.3 L229.6,87.6 L230.0,88.9 L229.7,90.1 L228.8,91.0 L227.2,91.7 L225.4,91.9 L223.7,91.8 L222.0,91.5 L221.1,91.6 L220.8,92.3 L221.0,93.7 L221.5,95.6 L221.9,97.4 L221.9,98.9 L221.3,99.6 L220.2,99.6 L218.6,98.9 L216.9,97.9 L215.5,97.4 L214.4,97.2 L213.7,97.5 L213.4,98.2 L213.2,99.5 L213.0,101.0 L212.8,102.7 L212.4,104.0 L211.9,104.9 L211.1,105.1 L210.0,104.7 L208.9,103.8 L208.1,102.5 L207.4,100.9 L207.0,100.0 L206.4,100.2 L205.5,101.3 L204.7,103.0 L203.9,104.6 L203.2,105.5 L202.7,105.3 L202.4,104.1 L201.8,102.5 L201.0,101.4 L199.9,101.0 L199.1,101.4 L199.1,102.4 L199.7,103.4 L200.7,104.5 L201.7,105.6 L202.2,106.5 L202.1,107.3 L201.3,107.9 L200.0,108.5 L198.3,109.2 L197.0,109.8 L195.9,110.5 L195.2,111.2 L195.0,111.9 L195.2,112.8 L195.6,114.0 L196.2,115.5 L196.7,117.1 L197.2,118.6 L197.3,120.0 L197.2,121.1 L196.7,121.9 L195.9,122.3 L194.7,122.6 L193.3,123.0 L191.7,123.4 L189.9,124.0 L188.6,124.9 L188.3,125.9 L189.0,127.0 L190.5,127.9 L192.4,128.6 L194.3,129.2 L195.8,129.9 L196.5,130.7 L196.4,131.7 L195.3,132.7 L193.7,133.8 L192.3,134.8 L191.2,135.6 L190.6,136.3 L190.8,136.9 L191.6,137.9 L192.7,139.1 L193.7,140.6 L194.1,141.9 L193.8,142.9 L192.8,143.5 L191.1,143.9 L189.7,144.4 L188.6,145.0 L188.0,146.0 L188.2,147.1 L189.0,148.3 L189.8,149.3 L190.3,150.2 L190.2,151.0 L189.5,151.8 L188.1,152.7 L186.9,153.5 L186.2,154.4 L186.3,155.2 L187.1,156.0 L188.4,156.9 L189.8,157.8 L190.7,158.9 L190.9,159.9 L190.3,160.7 L188.9,161.3 L187.3,161.6 L186.1,161.9 L185.1,162.3 L184.3,162.8 L183.9,163.5 L183.7,164.4 L183.6,165.7 L183.7,167.1 L183.8,168.5 L183.8,169.9 L183.6,171.1 L183.1,172.0 L182.3,172.7 L181.2,173.2 L179.9,173.4 L178.5,173.5 L176.8,173.4 L175.4,173.6 L174.3,174.1 L173.8,175.1 L173.8,176.4 L174.2,177.9 L174.9,179.4 L175.5,180.7 L175.8,181.7 L175.5,182.5 L174.7,183.1 L173.3,183.4 L171.8,183.7 L170.3,183.9 L169.3,184.5 L169.2,185.4 L169.9,186.6 L170.8,188.0 L171.3,189.3 L171.1,190.2 L170.1,190.5 L168.6,190.5 L166.9,190.3 L165.8,190.4 L165.3,191.0 L165.2,192.3 L165.5,193.9 L165.9,195.5 L166.1,196.5 L165.6,197.1 L164.4,197.3 L162.8,197.2 L161.5,197.2 L160.3,197.3 L159.4,197.5 L158.7,198.1 L158.4,199.0 L158.4,200.0 L158.7,201.3 L159.2,202.5 L159.7,203.8 L160.1,204.9 L160.4,205.7 L160.3,206.4 L159.8,207.0 L158.9,207.6 L157.7,208.1 L156.4,208.5 L154.3,208.6 L152.9,209.3 L152.6,210.5 L153.5,211.7 L155.3,212.8 L157.3,213.5 L158.6,214.2 L158.9,215.1 L158.1,216.1 L156.6,217.4 L154.7,218.7 L153.6,219.9 L153.1,220.8 L153.1,221.4 L153.8,222.1 L154.9,222.8 L156.3,223.7 L157.7,224.8 L158.9,225.8 L159.6,226.8 L159.6,227.8 L158.9,228.6 L157.6,229.4 L155.9,229.8 L154.1,229.9 L152.6,229.9 L151.5,230.0 L150.7,230.2 L150.4,230.8 L150.2,231.8 L150.3,233.2 L150.6,234.8 L151.1,236.3 L151.6,237.6 L151.8,238.6 L151.7,239.4 L151.0,240.0 L149.8,240.5 L148.3,240.7 L146.6,240.8 L145.0,240.7 L143.5,240.8 L142.5,241.3 L141.9,242.1 L141.8,243.3 L142.2,244.7 L142.7,246.4 L143.2,248.0 L143.5,249.6 L143.3,250.9 L142.5,251.7 L141.2,252.0 L139.8,251.5 L138.6,250.5 L137.5,249.6 L136.6,249.1 L135.7,248.8 L134.9,248.8 L134.2,249.1 L133.7,249.8 L133.2,250.7 L132.9,251.8 L132.6,253.0 L132.5,254.0 L132.3,254.8 L132.1,255.2 L131.7,255.4 L131.0,255.5 L130.0,255.6 L128.8,255.9 L127.0,256.1 L124.8,256.4 L123.7,257.3 L124.1,258.7 L125.7,260.3 L127.8,261.6 L129.7,262.5 L130.5,263.4 L129.7,264.3 L127.8,264.9 L125.4,265.2 L124.0,265.7 L123.0,266.3 L122.6,267.0 L122.8,267.9 L123.7,268.8 L125.0,269.7 L126.4,270.6 L127.7,271.4 L128.5,272.2 L128.7,272.9 L128.3,273.7 L127.2,274.5 L125.6,275.1 L124.1,275.5 L122.8,275.9 L121.7,276.5 L121.2,277.5 L121.4,278.7 L122.1,280.1 L123.0,281.4 L123.8,282.8 L124.3,284.1 L124.2,285.2 L123.5,286.1 L122.3,286.8 L120.7,287.2 L119.1,287.3 L117.9,287.6 L116.9,287.9 L116.2,288.5 L115.7,289.4 L115.6,290.6 L115.6,291.9 L115.8,293.4 L115.8,294.9 L115.7,296.2 L115.4,297.2 L114.7,298.0 L113.7,298.5 L112.4,298.7 L111.0,298.7 L109.5,298.6 L108.1,298.4 L106.8,298.4 L105.8,298.8 L105.1,299.6 L104.7,300.8 L104.7,302.2 L104.9,303.7 L105.2,305.2 L105.3,306.5 L105.1,307.6 L104.6,308.4 L103.7,308.9 L102.4,309.2 L100.9,309.3 L99.5,309.4 L98.2,309.7 L97.1,310.1 L96.3,310.9 L95.8,311.8 L95.7,313.0 L95.9,314.3 L96.2,315.7 L96.6,317.1 L96.8,318.4 L96.6,319.6 L96.1,320.6 L95.2,321.3 L94.0,321.9 L92.6,322.2 L91.0,322.2 L89.0,321.8 L87.5,321.9 L86.6,322.8 L86.6,324.2 L87.2,326.0 L88.3,327.8 L89.3,329.5 L90.0,330.7 L89.9,331.5 L89.0,332.0 L87.4,332.3 L85.4,332.7 L84.2,333.5 L83.2,334.4 L82.7,335.4 L82.6,336.3 L83.1,337.2 L83.9,338.1 L85.0,339.0 L86.2,339.9 L87.3,340.8 L88.1,341.9 L88.4,343.0 L88.2,344.0 L87.5,344.9 L86.4,345.7 L85.0,346.2 L83.4,346.5 L81.8,346.7 L80.7,347.1 L80.3,347.9 L80.5,349.1 L81.3,350.7 L82.2,352.4 L83.1,353.9 L83.6,355.1 L83.3,356.0 L82.3,356.6 L80.7,357.0 L79.0,357.3 L77.7,357.9 L76.7,358.6 L76.3,359.7 L76.6,360.9 L77.4,362.0 L78.4,363.1 L79.3,364.0 L79.8,364.9 L79.7,365.8 L79.1,366.8 L78.1,367.8 L76.6,369.0 L75.5,370.3 L75.5,371.3 L76.7,372.1 L78.7,372.4 L80.8,372.5 L82.5,372.8 L83.1,373.5 L82.6,374.6 L81.4,376.1 L79.6,377.6 L78.2,378.9 L77.9,379.9 L78.7,380.5 L80.5,380.9 L82.8,381.2 L84.9,381.7 L86.2,382.5 L86.3,383.7 L85.1,384.9 L83.0,385.9 L80.8,386.5 L79.2,386.9 L78.4,387.7 L78.8,389.0 L80.2,390.4 L82.1,391.7 L83.9,392.9 L84.9,393.8 L84.9,394.7 L83.8,395.8 L81.8,396.8 L79.6,397.5 L78.1,398.3 L77.1,399.0 L76.9,399.8 L77.3,400.9 L78.4,402.2 L79.8,403.6 L81.3,404.8 L82.5,405.9 L83.2,406.9 L83.2,407.8 L82.5,408.8 L81.1,409.6 L79.4,410.5 L78.2,411.5 L77.1,412.5 L76.7,413.6 L76.9,414.5 L77.8,415.3 L79.1,416.0 L80.6,416.7 L81.9,417.5 L82.7,418.2 L83.0,419.1 L82.6,420.1 L81.7,421.2 L80.6,422.4 L79.6,423.8 L78.9,425.1 L78.9,426.1 L79.6,426.8 L80.7,427.3 L82.2,427.8 L83.8,428.5 L85.1,429.5 L85.8,430.7 L85.8,431.7 L85.2,432.5 L84.0,433.3 L82.7,434.3 L81.5,435.5 L81.0,436.6 L81.2,437.7 L82.2,438.3 L83.7,438.8 L85.2,439.4 L86.4,440.1 L86.8,441.0 L86.4,442.0 L85.5,443.2 L84.2,444.5 L83.5,445.6 L83.1,446.6 L83.1,447.5 L83.5,448.4 L84.4,449.0 L85.4,449.7 L86.5,450.5 L87.6,451.4 L88.5,452.2 L89.0,453.1 L89.1,453.9 L88.8,454.7 L88.1,455.5 L87.2,456.4 L86.1,457.3 L84.6,458.4 L83.9,459.3 L84.5,459.9 L86.2,460.4 L88.3,460.7 L90.0,460.9 L90.8,461.4 L90.3,462.3 L89.2,463.8 L88.1,465.9 L87.9,467.5 L88.1,468.8 L88.8,469.4 L89.9,469.5 L91.4,469.4 L93.1,469.3 L95.0,469.4 L96.5,469.9 L97.6,470.8 L97.9,471.9 L97.5,473.0 L96.4,474.1 L94.9,475.0 L93.3,475.7 L91.6,476.1 L91.0,476.5 L91.8,477.2 L93.4,478.3 L95.2,479.8 L96.4,481.6 L96.4,483.0 L95.2,483.7 L93.1,483.5 L90.8,483.0 L88.8,482.4 L87.5,482.6 L87.3,484.0 L88.0,486.0 L89.3,488.0 L90.3,489.4 L90.4,490.0 L89.1,490.4 L86.9,490.5 L84.7,490.8 L83.4,491.2 L83.0,491.9 L83.5,492.9 L84.5,494.4 L85.7,495.9 L86.7,497.3 L86.9,498.2 L86.2,498.8 L84.7,499.1 L82.8,499.4 L81.8,499.9 L80.9,500.4 L80.2,501.0 L79.8,501.7 L79.5,502.6 L79.5,503.8 L79.4,505.1 L79.3,506.4 L79.2,507.7 L78.8,508.9 L78.3,509.8 L77.5,510.5 L76.5,511.0 L75.2,511.4 L73.9,511.7 L72.6,512.0 L71.4,512.5 L70.6,513.3 L70.1,514.3 L70.0,515.6 L70.2,516.9 L70.6,518.2 L70.8,519.4 L70.7,520.5 L70.2,521.3 L69.3,522.0 L68.2,522.6 L66.6,522.8 L64.5,522.8 L63.2,523.3 L62.9,524.3 L63.7,525.8 L65.0,527.6 L66.3,529.4 L67.0,530.9 L66.7,531.9 L65.2,532.4 L63.1,532.2 L61.3,532.1 L60.1,532.4 L59.1,532.9 L58.3,533.7 L57.9,534.7 L57.9,535.9 L58.2,537.1 L58.5,538.2 L58.9,539.4 L59.0,540.5 L58.8,541.4 L58.4,542.2 L57.7,542.8 L56.7,543.2 L55.6,543.5 L54.3,543.8 L53.0,544.2 L52.1,544.9 L51.6,545.8 L51.7,546.8 L52.3,547.8 L53.2,548.9 L54.1,550.0 L54.7,551.2 L55.0,552.3 L54.7,553.2 L54.1,553.9 L53.1,554.4 L51.8,555.0 L50.8,555.8 L49.9,556.6 L49.3,557.5 L49.2,558.4 L49.5,559.5 L50.0,560.6 L50.5,561.7 L50.7,562.9 L50.5,564.0 L49.9,564.8 L49.0,565.4 L47.8,565.9 L46.6,566.4 L45.6,567.1 L44.9,568.0 L44.7,569.0 L44.9,570.1 L45.4,571.1 L46.2,572.1 L46.9,573.0 L47.5,573.8 L47.8,574.5 L47.8,575.3 L47.5,576.1 L46.9,577.2 L46.4,578.3 L46.0,579.5 L45.8,580.6 L45.8,581.5 L46.0,582.4 L46.4,583.2 L47.0,584.0 L47.7,584.8 L48.3,585.7 L49.1,585.9 L49.6,586.3 L50.0,586.8 L49.7,587.4 L49.3,588.0 L48.8,588.5 L48.4,589.0 L48.2,589.4 L48.1,589.9 M45.2,594.2 L185.8,594.2 M184.7,599.1 L184.1,599.5 L183.2,599.7 L182.3,600.0 L181.7,600.3 L181.7,600.8 L182.3,601.7 L183.6,602.8 L184.7,603.8 L185.7,604.7 L186.0,605.9 L185.8,607.0 L185.0,607.8 L183.6,608.5 L181.9,608.9 L180.4,609.4 L179.2,610.1 L178.4,610.9 L178.3,612.0 L178.9,613.2 L179.7,614.4 L180.4,615.5 L180.6,616.5 L180.1,617.4 L179.2,618.3 L177.3,619.3 L176.1,620.4 L175.4,621.5 L175.5,622.6 L176.3,623.6 L177.6,624.5 L179.3,625.2 L181.1,625.7 L182.6,626.2 L183.7,626.8 L184.2,627.6 L184.0,628.7 L183.4,630.0 L182.5,631.6 L181.6,633.1 L180.8,634.7 L180.7,635.9 L181.5,636.6 L183.0,637.0 L185.0,637.1 L186.9,637.3 L188.4,637.7 L189.1,638.6 L188.9,639.8 L188.0,641.4 L186.8,643.0 L186.0,644.4 L185.6,645.6 L185.8,646.6 L186.6,647.3 L187.9,647.9 L189.5,648.5 L191.1,649.2 L192.4,649.9 L193.2,650.8 L193.4,651.8 L193.0,652.9 L192.1,654.2 L191.1,655.6 L189.8,657.1 L189.3,658.4 L189.9,659.3 L191.4,659.9 L193.4,660.3 L195.3,660.5 L196.6,661.0 L196.8,661.9 L196.2,663.3 L195.2,665.0 L194.3,666.0 L193.7,666.9 L193.8,667.5 L194.8,667.7 L196.0,667.6 L197.0,667.6 L197.6,667.8 L197.8,668.3 L197.7,669.0 M210.6,105.3 L300.0,104.6 M145.9,238.3 L300.0,238.3 M299.9,21.4 L301.0,20.8 L302.5,19.9 L304.2,18.8 L305.8,17.7 L306.9,16.6 L308.1,14.8 L308.8,12.9 L308.8,11.1 L308.2,9.6 L307.1,8.2 L305.9,6.8 L305.1,5.9 M270.0,105.3 L310.6,105.3 M310.6,105.3 L310.5,104.3 L310.4,103.0 L310.1,101.4 L309.8,99.7 L309.5,97.8 L309.3,95.8 L309.1,94.0 L309.1,92.2 L309.2,90.7 L309.4,89.5 L309.9,88.7 L310.9,88.2 L312.2,88.1 L313.9,88.3 L315.7,88.8 L317.6,89.4 L319.5,90.1 L321.2,90.8 L322.6,91.3 L323.6,91.6 M323.6,91.6 L425.2,90.9 M425.2,90.9 L570.0,95.3 M270.0,238.3 L570.0,239.8 M299.6,238.3 L306.9,254.9 M306.9,254.9 L303.3,300.0 M491.7,239.4 L497.2,258.6 M497.2,258.6 L504.6,300.0 M540.0,94.2 L636.1,96.8 M636.1,96.8 L783.8,94.6 M783.8,94.6 L806.0,97.9 M636.1,96.8 L636.9,96.3 L638.0,95.6 L639.2,94.8 L640.7,94.0 L642.2,93.0 L643.9,92.1 L645.5,91.3 L647.1,90.5 L648.5,90.0 L649.9,89.5 L651.3,89.0 L652.8,88.5 L654.3,88.0 L655.8,87.6 L657.4,87.1 L658.9,86.7 L660.4,86.2 L661.9,85.7 L663.4,85.2 L665.0,84.7 L666.6,84.2 L668.3,83.7 L669.9,83.2 L671.5,82.7 L672.9,82.2 L674.3,81.7 L675.6,81.1 L676.7,80.5 L678.3,79.3 L679.4,77.8 L680.2,76.4 L681.0,75.1 L682.2,73.9 L683.6,73.1 L685.1,72.5 L686.7,72.0 L688.4,71.5 L690.0,70.9 L691.5,70.2 L692.8,69.4 L694.1,68.6 L695.3,67.8 L696.5,66.8 L697.7,65.8 L698.9,64.7 L700.0,63.5 L701.1,62.2 L702.2,60.9 L703.3,59.4 L704.4,58.0 L705.4,56.7 L706.3,55.4 L707.1,53.8 L707.5,52.3 L707.9,50.9 L708.6,49.5 L710.0,48.0 L710.9,47.4 L712.0,46.7 L713.2,46.1 L714.5,45.4 L715.9,44.8 L717.4,44.1 L718.9,43.5 L720.4,42.8 L721.9,42.1 L723.3,41.4 L724.7,40.6 L726.1,39.9 L727.5,39.1 L728.9,38.3 L730.3,37.4 L731.7,36.6 L733.0,35.7 L734.4,34.8 L735.7,34.0 L737.0,33.1 L738.3,32.3 L739.5,31.4 L740.9,30.4 L742.2,29.3 L743.5,28.3 L744.7,27.2 L745.9,26.1 L747.0,25.1 L748.2,24.1 L749.4,23.1 L750.6,22.2 L752.0,21.1 L753.5,20.1 L755.1,19.1 L756.6,18.1 L758.1,17.2 L759.4,16.3 L760.6,15.5 L761.7,14.8 L763.7,13.3 L765.0,12.3 L765.4,11.1 L764.9,9.8 L763.8,8.3 L762.5,6.9 L761.7,5.9 M765.4,11.1 L765.2,12.4 L765.1,14.3 L765.4,16.6 L765.7,18.0 L766.1,19.4 L766.5,21.0 L767.1,22.6 L768.0,24.3 L769.1,25.9 L770.0,26.9 L771.0,28.0 L772.1,29.1 L773.3,30.3 L774.6,31.4 L775.9,32.4 L777.3,33.4 L778.7,34.3 L780.1,35.1 L781.5,35.7 L782.9,36.3 L784.4,36.9 L786.0,37.4 L787.5,37.9 L789.1,38.2 L790.6,38.5 L792.1,38.7 L793.6,38.8 L794.9,38.8 L796.6,38.5 L798.2,37.9 L799.8,37.1 L801.4,36.3 L802.8,35.3 L804.1,34.5 L805.2,33.7 L806.0,33.3 M786.8,95.3 L786.4,96.4 L785.9,98.0 L785.2,99.9 L784.5,101.7 L783.8,103.4 L783.1,105.0 L782.2,106.5 L781.3,107.9 L780.5,109.4 L780.1,110.8 L780.3,112.4 L780.9,114.1 L781.7,115.7 L782.1,117.1 L782.0,118.2 L781.1,118.9 L779.8,119.2 L778.1,119.3 L776.3,119.6 L774.6,120.1 L773.4,120.7 L772.0,121.3 L770.7,122.1 L769.3,122.9 L767.9,123.8 L766.6,124.7 L765.4,125.6 L764.0,126.8 L762.8,128.1 L761.6,129.4 L760.4,130.7 L759.2,132.0 L758.0,133.0 L756.5,134.1 L755.1,135.0 L753.7,135.7 L752.2,136.3 L750.6,136.7 L749.2,136.8 L747.6,136.6 L746.1,136.3 L744.5,136.0 L742.9,135.8 L741.4,136.0 L739.8,136.4 L738.2,137.0 L736.6,137.8 L735.1,138.6 L733.6,139.5 L732.1,140.4 L730.8,141.3 L729.5,142.2 L728.3,143.1 L727.1,144.0 L725.9,145.0 L724.7,145.9 L723.5,147.0 L722.1,148.2 L720.8,149.4 L719.5,150.5 L718.4,151.2 L717.3,151.5 L716.3,150.6 L715.6,148.7 L714.9,146.8 L713.6,145.9 L712.6,146.2 L711.4,146.8 L710.1,147.6 L708.7,148.7 L707.2,149.7 L705.8,150.7 L704.4,151.5 L702.8,152.2 L701.1,152.7 L699.4,153.2 L697.8,153.7 L696.4,154.4 L695.2,155.2 L694.2,156.4 L693.6,158.0 L693.1,159.6 L692.5,161.1 L691.5,162.6 L690.4,163.5 L689.2,164.3 L687.9,165.1 L686.5,165.8 L685.0,166.6 L683.6,167.3 L682.2,168.1 L680.9,168.9 L679.7,169.7 L678.4,170.5 L677.1,171.3 L675.8,172.1 L674.4,172.9 L673.0,173.6 L671.7,174.3 L670.4,175.0 L669.0,175.7 L667.6,176.4 L666.2,177.1 L664.7,177.8 L663.3,178.5 L661.9,179.2 L660.5,179.9 L659.2,180.7 L657.8,181.4 L656.4,182.2 L655.0,182.9 L653.6,183.6 L652.2,184.2 L650.8,184.7 L649.3,185.2 L647.7,185.5 L646.1,185.8 L644.5,186.0 L642.9,186.2 L641.3,186.3 L639.8,186.6 L638.2,186.8 L636.6,187.0 L635.0,187.2 L633.4,187.4 L631.8,187.6 L630.3,188.0 L628.7,188.4 L627.3,188.9 L625.8,189.5 L624.4,190.2 L622.9,190.8 L621.5,191.6 L620.1,192.4 L618.8,193.2 L617.6,194.0 L616.1,195.1 L614.7,196.2 L613.4,197.4 L612.2,198.7 L611.2,200.0 L610.2,201.4 L609.4,202.9 L608.8,204.5 L608.3,206.2 L607.9,207.9 L607.3,209.4 L606.5,210.6 L605.3,211.7 L603.9,212.5 L602.4,213.1 L600.8,213.6 L599.1,214.3 L597.6,214.7 L595.9,214.9 L594.1,215.0 L592.5,215.5 L591.0,216.4 L589.9,218.0 L589.5,219.0 L589.2,220.3 L589.0,221.7 L588.8,223.3 L588.6,225.1 L588.5,226.9 L588.4,228.7 L588.3,230.6 L588.3,232.4 L588.2,234.1 L588.2,235.6 L588.1,237.0 L588.1,238.1 L588.0,239.0 M540.0,239.0 L588.0,239.0 M588.0,239.0 L678.5,239.0 M678.5,239.0 L679.5,238.5 L680.7,237.9 L682.2,237.1 L684.0,236.2 L685.8,235.4 L687.8,234.6 L689.0,234.2 L690.4,233.8 L691.8,233.5 L693.3,233.2 L694.8,232.8 L696.4,232.5 L698.0,232.1 L699.5,231.8 L701.1,231.4 L702.6,230.9 L704.0,230.4 L705.5,229.9 L707.1,229.3 L708.6,228.7 L710.1,228.1 L711.6,227.5 L713.0,227.0 L714.5,226.4 L715.9,225.9 L717.3,225.4 L719.1,224.8 L720.7,224.3 L722.4,223.7 L724.0,223.2 L725.6,222.8 L727.2,222.4 L728.8,222.0 L730.3,221.7 L731.9,221.4 L733.3,221.1 L734.7,220.9 L736.1,220.8 L737.6,220.6 L739.3,220.6 L741.4,220.6 L742.7,220.6 L744.2,220.6 L745.8,220.7 L747.6,220.8 L749.4,220.9 L751.3,221.0 L753.1,221.1 L754.9,221.2 L756.6,221.3 L758.2,221.4 L759.6,221.5 L760.8,221.6 L761.7,221.7 M761.7,221.7 L806.0,223.5 M678.5,239.0 L677.7,239.7 L676.6,240.7 L675.3,241.8 L673.9,243.0 L672.5,244.4 L671.2,245.7 L670.1,246.9 L668.9,248.2 L667.8,249.6 L666.7,251.0 L665.6,252.3 L664.6,253.7 L663.8,254.9 L662.6,256.5 L661.6,258.0 L660.7,259.4 L660.2,260.9 L660.1,262.3 L660.4,263.6 L661.1,264.8 L662.0,266.1 L663.2,267.4 L664.4,268.6 L665.6,269.7 L666.7,270.6 L667.9,271.4 L669.2,272.2 L670.6,273.0 L672.0,273.7 L673.4,274.5 L674.9,275.2 L676.2,276.0 L677.5,276.7 L679.0,277.4 L680.4,278.1 L681.8,278.8 L683.3,279.5 L684.6,280.2 L685.9,280.8 L687.6,281.5 L689.3,282.0 L690.9,282.6 L692.5,283.1 L693.9,283.7 L695.2,284.5 L696.5,285.6 L697.5,286.8 L698.4,288.2 L699.2,289.6 L700.0,291.1 L700.6,292.6 L701.1,294.3 L701.6,296.0 L702.0,297.6 L702.3,299.0 L702.6,300.0 M5.9,415.2 L78.3,415.2 M305.1,270.0 L299.6,325.4 M299.6,325.4 L292.2,399.3 M292.2,399.3 L284.8,462.1 M284.8,462.1 L280.3,510.1 M280.3,510.1 L280.0,520.1 M499.1,270.0 L506.5,306.9 M506.5,306.9 L513.8,351.3 M513.8,351.3 L521.2,399.3 M521.2,399.3 L524.9,428.9 M524.9,428.9 L525.2,429.8 L525.6,431.0 L526.0,432.4 L526.4,433.9 L526.9,435.6 L527.5,437.4 L528.0,439.2 L528.6,441.0 L529.1,442.8 L529.6,444.5 L530.1,446.0 L530.5,447.3 L531.1,449.3 L531.6,451.2 L532.1,452.8 L532.5,454.3 L533.0,455.7 L533.6,457.1 L534.2,458.4 L535.1,459.8 L536.1,461.1 L537.3,462.2 L538.3,463.3 L539.2,464.5 L539.7,465.8 L539.7,467.3 L539.3,468.8 L538.7,470.4 L538.1,472.0 L537.7,473.6 L537.9,475.0 L538.7,476.4 L540.2,477.7 L541.9,479.0 L543.5,480.2 L544.8,481.3 L545.2,482.4 L544.8,483.4 L543.7,484.4 L542.2,485.2 L540.6,486.1 L539.0,487.0 L537.9,488.0 L536.8,489.3 L536.0,490.6 L535.3,492.1 L534.7,493.6 L534.2,495.4 L533.9,496.7 L533.7,498.2 L533.6,499.7 L533.5,501.3 L533.4,503.0 L533.3,504.7 L533.1,506.5 L532.8,507.9 L532.5,509.6 L532.1,511.3 L531.7,513.1 L531.3,514.8 L530.9,516.5 L530.6,518.0 L530.3,519.2 L530.1,520.1 M701.1,289.2 L701.3,290.2 L701.6,291.4 L701.9,293.0 L702.2,294.7 L702.6,296.4 L703.0,298.3 L703.5,300.1 L703.9,301.7 L704.4,303.3 L705.0,304.8 L705.6,306.2 L706.2,307.6 L706.9,309.0 L707.6,310.3 L708.4,311.6 L709.2,313.0 L710.0,314.3 L710.8,315.7 L711.7,317.1 L712.6,318.6 L713.5,320.0 L714.5,321.4 L715.4,322.8 L716.4,324.1 L717.3,325.4 L718.4,326.8 L719.3,328.2 L720.3,329.5 L721.3,330.8 L722.3,332.1 L723.5,333.4 L724.7,334.7 L725.8,335.7 L726.9,336.7 L728.1,337.7 L729.4,338.8 L730.7,339.8 L732.0,340.8 L733.3,341.8 L734.6,342.9 L735.8,343.9 L737.1,344.9 L738.3,345.9 L739.6,346.9 L740.8,347.9 L742.1,348.9 L743.3,349.9 L744.6,351.0 L745.7,352.0 L746.9,353.1 L748.0,354.3 L749.1,355.5 L750.2,356.8 L751.2,358.0 L752.3,359.3 L753.3,360.6 L754.2,361.8 L755.2,363.1 L756.1,364.2 L757.3,365.6 L758.5,366.9 L759.6,368.2 L760.7,369.5 L761.7,370.7 L762.7,372.0 L763.5,373.4 L764.2,375.0 L764.7,376.5 L765.2,378.2 L765.6,379.8 L766.0,381.4 L766.5,383.0 L767.2,384.5 L768.1,386.0 L769.1,387.4 L770.2,388.7 L771.4,390.0 L772.5,391.3 L773.6,392.6 L774.6,393.8 L775.6,395.1 L776.5,396.4 L777.4,397.7 L778.2,398.9 L779.1,400.1 L780.1,401.2 L781.3,402.2 L782.5,403.1 L783.7,404.0 L785.0,404.9 L786.3,405.8 L787.5,406.7 L788.8,407.6 L790.1,408.4 L791.3,409.2 L792.6,410.1 L793.8,411.1 L794.9,412.2 L795.8,413.4 L796.7,414.6 L797.5,415.8 L798.3,417.2 L799.1,418.6 L799.8,420.0 L800.5,421.5 L801.1,423.0 L801.7,424.5 L802.3,426.1 L802.9,427.7 L803.3,429.3 L803.8,431.0 L804.2,432.6 L804.5,434.2 L804.7,436.1 L804.9,437.9 L805.0,439.7 L805.1,441.3 L805.2,442.6 L805.3,443.6 M546.6,620.5 L745.3,632.0 M745.3,632.0 L745.5,633.2 L745.8,634.9 L746.1,636.9 L746.5,638.9 L746.8,640.7 L747.1,642.4 L747.3,644.1 L747.5,645.8 L747.8,647.2 L748.4,648.5 L749.7,650.0 L751.3,651.1 L753.0,651.6 L754.7,651.6 L756.3,651.2 L757.7,650.0 L758.2,648.9 L758.5,647.4 L758.8,645.7 L759.0,643.9 L759.2,642.3 L759.5,640.7 L759.8,639.2 L760.1,637.6 L760.2,636.1 L760.2,634.5 L759.8,633.0 L759.3,631.4 L758.7,629.9 L758.1,628.3 L757.7,626.7 L757.4,625.2 L757.2,623.6 L757.0,622.0 L757.0,620.4 L757.1,619.0 L757.3,617.3 L757.8,615.6 L758.4,614.1 L759.2,612.8 L760.5,611.4 L762.1,610.3 L763.9,609.7 L765.3,609.5 L766.9,609.6 L768.5,609.9 L770.1,610.3 L771.6,610.8 L773.1,611.4 L774.6,612.1 L776.3,612.8 L777.8,613.4 L779.3,614.0 L780.9,614.6 L782.5,615.2 L784.1,615.9 L785.6,616.5 L787.2,617.2 L788.8,617.9 L790.4,618.5 L791.8,619.0 L793.6,619.5 L795.4,620.0 L797.0,620.3 L798.0,620.5 M280.0,520.0 L281.9,559.5 M281.9,559.5 L283.7,599.1 M283.7,599.1 L285.3,638.6 M285.3,638.6 L285.8,650.5 M536.3,594.6 L344.6,594.6 M344.6,594.6 L344.2,595.6 L343.6,597.1 L342.9,598.8 L342.2,600.7 L341.6,602.5 L341.2,604.2 L341.2,605.7 L341.7,607.3 L342.7,608.6 L343.9,609.8 L345.3,611.0 L346.4,612.3 L347.5,613.6 L348.5,615.0 L349.5,616.4 L350.6,617.7 L351.7,618.9 L353.0,619.8 L354.5,620.4 L356.0,621.1 L357.3,621.8 L358.3,622.8 L359.0,624.2 L359.4,625.8 L359.7,627.5 L359.7,629.2 L359.6,630.7 L359.1,632.5 L358.2,634.1 L357.2,635.7 L356.5,637.3 L356.0,639.1 L355.5,641.0 L355.4,642.7 L355.7,643.9 L357.2,644.2 L359.5,643.8 L360.9,643.9 L361.1,645.3 L360.6,647.2 L359.6,649.2 L358.5,650.6 L356.9,652.1 L355.4,653.5 L354.4,654.4 M529.7,520.0 L529.9,520.9 L530.3,522.1 L530.8,523.5 L531.3,525.1 L531.8,526.8 L532.3,528.5 L532.8,530.4 L533.2,532.2 L533.5,534.1 L533.6,535.8 L533.6,537.3 L533.5,538.7 L533.4,540.2 L533.2,541.8 L532.9,543.3 L532.6,544.9 L532.3,546.4 L532.0,548.0 L531.7,549.6 L531.4,551.2 L531.2,552.7 L531.0,554.3 L530.8,555.8 L530.6,557.4 L530.4,559.0 L530.2,560.6 L530.0,562.2 L529.8,563.8 L529.7,565.4 L529.6,567.0 L529.5,568.5 L529.5,570.0 L529.5,571.4 L529.7,572.7 L530.0,574.4 L530.4,576.1 L531.0,577.7 L531.7,579.2 L532.4,580.6 L533.1,582.0 L533.8,583.4 L534.4,584.7 L534.9,585.9 L535.5,587.6 L536.0,589.2 L536.4,590.6 L536.8,592.0 L537.2,593.3 L537.6,594.6 L538.1,596.1 L538.7,597.5 L539.3,598.9 L539.8,600.3 L540.2,601.7 L540.6,603.2 L540.8,604.7 L541.1,606.2 L541.3,607.9 L541.5,609.6 L541.5,611.1 L541.2,612.7 L540.7,614.4 L540.5,616.2 L540.6,617.8 L541.3,619.1 L542.8,620.2 L543.8,620.5 L544.9,620.7 L546.2,620.9 L547.7,621.1 L549.3,621.2 L551.0,621.3 L552.8,621.4 L554.6,621.5 L556.5,621.5 L558.4,621.5 L560.2,621.5 L562.0,621.5 L563.7,621.5 L565.3,621.5 L566.7,621.5 L568.0,621.5 L569.1,621.5 L570.0,621.5" fill="none" stroke="#000" stroke-width="1" stroke-linejoin="round" shape-rendering="crispEdges"/>
<!--RINGS-->
<g fill="none" stroke="#d6d6d6" stroke-width="1" shape-rendering="crispEdges">
<circle cx="407" cy="407" r="159.5"/>
<circle cx="407" cy="407" r="279.5"/>
<circle cx="407" cy="407" r="399.5"/>
<circle cx="407" cy="407" r="519.5"/>
</g>
<circle cx="407" cy="407" r="39.5" fill="none" stroke="#ff0000" stroke-width="1" shape-rendering="crispEdges"/>
<g fill="#5d4f4b">
<rect x="394" y="0" width="23" height="12"/>
<rect x="394" y="123" width="23" height="9"/>
<rect x="395" y="243" width="22" height="9"/>
<rect x="398" y="363" width="15" height="9"/>
</g>
<g font-family="'Liberation Mono','DejaVu Sans Mono',monospace" font-size="11.67" fill="#f4f08c" text-anchor="middle">
<text x="405.5" y="11">313</text>
<text x="405.5" y="131">219</text>
<text x="406" y="251">125</text>
<text x="406" y="371">31</text>
</g>
<path d="M590.6,84.5h6" stroke="#e8a020" stroke-width="1"/>
<g stroke="#ff6400" stroke-width="1" fill="none"><circle cx="768.5" cy="69.5" r="4" stroke-width="1.35"/><path d="M766,69.5h5M768.5,67v5"/></g>
<path d="M733.6,156.5h6" stroke="#f0e020" stroke-width="1"/>
<path d="M720.6,204.5h6" stroke="#e88018" stroke-width="1"/>
<path d="M725.4,209.5h6" stroke="#e8a020" stroke-width="1"/>
<path d="M661.5,253.5h6" stroke="#e8a020" stroke-width="1"/>
<path d="M780.1,296.5h6" stroke="#e8b820" stroke-width="1"/>
<path d="M784.5,399.5h6" stroke="#e87018" stroke-width="1"/>
<g stroke="#f8d800" stroke-width="1" fill="none"><circle cx="772.5" cy="530.5" r="4" stroke-width="1.35"/><path d="M770,530.5h5M772.5,528v5"/></g>
<path d="M445,705.5h7M448.5,702v7" stroke="#f0d020" stroke-width="1"/>
<path d="M455.6,767.5h6" stroke="#e8a020" stroke-width="1"/>
<path d="M205.3,748.5h6" stroke="#e8a020" stroke-width="1"/>
<path d="M172.8,753.5h6" stroke="#e8a020" stroke-width="1"/>
<path d="M170.4,730.5h6" stroke="#f0e020" stroke-width="1"/>
<path d="M196.6,748.5h6" stroke="#f0e020" stroke-width="1"/>
</svg>
<div id="legend" style="position:absolute;left:2px;top:752px;width:245px;height:46px;box-sizing:border-box;border:1px solid transparent;">
<div style="position:absolute;left:0;top:0;width:241px;height:42px;border:1px solid #8c8c8c;background:#000;"></div>
<div class="lg" style="left:5px;top:4px;">Symbols</div>
<div class="lg" style="left:45px;top:4px;">-CG</div>
<div class="lg" style="left:70px;top:4px;">-IC</div>
<div class="lg" style="left:91px;top:4px;">+CG</div>
<div class="lg" style="left:115px;top:4px;">+IC</div>
<div class="lg" style="left:145px;top:4px;">Strike age color codes</div>
<div class="lg" style="left:5px;top:17px;">Recent</div>
<div class="lg" style="left:5px;top:30px;">Old</div>
<div class="lg" style="left:145px;top:17px;color:#ecd81c;">15+</div>
<div class="lg" style="left:180px;top:17px;color:#e8a818;">30+</div>
<div class="lg" style="left:215px;top:17px;color:#e89018;">45+</div>
<div class="lg" style="left:145px;top:30px;color:#dc7818;">60+</div>
<div class="lg" style="left:180px;top:30px;color:#dc5c14;">75+</div>
<div class="lg" style="left:215px;top:30px;color:#e43c10;">90+</div>
<svg width="245" height="46" style="position:absolute;left:-1px;top:-1px;" fill="none" stroke-width="1" shape-rendering="crispEdges">
<g stroke="#00e8e8"><circle cx="52.5" cy="22.5" r="4" shape-rendering="auto"/><path d="M50,22.5h5"/><path d="M74,22.5h7"/><circle cx="102.5" cy="22.5" r="4" shape-rendering="auto"/><path d="M100,22.5h5M102.5,20v5"/><path d="M124,22.5h7M127.5,19v7"/></g>
<g stroke="#f4f020"><circle cx="52.5" cy="35.5" r="4" shape-rendering="auto"/><path d="M50,35.5h5"/><path d="M74,35.5h7"/><circle cx="102.5" cy="35.5" r="4" shape-rendering="auto"/><path d="M100,35.5h5M102.5,33v5"/><path d="M124,35.5h7M127.5,32v7"/></g>
</svg>
</div>
<div id="copy" style="position:absolute;left:679px;top:786px;width:121px;height:14px;background:#000;color:#fff;font-size:9.45px;line-height:13px;white-space:nowrap;text-indent:2.5px;">&copy;2005 Astrogenic Systems</div>
</div>

<!-- PANEL 1 -->
<div class="panel" style="top:8px;height:318px;"></div>
<div class="btn b" style="left:819px;top:16px;width:58px;height:18px;background:#5a0000;color:#e8d8d8;font-size:12.3px;letter-spacing:1px;text-indent:1px;line-height:18px;">STRIKE</div>
<div class="btn b" style="left:883px;top:16px;width:58px;height:18px;background:#303030;color:#b8b8b8;font-size:12.3px;letter-spacing:1.3px;text-indent:1.3px;line-height:18px;">NOISE</div>
<div class="btn b" style="left:994px;top:16px;width:128px;height:18px;background:#303030;font-size:13px;line-height:18px;"><span style="position:absolute;left:4px;top:0;letter-spacing:0.4px;">Bng 211°</span><span style="position:absolute;right:2.5px;top:0;color:#00e400;letter-spacing:0.9px;">311mi</span></div>

<div class="btn" style="left:821px;top:64px;width:82px;height:16px;background:#555;font-size:13px;line-height:14px;">Strikes/min</div>
<div class="btn" style="left:931px;top:64px;width:82px;height:16px;background:#555;font-size:13px;line-height:14px;">Close/min</div>
<div class="btn" style="left:1041px;top:64px;width:82px;height:16px;background:#555;font-size:13px;line-height:14px;">Noises/min</div>

<div class="t b r big" style="left:822px;width:82px;top:86px;">0</div>
<div class="t b r big" style="left:932px;width:82px;top:86px;">0</div>
<div class="t b r big g" style="left:1042px;width:82px;top:86px;">0</div>

<div class="t r n" style="left:803px;width:100px;top:130px;">Total Strikes</div>
<div class="t r n" style="left:913px;width:100px;top:130px;">Total Close</div>
<div class="t r n g" style="left:1023px;width:100px;top:130px;">Total Noises</div>
<div class="t r n" style="left:803px;width:100px;top:148px;">1373</div>
<div class="t r n" style="left:913px;width:100px;top:148px;">0</div>
<div class="t r n" style="left:1023px;width:100px;top:148px;">162</div>

<div class="t n g" style="left:821px;top:202px;">Lightning type distribution</div>
<div class="hr" style="left:821px;top:217px;width:303px;"></div>

<div class="t b s" style="left:821px;top:224px;">Cloud-ground</div>
<div class="t n" style="left:912px;top:224px;">+</div>
<div class="bar" style="left:925px;top:227px;"><i style="width:43%;background:#ff0000;"></i></div>
<div class="t b s" style="left:979px;top:224px;">43%</div>
<div class="t b s" style="left:1016px;top:224px;">&minus;</div>
<div class="bar" style="left:1028px;top:227px;"><i style="width:13%;background:#99ccff;"></i></div>
<div class="t b s" style="left:1082px;top:224px;">13%</div>
<div class="t n g" style="left:821px;top:248px;">Count</div>
<div class="t b s" style="left:925px;top:248px;">588</div>
<div class="t b s" style="left:1028px;top:248px;">182</div>

<div class="t b s" style="left:821px;top:278px;">Intracloud</div>
<div class="t n" style="left:912px;top:278px;">+</div>
<div class="bar" style="left:925px;top:281px;"><i style="width:7%;background:#ff69b4;"></i></div>
<div class="t b s" style="left:979px;top:278px;">7%</div>
<div class="t b s" style="left:1016px;top:278px;">&minus;</div>
<div class="bar" style="left:1028px;top:281px;"><i style="width:36%;background:#00ff00;"></i></div>
<div class="t b s" style="left:1082px;top:278px;">36%</div>
<div class="t n g" style="left:821px;top:302px;">Count</div>
<div class="t b s" style="left:925px;top:302px;">102</div>
<div class="t b s" style="left:1028px;top:302px;">501</div>

<!-- PANEL 2 -->
<div class="panel" style="top:333px;height:113px;"></div>
<div class="t b date" style="left:821px;top:336.5px;">10/22/2025 8:29:16 PM</div>
<div class="hr" style="left:821px;top:358px;width:303px;"></div>
<div class="t n" style="left:821px;top:375px;">Squelch</div>
<div class="t n" style="left:909px;top:375px;">0</div>
<div class="t n" style="left:981px;top:375px;">Upload</div>
<div class="t n g" style="left:1061px;top:375px;">Disabled</div>
<div class="t n" style="left:821px;top:395px;">Persistence</div>
<div class="t n" style="left:909px;top:395px;">90 min</div>
<div class="t n" style="left:981px;top:395px;">Capture</div>
<div class="t n gr" style="left:1061px;top:395px;">Active</div>
<div class="t n" style="left:821px;top:415px;">Range</div>
<div class="t n" style="left:909px;top:415px;">313 mi</div>
<div class="t n" style="left:981px;top:415px;">Receiver</div>
<div class="t n gr" style="left:1061px;top:415px;">Enabled</div>

<!-- PANEL 3 -->
<div class="panel" style="top:453px;height:348px;"></div>
<div class="t n g" style="left:821px;top:462px;">Uptime</div>
<div class="t n" style="left:909px;top:462px;">135:59</div>
<div class="t n g" style="left:981px;top:462px;">Peak time</div>
<div class="t n g" style="left:1061px;top:462px;">Plot</div>
<div class="t n g" style="left:821px;top:485px;">Peak rate</div>
<div class="t n" style="left:909px;top:485px;">11/min</div>
<div class="t n" style="left:982px;top:485px;">12:06 AM</div>
<div class="t n" style="left:1061px;top:485px;">Strike</div>
<div class="t n g" style="left:822px;top:515px;">Trend graph</div>
<div class="t n" style="left:908px;top:515px;">60 min</div>
<svg id="trend" width="318" height="270" viewBox="812 535 318 270" style="position:absolute;left:812px;top:535px;">

<g fill="none" stroke-width="1" stroke-linejoin="miter">
<path stroke="#ffffff" d="M829.1,777.5L830.9,769.5L834.4,769.5L835.5,777.5 M844.3,777.5L847.2,768.5L849.4,761.5L850.7,769.5L853.1,769.5L855,761.5L856.8,762.5L858.7,769.5L859.9,769.5L861.7,761.5L864.8,761.5L867.3,777.5 M876.1,777.5L878,769.5L880.4,761.5L882.7,769.5L885.4,777.5 M891,777.5L892.5,769.5L896.2,769.5L897.4,777.5 M902.6,777.5L905.8,761.5L907.3,761.5L911.6,777.5 M926.1,777.5L927.6,769.5L930.7,769.5L932.5,777.5 M942.3,777.5L944.2,769.5L947.5,769.5L948.8,777.5 M952.9,777.5L954.3,769.5L957.5,769.5L959.2,777.5 M980.3,777.5L981.6,769.5L984.3,769.5L986.1,777.5 M993.1,777.5L994.8,769.5L996.1,761.5L998.8,761.5L1000.1,769.5L1001,777.5 M1003,777.5L1004.3,769.5L1007.6,769.5L1008.9,777.5 M1016.2,777.5L1018.2,769.5L1021.2,769.5L1022.8,777.5 M1030,777.5L1031.7,769.5L1039.2,769.5L1041,777.5 M1049.1,777.5L1051.1,769.5L1054.4,769.5L1055.7,777.5 M1066.9,777.5L1068.9,769.5L1072.2,769.5L1073.5,777.5 M1075.7,777.5L1076.8,771L1078.4,761.5L1081.4,761.5L1083.1,777.5"/>
<path stroke="#00e000" d="M879.5,777.5L879.5,770.5L881.4,769.5 M906,769.7L907.9,776.4L909.1,777.5 M1035.5,770.5L1035.5,776.5"/>
<path stroke="#ff0000" d="M903.3,777.5L904.8,769.5L906.3,769.5 M995.1,776.5L996.4,769.8 M1034.4,776.5L1035,773 M1036,771L1036.5,769.8"/>
<path stroke="#ff69b4" d="M996.4,769.8L998.4,769.8L999,773.7"/>
<path stroke="#99ccff" d="M880.8,772.8L882,776.4"/>
<path stroke="#c8c8c8" d="M822,777.5H1089 M1088.5,542V778 M822.5,775V779 M866.5,776V779 M911.5,776V779 M955.5,776V779 M1000.5,776V779 M1044.5,776V779 M1084,542.5H1089 M1084,620.5H1089 M1084,699.5H1089 M1086,581.5H1089 M1086,659.5H1089 M1086,738.5H1089"/>
</g>
<g fill="#c8c8c8" font-size="11.5" font-family="'DejaVu Sans Condensed','DejaVu Sans','Liberation Sans',sans-serif">
<text x="1092.3" y="547">30</text>
<text x="1092.3" y="625">20</text>
<text x="1092.3" y="704">10</text>
<text x="820.5" y="793">60</text>
<text x="865" y="793">50</text>
<text x="909.5" y="793">40</text>
<text x="954" y="793">30</text>
<text x="998.5" y="793">20</text>
<text x="1043" y="793">10</text>
<text x="1087.3" y="793">0</text>
<text x="1100.5" y="793">min</text>
</g>

</svg>


</body>
</html>
